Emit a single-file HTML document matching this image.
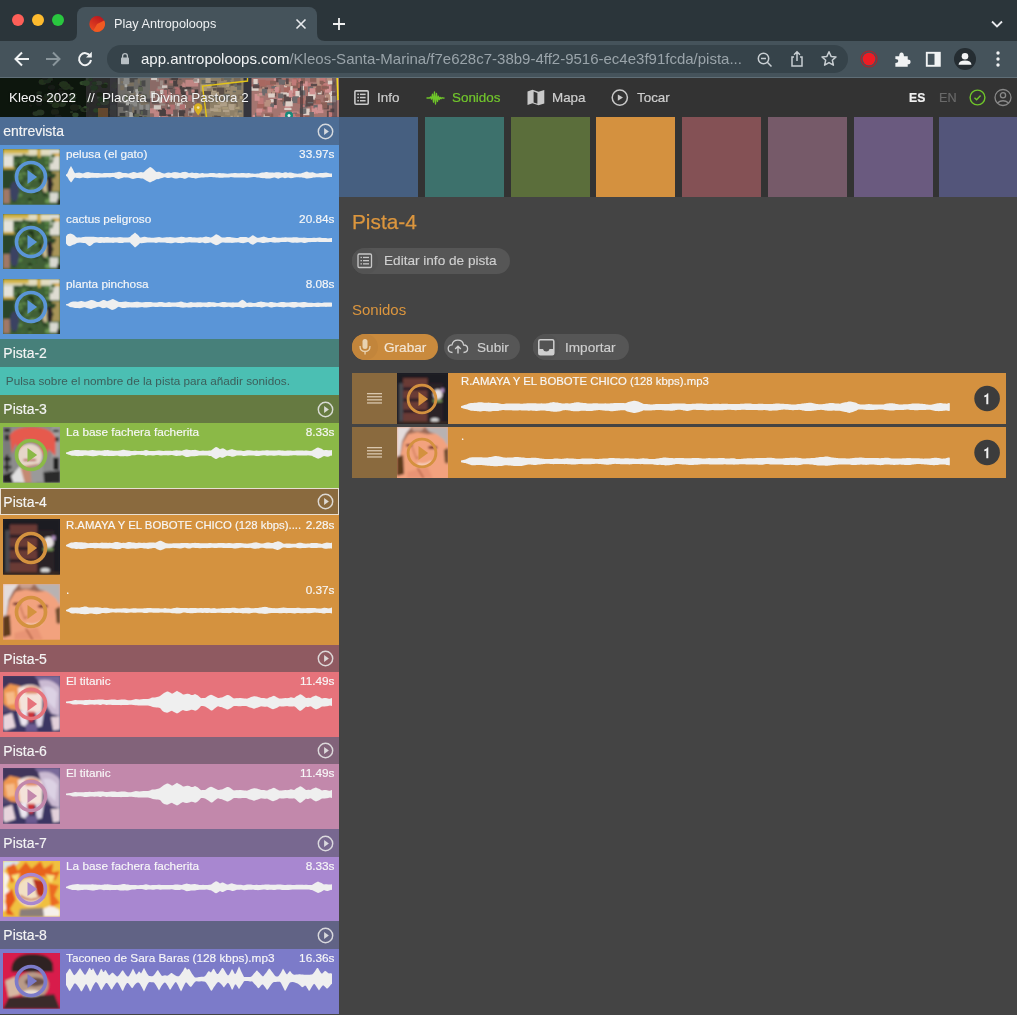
<!DOCTYPE html>
<html><head><meta charset="utf-8"><style>*{margin:0;padding:0;box-sizing:border-box}
html,body{width:1017px;height:1015px;overflow:hidden;background:#444;font-family:"Liberation Sans",sans-serif}
.ab{position:absolute}
.hdr{left:0;width:339px;color:#f4f4f4;font-size:14px;line-height:16px;-webkit-text-stroke:0.15px #f4f4f4}
.msg{left:0;width:339px;color:#3c5f5b;font-size:11.75px;line-height:13px}
.it{font-size:11.8px;line-height:14px;color:#f7f7f7;white-space:nowrap;-webkit-text-stroke:0.15px #f7f7f7}
.it2{font-size:11.35px;line-height:14px;color:#f7f7f7;white-space:nowrap;-webkit-text-stroke:0.15px #f7f7f7}
.nav{font-size:13.4px;line-height:16px;-webkit-text-stroke:0.2px currentColor}
.pill{border-radius:13px}
.btxt{font-size:13.6px;line-height:16px;color:#cfcfcf;-webkit-text-stroke:0.15px currentColor}
.badge{width:25.6px;height:25.6px;border-radius:50%;background:#3c3c3c;color:#f0f0f0;font-size:14.5px;font-weight:bold;line-height:25.6px;text-align:center}
.th{position:absolute;overflow:hidden}
.th-garden{background:linear-gradient(180deg,#c9a94a 0%,#8c8a5a 12%,#4f6e3e 30%,#3e5e34 60%,#5a7a44 85%,#6a8050 100%)}
.th-karma{background:radial-gradient(ellipse at 50% 18%,#e0453a 0%,#d2382e 30%,transparent 45%),radial-gradient(ellipse at 50% 70%,#e8c0b0 0%,#c09080 35%,transparent 60%),linear-gradient(90deg,#6a6a6a,#9a9a9a 50%,#707070)}
.th-dark{background:radial-gradient(ellipse at 40% 55%,#6a2a22 0%,#4a2520 35%,transparent 60%),linear-gradient(90deg,#1a1a1e,#2a1e20 60%,#1c1c20)}
.th-ban{background:radial-gradient(ellipse at 40% 60%,#f0a080 0%,#e09070 40%,#b0603a 75%),linear-gradient(#ddd,#c88)}
.th-witch{background:radial-gradient(ellipse at 35% 45%,#f0a060 0%,#d08060 25%,transparent 45%),radial-gradient(ellipse at 75% 40%,#c0b0d0 0%,transparent 40%),linear-gradient(135deg,#3a3050,#5a4a70 50%,#2a2040)}
.th-flame{background:radial-gradient(ellipse at 50% 55%,#f0e0c0 0%,#e8b060 30%,#f07020 55%,#f8e060 80%,#fff 100%)}
.th-red{background:radial-gradient(ellipse at 50% 55%,#c0a090 0%,#6a4040 30%,#3a2a30 55%,transparent 65%),linear-gradient(#d81848,#e02050)}
div.ab{will-change:transform}
</style></head>
<body>
<svg width="0" height="0" style="position:absolute"><defs><filter id="bl" x="0" y="0" width="100%" height="100%"><feGaussianBlur stdDeviation="1.6"/></filter><symbol id="t-garden" viewBox="0 0 100 100" preserveAspectRatio="none"><rect width="100" height="100" fill="#3f5f36"/><g filter="url(#bl)"><rect width="100" height="100" fill="#3f5f36"/>
<rect x="0" y="0" width="100" height="12" fill="#e2dcc0"/>
<rect x="0" y="0" width="45" height="8" fill="#d2b448"/>
<rect x="60" y="0" width="6" height="16" fill="#c8a840"/>
<rect x="0" y="12" width="18" height="22" fill="#e4e2d8"/>
<rect x="0" y="32" width="20" height="5" fill="#c9a845"/>
<rect x="0" y="37" width="20" height="34" fill="#2a442c"/>
<rect x="82" y="0" width="18" height="38" fill="#dedcd2"/>
<rect x="86" y="8" width="14" height="5" fill="#d8a840"/>
<rect x="86" y="40" width="14" height="36" fill="#a89458"/>
<ellipse cx="40.7" cy="23.3" rx="4.6" ry="1.7" fill="#24381f"/><ellipse cx="24.6" cy="61.3" rx="5.6" ry="2.1" fill="#2c4628"/><ellipse cx="48.4" cy="16.1" rx="2.4" ry="2.8" fill="#24381f"/><ellipse cx="26.7" cy="29.6" rx="4.5" ry="4.3" fill="#24381f"/><ellipse cx="59.0" cy="14.4" rx="2.9" ry="3.2" fill="#3e6234"/><ellipse cx="38.3" cy="22.7" rx="2.5" ry="2.4" fill="#4a7038"/><ellipse cx="30.7" cy="61.2" rx="4.6" ry="2.6" fill="#24381f"/><ellipse cx="67.8" cy="59.7" rx="4.5" ry="3.0" fill="#24381f"/><ellipse cx="47.9" cy="37.6" rx="4.3" ry="2.9" fill="#5a8646"/><ellipse cx="35.4" cy="25.8" rx="5.1" ry="1.7" fill="#5a8646"/><ellipse cx="54.8" cy="87.0" rx="4.9" ry="2.4" fill="#2c4628"/><ellipse cx="26.3" cy="46.8" rx="5.0" ry="2.0" fill="#6e9a54"/><ellipse cx="47.5" cy="94.7" rx="2.3" ry="3.2" fill="#5a8646"/><ellipse cx="41.8" cy="40.8" rx="4.0" ry="3.9" fill="#2c4628"/><ellipse cx="76.8" cy="93.1" rx="3.9" ry="3.5" fill="#2c4628"/><ellipse cx="69.2" cy="37.2" rx="4.3" ry="3.5" fill="#6e9a54"/><ellipse cx="37.9" cy="43.9" rx="4.7" ry="1.6" fill="#6e9a54"/><ellipse cx="42.9" cy="63.8" rx="4.0" ry="2.2" fill="#5a8646"/><ellipse cx="27.1" cy="31.8" rx="3.6" ry="4.1" fill="#2c4628"/><ellipse cx="29.6" cy="45.3" rx="3.1" ry="1.9" fill="#6e9a54"/><ellipse cx="78.5" cy="34.5" rx="3.7" ry="2.6" fill="#6e9a54"/><ellipse cx="85.0" cy="23.3" rx="2.7" ry="2.2" fill="#3e6234"/><ellipse cx="18.8" cy="83.1" rx="2.7" ry="2.3" fill="#3e6234"/><ellipse cx="47.3" cy="42.5" rx="4.3" ry="4.4" fill="#4a7038"/><ellipse cx="78.1" cy="93.6" rx="4.6" ry="3.7" fill="#6e9a54"/><ellipse cx="81.0" cy="78.6" rx="5.5" ry="3.9" fill="#6e9a54"/><ellipse cx="45.9" cy="44.7" rx="3.9" ry="2.7" fill="#3e6234"/><ellipse cx="22.7" cy="28.4" rx="2.6" ry="2.5" fill="#2c4628"/><ellipse cx="25.2" cy="59.9" rx="4.1" ry="4.3" fill="#24381f"/><ellipse cx="19.8" cy="86.9" rx="4.5" ry="1.9" fill="#5a8646"/><ellipse cx="84.9" cy="63.0" rx="3.9" ry="1.8" fill="#6e9a54"/><ellipse cx="87.5" cy="51.0" rx="3.9" ry="1.8" fill="#2c4628"/><ellipse cx="70.5" cy="75.2" rx="3.9" ry="3.6" fill="#24381f"/><ellipse cx="19.6" cy="93.7" rx="4.1" ry="1.9" fill="#24381f"/><ellipse cx="82.0" cy="76.7" rx="3.2" ry="3.4" fill="#2c4628"/><ellipse cx="66.7" cy="33.0" rx="3.5" ry="2.0" fill="#3e6234"/><ellipse cx="55.3" cy="78.6" rx="3.3" ry="2.2" fill="#3e6234"/><ellipse cx="74.4" cy="82.0" rx="5.0" ry="2.2" fill="#24381f"/><ellipse cx="52.5" cy="74.3" rx="6.0" ry="3.9" fill="#6e9a54"/><ellipse cx="36.1" cy="70.9" rx="5.8" ry="2.8" fill="#4a7038"/><ellipse cx="87.2" cy="94.0" rx="3.5" ry="2.2" fill="#3e6234"/><ellipse cx="50.9" cy="39.7" rx="3.9" ry="4.5" fill="#24381f"/><ellipse cx="76.8" cy="52.2" rx="4.6" ry="3.9" fill="#2c4628"/><ellipse cx="76.4" cy="20.6" rx="3.6" ry="3.6" fill="#3e6234"/><ellipse cx="51.5" cy="25.7" rx="5.2" ry="2.5" fill="#4a7038"/><ellipse cx="45.7" cy="45.3" rx="5.8" ry="3.7" fill="#3e6234"/><ellipse cx="87.5" cy="12.4" rx="4.4" ry="2.9" fill="#4a7038"/><ellipse cx="28.2" cy="82.7" rx="5.9" ry="3.5" fill="#5a8646"/><ellipse cx="28.9" cy="58.2" rx="2.1" ry="3.9" fill="#4a7038"/><ellipse cx="63.5" cy="56.3" rx="5.7" ry="2.8" fill="#3e6234"/><ellipse cx="75.8" cy="28.6" rx="3.0" ry="2.4" fill="#3e6234"/><ellipse cx="71.5" cy="38.7" rx="4.2" ry="4.0" fill="#2c4628"/><ellipse cx="81.7" cy="41.1" rx="3.8" ry="3.3" fill="#24381f"/><ellipse cx="47.4" cy="90.8" rx="4.0" ry="3.1" fill="#24381f"/><ellipse cx="53.7" cy="86.8" rx="5.1" ry="3.3" fill="#3e6234"/><ellipse cx="30.1" cy="51.7" rx="4.9" ry="3.2" fill="#5a8646"/><ellipse cx="65.8" cy="56.7" rx="3.9" ry="3.8" fill="#24381f"/><ellipse cx="22.0" cy="26.8" rx="2.2" ry="1.8" fill="#6e9a54"/><ellipse cx="57.3" cy="76.9" rx="5.6" ry="2.8" fill="#24381f"/><ellipse cx="86.1" cy="63.3" rx="2.8" ry="2.3" fill="#24381f"/><ellipse cx="55.3" cy="52.1" rx="5.8" ry="3.6" fill="#5a8646"/><ellipse cx="82.6" cy="88.6" rx="2.8" ry="2.8" fill="#6e9a54"/><ellipse cx="26.5" cy="48.9" rx="2.3" ry="2.2" fill="#2c4628"/><ellipse cx="32.9" cy="36.6" rx="2.5" ry="3.8" fill="#4a7038"/><ellipse cx="63.0" cy="42.2" rx="3.0" ry="1.9" fill="#6e9a54"/><ellipse cx="33.4" cy="93.8" rx="3.6" ry="3.0" fill="#4a7038"/><ellipse cx="76.3" cy="24.2" rx="3.7" ry="3.0" fill="#5a8646"/><ellipse cx="47.5" cy="41.4" rx="2.4" ry="2.6" fill="#5a8646"/><ellipse cx="56.8" cy="48.8" rx="2.1" ry="2.5" fill="#24381f"/><ellipse cx="38.7" cy="94.5" rx="2.5" ry="4.3" fill="#3e6234"/><ellipse cx="86.0" cy="19.2" rx="3.1" ry="1.6" fill="#3e6234"/><ellipse cx="36.9" cy="21.4" rx="3.7" ry="4.2" fill="#5a8646"/><ellipse cx="46.4" cy="57.2" rx="4.1" ry="3.0" fill="#5a8646"/><ellipse cx="24.3" cy="15.1" rx="4.8" ry="2.8" fill="#2c4628"/><ellipse cx="36.8" cy="11.5" rx="2.4" ry="2.3" fill="#24381f"/><ellipse cx="77.9" cy="15.9" rx="5.5" ry="2.9" fill="#5a8646"/><ellipse cx="87.6" cy="46.8" rx="5.7" ry="3.4" fill="#2c4628"/><ellipse cx="54.9" cy="31.0" rx="2.4" ry="2.0" fill="#2c4628"/><ellipse cx="30.7" cy="92.0" rx="4.5" ry="3.1" fill="#3e6234"/><ellipse cx="38.3" cy="54.0" rx="2.7" ry="2.5" fill="#2c4628"/><ellipse cx="87.6" cy="13.3" rx="2.1" ry="3.0" fill="#3e6234"/><ellipse cx="54.0" cy="31.6" rx="3.8" ry="3.5" fill="#4a7038"/><ellipse cx="48.3" cy="53.6" rx="5.3" ry="2.7" fill="#24381f"/><ellipse cx="39.5" cy="28.9" rx="2.9" ry="2.1" fill="#4a7038"/><ellipse cx="69.0" cy="22.3" rx="6.0" ry="4.4" fill="#3e6234"/><ellipse cx="19.0" cy="65.0" rx="5.5" ry="2.8" fill="#2c4628"/><ellipse cx="23.9" cy="84.0" rx="5.5" ry="3.5" fill="#5a8646"/><ellipse cx="59.9" cy="71.0" rx="2.2" ry="2.1" fill="#5a8646"/><ellipse cx="49.2" cy="33.2" rx="5.8" ry="4.4" fill="#24381f"/><ellipse cx="40.6" cy="13.0" rx="5.5" ry="2.2" fill="#3e6234"/>
<rect x="0" y="72" width="12" height="26" fill="#a07868"/>
<ellipse cx="20" cy="76" rx="8" ry="18" fill="#3b4262"/>
<ellipse cx="74" cy="66" rx="5" ry="12" fill="#c8b890"/>
<ellipse cx="82" cy="64" rx="5" ry="16" fill="#2a2428"/>
<rect x="82" y="78" width="15" height="18" fill="#d8d8d0"/>
<rect x="95" y="90" width="5" height="10" fill="#181818"/></g></symbol><symbol id="t-karma" viewBox="0 0 100 100" preserveAspectRatio="none"><rect width="100" height="100" fill="#8c8c8c"/><g filter="url(#bl)"><rect width="100" height="100" fill="#8c8c8c"/>
<rect x="0" y="0" width="14" height="100" fill="#7a7a7a"/>
<rect x="2" y="3" width="10" height="6" fill="#222"/><rect x="3" y="14" width="8" height="10" fill="#333"/>
<rect x="2" y="55" width="12" height="5" fill="#1a1a1a"/><rect x="5" y="50" width="4" height="30" fill="#1a1a1a"/><rect x="1" y="70" width="14" height="4" fill="#222"/>
<rect x="86" y="0" width="14" height="100" fill="#a0a0a0"/>
<rect x="88" y="5" width="10" height="4" fill="#222"/><rect x="90" y="18" width="8" height="8" fill="#333"/>
<rect x="88" y="55" width="10" height="22" fill="#222"/><rect x="84" y="88" width="12" height="6" fill="#333"/>
<path d="M12 15 Q20 0 50 0 Q85 0 92 20 L92 52 L80 40 L74 55 L62 30 L38 22 L30 45 L22 30 L16 48Z" fill="#e65a4e"/>
<ellipse cx="47" cy="52" rx="22" ry="22" fill="#e6d6c8"/>
<path d="M30 72 L62 66 L65 100 L30 100Z" fill="#c48a72"/>
<path d="M0 86 L20 80 L30 100 L0 100Z" fill="#222"/>
<path d="M14 88 L30 70 L38 100 L18 100Z" fill="#e0e0e0"/>
<path d="M60 82 L100 78 L100 100 L58 100Z" fill="#2a2a2a"/>
<path d="M48 72 L70 68 L72 100 L50 100Z" fill="#9a9a9a"/>
<rect x="36" y="58" width="22" height="3" fill="#a82a2a"/></g></symbol><symbol id="t-dark" viewBox="0 0 100 100" preserveAspectRatio="none"><rect width="100" height="100" fill="#1b1b23"/><g filter="url(#bl)"><rect width="100" height="100" fill="#1b1b23"/>
<rect x="4" y="20" width="8" height="75" fill="#4a4a50"/>
<rect x="12" y="10" width="48" height="86" fill="#6a3a34"/>
<rect x="12" y="28" width="48" height="6" fill="#2a1e26"/>
<rect x="12" y="50" width="48" height="6" fill="#2a1e26"/>
<rect x="12" y="72" width="48" height="6" fill="#2a1e26"/>
<rect x="60" y="20" width="30" height="80" fill="#2c2028"/>
<ellipse cx="80" cy="42" rx="9" ry="10" fill="#e6dfe0"/>
<rect x="70" y="52" width="18" height="5" fill="#7a9a5a"/>
<rect x="86" y="30" width="6" height="8" fill="#b090c0"/>
<ellipse cx="74" cy="92" rx="8" ry="4" fill="#ddd"/>
<rect x="0" y="95" width="100" height="5" fill="#3a2a20"/></g></symbol><symbol id="t-ban" viewBox="0 0 100 100" preserveAspectRatio="none"><rect width="100" height="100" fill="#f2a27e"/><g filter="url(#bl)"><rect width="100" height="100" fill="#f2a27e"/>
<path d="M0 0 L100 0 L100 22 L80 12 L60 14 L40 10 L22 14 L12 30 L6 60 L0 62Z" fill="#9a6a58"/>
<path d="M0 0 L28 0 L18 12 L10 28 L6 55 L0 58Z" fill="#e4dcdc"/>
<path d="M55 0 L100 0 L100 38 L92 25 L78 14 L64 10Z" fill="#b8b2b2"/>
<path d="M28 0 L55 0 L48 8 L32 8Z" fill="#c8a090"/>
<path d="M0 60 L12 55 L14 92 L0 96Z" fill="#5e3a1e"/>
<path d="M92 45 L100 40 L100 72 L94 70Z" fill="#6a4a2c"/>
<ellipse cx="70" cy="40" rx="9" ry="3.2" fill="#6e2624"/>
<ellipse cx="24" cy="36" rx="7" ry="2.6" fill="#6e2a24"/>
<ellipse cx="85" cy="50" rx="6" ry="10" fill="#f0a080"/>
<path d="M40 72 Q55 78 68 68" stroke="#f6d8c8" stroke-width="4" fill="none"/>
<path d="M30 40 L38 62 L44 58" stroke="#c06a50" stroke-width="2" fill="none"/>
<path d="M20 88 L60 78 L70 100 L20 100Z" fill="#e89474"/>
<path d="M40 80 L52 100" stroke="#9a4a30" stroke-width="2"/></g></symbol><symbol id="t-witch" viewBox="0 0 100 100" preserveAspectRatio="none"><rect width="100" height="100" fill="#54486e"/><g filter="url(#bl)"><rect width="100" height="100" fill="#54486e"/>
<path d="M0 0 L100 0 L100 15 L60 22 L0 20Z" fill="#40345a"/>
<path d="M55 0 L100 0 L100 25 L70 18Z" fill="#7a6a9a"/>
<path d="M0 25 L12 14 L30 18 L38 40 L32 62 L14 60 L0 50Z" fill="#ee9650"/>
<path d="M4 30 L20 28 L22 50 L8 52Z" fill="#f6bc88"/>
<path d="M26 22 Q50 8 70 25 L68 64 Q50 72 30 64Z" fill="#f4e2da"/>
<path d="M38 22 Q52 14 64 24 L60 32 L40 32Z" fill="#e08a66"/>
<path d="M62 8 Q88 2 100 22 L100 80 L88 72 L74 50 L68 28Z" fill="#cabad2"/>
<path d="M70 20 Q85 15 95 30 L92 60 L80 48Z" fill="#dcd2e4"/>
<path d="M0 64 L30 62 L50 68 L70 64 L100 72 L100 100 L0 100Z" fill="#3a3462"/>
<path d="M42 64 L56 64 L52 82 L46 82Z" fill="#cc3038"/>
<path d="M26 64 L42 62 L44 92 L32 88Z" fill="#ece6f0"/>
<path d="M58 66 L72 64 L68 90 L58 92Z" fill="#e0d8e8"/>
<path d="M0 72 L16 66 L22 92 L4 98 L0 94Z" fill="#e6d4dc"/>
<path d="M84 74 L100 72 L100 96 L88 98Z" fill="#e2d0da"/>
<rect x="40" y="86" width="20" height="14" fill="#6a5a90"/></g></symbol><symbol id="t-flame" viewBox="0 0 100 100" preserveAspectRatio="none"><rect width="100" height="100" fill="#f0c040"/><g filter="url(#bl)"><rect width="100" height="100" fill="#f0c040"/>
<path d="M0 0 L30 0 L20 10 L8 8 L0 20Z" fill="#d6e6f2"/>
<path d="M0 18 L12 28 L6 45 L14 58 L2 72 L8 86 L0 90Z" fill="#f8f4ee"/>
<path d="M70 86 L84 80 L100 88 L100 100 L66 100Z" fill="#f6f0ea"/>
<path d="M6 12 L20 4 L26 18 L40 2 L50 14 L66 0 L72 14 L88 4 L86 20 L100 18 L92 34 L70 28 L30 30 L14 40Z" fill="#e8621e"/>
<path d="M4 60 L16 50 L22 70 L12 86 L20 98 L6 96Z" fill="#e6561c"/>
<path d="M80 40 L98 44 L90 62 L100 76 L84 82Z" fill="#ec6a22"/>
<path d="M14 26 L30 22 L24 40Z M74 24 L92 26 L84 40Z" fill="#fae27a"/>
<ellipse cx="48" cy="56" rx="24" ry="26" fill="#f2e0c4"/>
<path d="M52 32 L74 36 L72 66 L60 62 L56 46Z" fill="#b8321c"/>
<path d="M30 62 Q48 76 66 64" stroke="#c26040" stroke-width="3" fill="none"/>
<path d="M30 86 L70 84 L72 100 L28 100Z" fill="#8a7e7a"/></g></symbol><symbol id="t-red" viewBox="0 0 100 100" preserveAspectRatio="none"><rect width="100" height="100" fill="#d81a4c"/><g filter="url(#bl)"><rect width="100" height="100" fill="#d81a4c"/>
<path d="M15 25 Q20 0 55 2 Q90 4 88 28 L88 34 L15 34Z" fill="#2e2224"/>
<ellipse cx="52" cy="58" rx="28" ry="24" fill="#b89a88"/>
<ellipse cx="56" cy="52" rx="18" ry="8" fill="#6a5048"/>
<path d="M4 50 L22 42 L30 75 L10 80Z" fill="#d6b8a2"/>
<path d="M10 80 L90 74 L100 100 L0 100Z" fill="#3a2a2c"/>
<ellipse cx="50" cy="72" rx="16" ry="6" fill="#e8dcd0"/></g></symbol></defs></svg>
<div class="ab" style="left:0;top:0;width:1017px;height:41px;background:#2b353a"></div>
<div class="ab" style="left:0;top:41px;width:1017px;height:36px;background:#45535b"></div>
<div class="ab" style="left:0;top:77px;width:1017px;height:1px;background:#5f6e77"></div>
<div class="ab" style="left:12px;top:14px;width:12px;height:12px;border-radius:50%;background:#fe5f58"></div>
<div class="ab" style="left:32px;top:14px;width:12px;height:12px;border-radius:50%;background:#febb2e"></div>
<div class="ab" style="left:52px;top:14px;width:12px;height:12px;border-radius:50%;background:#29c73f"></div>
<div class="ab" style="left:77px;top:7px;width:240px;height:34px;background:#45535b;border-radius:8px 8px 0 0"></div>
<svg class="ab" style="left:69px;top:33px" width="8" height="8"><path d="M0 8 Q8 8 8 0 L8 8Z" fill="#45535b"/></svg>
<svg class="ab" style="left:317px;top:33px" width="8" height="8"><path d="M8 8 Q0 8 0 0 L0 8Z" fill="#45535b"/></svg>
<svg class="ab" style="left:89px;top:16px" width="16" height="16" viewBox="0 0 16 16"><defs><linearGradient id="fg" x1="0.8" y1="0" x2="0.2" y2="1"><stop offset="0" stop-color="#b8141e"/><stop offset="1" stop-color="#ea4a20"/></linearGradient></defs><circle cx="8.1" cy="7.9" r="7.8" fill="url(#fg)"/><path d="M8.1 7.9 L15.2 4.6 A7.8 7.8 0 0 1 4.2 14.65Z" fill="#f05a22"/></svg>
<div class="ab" style="left:113.5px;top:16.8px;font-size:12.7px;color:#eef0f2;white-space:nowrap">Play Antropoloops</div>
<svg class="ab" style="left:295px;top:18px" width="12" height="12" viewBox="0 0 12 12"><path d="M1.5 1.5 L10.5 10.5 M10.5 1.5 L1.5 10.5" stroke="#e8eaed" stroke-width="1.6"/></svg>
<svg class="ab" style="left:332px;top:17px" width="14" height="14" viewBox="0 0 14 14"><path d="M7 1 L7 13 M1 7 L13 7" stroke="#f0f0f0" stroke-width="1.8"/></svg>
<svg class="ab" style="left:990px;top:19px" width="14" height="10" viewBox="0 0 14 10"><path d="M2 2.5 L7 7.5 L12 2.5" fill="none" stroke="#e8eaed" stroke-width="1.8"/></svg>
<svg class="ab" style="left:12px;top:49px" width="20" height="20" viewBox="0 0 20 20"><path d="M17 10 L3.5 10 M10 3.5 L3.5 10 L10 16.5" fill="none" stroke="#f1f3f4" stroke-width="2"/></svg>
<svg class="ab" style="left:43px;top:49px" width="20" height="20" viewBox="0 0 20 20"><path d="M3 10 L16.5 10 M10 3.5 L16.5 10 L10 16.5" fill="none" stroke="#8a969c" stroke-width="2"/></svg>
<svg class="ab" style="left:75px;top:49px" width="20" height="20" viewBox="0 0 20 20"><path d="M15.2 7 A6 6 0 1 0 16 11" fill="none" stroke="#f1f3f4" stroke-width="2"/><path d="M16.8 2.8 L16.8 8.6 L11 8.6Z" fill="#f1f3f4"/></svg>
<div class="ab" style="left:107px;top:45px;width:741px;height:27.5px;border-radius:14px;background:#36434a"></div>
<svg class="ab" style="left:120px;top:52px" width="10" height="13" viewBox="0 0 10 13"><path d="M2.6 6 L2.6 4 A2.4 2.4 0 0 1 7.4 4 L7.4 6" fill="none" stroke="#b8bfc4" stroke-width="1.3"/><rect x="1" y="5.6" width="8" height="6.6" rx="0.8" fill="#b8bfc4"/></svg>
<div class="ab" style="left:141px;top:50px;font-size:15px;white-space:nowrap;color:#9aa4aa"><span style="color:#f1f3f4">app.antropoloops.com</span>/Kleos-Santa-Marina/f7e628c7-38b9-4ff2-9516-ec4e3f91fcda/pista...</div>
<svg class="ab" style="left:756px;top:50.5px" width="18" height="18" viewBox="0 0 18 18"><circle cx="7.5" cy="7.5" r="5.2" fill="none" stroke="#c8ced2" stroke-width="1.5"/><path d="M11.3 11.3 L15.5 15.5 M5 7.5 L10 7.5" stroke="#c8ced2" stroke-width="1.5"/></svg>
<svg class="ab" style="left:789px;top:50px" width="16" height="18" viewBox="0 0 16 18"><path d="M5 7 L3 7 L3 16 L13 16 L13 7 L11 7 M8 11 L8 2 M5 4.8 L8 1.8 L11 4.8" fill="none" stroke="#c8ced2" stroke-width="1.5"/></svg>
<svg class="ab" style="left:820px;top:50px" width="18" height="18" viewBox="0 0 18 18"><path d="M9 1.8 L11.1 6.4 L16 6.9 L12.3 10.2 L13.4 15.2 L9 12.6 L4.6 15.2 L5.7 10.2 L2 6.9 L6.9 6.4Z" fill="none" stroke="#c8ced2" stroke-width="1.5" stroke-linejoin="round"/></svg>
<svg class="ab" style="left:859px;top:49px" width="20" height="20" viewBox="0 0 20 20"><circle cx="10" cy="10" r="8" fill="none" stroke="#b02028" stroke-width="1.2"/><circle cx="10" cy="10" r="6.3" fill="#ee1c24"/></svg>
<svg class="ab" style="left:892.5px;top:50.5px" width="18" height="18" viewBox="0 0 18 18"><path d="M2 6 L6 6 Q6 2 8.5 2 Q11 2 11 6 L15 6 L15 9.5 Q18 9.5 18 12 Q18 14.5 15 14.5 L15 17 L2 17 L2 13 Q5 13 5 11 Q5 9 2 9Z" fill="#f1f3f4" transform="scale(0.95) translate(0.5,-0.5)"/></svg>
<svg class="ab" style="left:925px;top:51px" width="17" height="17" viewBox="0 0 17 17"><rect x="1.8" y="1.8" width="13" height="13" fill="none" stroke="#f1f3f4" stroke-width="1.9"/><rect x="9.5" y="1.5" width="5.5" height="13.5" fill="#f1f3f4"/></svg>
<div class="ab" style="left:954px;top:48px;width:22px;height:22px;border-radius:50%;background:#252d32"></div>
<svg class="ab" style="left:955px;top:49px" width="20" height="20" viewBox="0 0 20 20"><circle cx="10" cy="7.3" r="3.3" fill="#f1f3f4"/><path d="M3.5 15.8 Q4 11.6 10 11.6 Q16 11.6 16.5 15.8Z" fill="#f1f3f4"/></svg>
<svg class="ab" style="left:992.5px;top:50px" width="10" height="18" viewBox="0 0 10 18"><circle cx="5" cy="3" r="1.7" fill="#f1f3f4"/><circle cx="5" cy="9" r="1.7" fill="#f1f3f4"/><circle cx="5" cy="15" r="1.7" fill="#f1f3f4"/></svg>

<div class="ab mapbar" style="left:0;top:78px;width:339px;height:39px"><svg class="ab" style="left:0;top:0" width="339" height="39" viewBox="0 0 339 39"><defs><filter id="mb" x="0" y="0" width="100%" height="100%"><feGaussianBlur stdDeviation="0.6"/></filter></defs><g filter="url(#mb)"><rect width="339" height="39" fill="#0f120f"/><ellipse cx="87.5" cy="1.0" rx="2.5" ry="1.7" fill="#1a2418"/><ellipse cx="42.6" cy="4.0" rx="4.1" ry="2.9" fill="#22301f"/><ellipse cx="37.8" cy="16.5" rx="1.6" ry="1.1" fill="#1a2418"/><ellipse cx="50.9" cy="23.5" rx="3.5" ry="2.4" fill="#263624"/><ellipse cx="88.5" cy="21.3" rx="2.3" ry="1.6" fill="#22301f"/><ellipse cx="55.0" cy="33.9" rx="4.2" ry="2.9" fill="#1a2418"/><ellipse cx="92.8" cy="13.3" rx="2.0" ry="1.4" fill="#1e2a1c"/><ellipse cx="39.2" cy="14.8" rx="2.8" ry="1.9" fill="#1e2a1c"/><ellipse cx="84.3" cy="31.5" rx="4.1" ry="2.8" fill="#22301f"/><ellipse cx="41.2" cy="36.0" rx="1.8" ry="1.2" fill="#1e2a1c"/><ellipse cx="104.6" cy="24.1" rx="4.5" ry="3.2" fill="#22301f"/><ellipse cx="47.3" cy="2.7" rx="3.8" ry="2.7" fill="#1e2a1c"/><ellipse cx="118.7" cy="33.4" rx="4.5" ry="3.2" fill="#141a13"/><ellipse cx="55.0" cy="24.8" rx="2.8" ry="1.9" fill="#1e2a1c"/><ellipse cx="62.0" cy="26.1" rx="4.0" ry="2.8" fill="#263624"/><ellipse cx="88.3" cy="23.8" rx="2.1" ry="1.5" fill="#263624"/><ellipse cx="52.0" cy="18.0" rx="2.4" ry="1.7" fill="#263624"/><ellipse cx="91.9" cy="8.6" rx="2.6" ry="1.8" fill="#161c15"/><ellipse cx="50.6" cy="1.3" rx="2.6" ry="1.8" fill="#1e2a1c"/><ellipse cx="36.0" cy="35.6" rx="3.5" ry="2.4" fill="#263624"/><ellipse cx="58.3" cy="25.6" rx="2.9" ry="2.0" fill="#263624"/><ellipse cx="71.3" cy="10.3" rx="2.4" ry="1.7" fill="#22301f"/><ellipse cx="78.5" cy="29.1" rx="3.0" ry="2.1" fill="#22301f"/><ellipse cx="65.9" cy="8.6" rx="5.0" ry="3.5" fill="#22301f"/><ellipse cx="74.4" cy="29.5" rx="4.5" ry="3.2" fill="#1a2418"/><ellipse cx="86.5" cy="30.9" rx="3.0" ry="2.1" fill="#161c15"/><ellipse cx="64.6" cy="23.2" rx="3.1" ry="2.2" fill="#1e2a1c"/><ellipse cx="117.4" cy="33.6" rx="1.5" ry="1.1" fill="#263624"/><ellipse cx="40.3" cy="34.5" rx="4.1" ry="2.9" fill="#263624"/><ellipse cx="60.6" cy="11.4" rx="2.1" ry="1.4" fill="#161c15"/><ellipse cx="115.8" cy="34.2" rx="2.4" ry="1.7" fill="#22301f"/><ellipse cx="98.6" cy="19.8" rx="1.9" ry="1.3" fill="#263624"/><ellipse cx="56.9" cy="24.9" rx="3.6" ry="2.5" fill="#1a2418"/><ellipse cx="63.7" cy="6.3" rx="4.8" ry="3.4" fill="#22301f"/><ellipse cx="112.7" cy="23.4" rx="3.2" ry="2.2" fill="#161c15"/><ellipse cx="113.6" cy="34.3" rx="4.4" ry="3.1" fill="#1e2a1c"/><ellipse cx="51.6" cy="9.4" rx="3.5" ry="2.4" fill="#161c15"/><ellipse cx="37.7" cy="19.0" rx="1.7" ry="1.2" fill="#22301f"/><ellipse cx="98.9" cy="5.0" rx="3.2" ry="2.2" fill="#22301f"/><ellipse cx="44.9" cy="20.6" rx="3.6" ry="2.5" fill="#1a2418"/><ellipse cx="113.6" cy="29.5" rx="3.9" ry="2.7" fill="#263624"/><ellipse cx="58.1" cy="38.8" rx="3.8" ry="2.6" fill="#141a13"/><ellipse cx="111.0" cy="17.6" rx="2.4" ry="1.7" fill="#161c15"/><ellipse cx="60.4" cy="22.9" rx="2.3" ry="1.6" fill="#1a2418"/><ellipse cx="30.6" cy="27.6" rx="1.7" ry="1.2" fill="#161c15"/><ellipse cx="111.5" cy="33.5" rx="1.7" ry="1.2" fill="#1a2418"/><ellipse cx="55.1" cy="18.9" rx="3.4" ry="2.4" fill="#263624"/><ellipse cx="114.2" cy="22.3" rx="3.2" ry="2.2" fill="#141a13"/><ellipse cx="102.7" cy="7.4" rx="1.8" ry="1.3" fill="#141a13"/><ellipse cx="61.9" cy="16.0" rx="4.5" ry="3.2" fill="#161c15"/><ellipse cx="90.6" cy="38.4" rx="1.8" ry="1.3" fill="#141a13"/><ellipse cx="95.5" cy="31.2" rx="1.9" ry="1.3" fill="#1a2418"/><ellipse cx="47.1" cy="17.5" rx="3.0" ry="2.1" fill="#1e2a1c"/><ellipse cx="71.6" cy="34.1" rx="1.8" ry="1.2" fill="#22301f"/><ellipse cx="38.8" cy="25.4" rx="3.4" ry="2.4" fill="#161c15"/><ellipse cx="117.2" cy="36.1" rx="4.5" ry="3.1" fill="#1a2418"/><ellipse cx="66.6" cy="18.8" rx="4.5" ry="3.2" fill="#161c15"/><ellipse cx="44.8" cy="0.1" rx="2.9" ry="2.0" fill="#141a13"/><ellipse cx="55.7" cy="27.2" rx="4.1" ry="2.8" fill="#22301f"/><ellipse cx="89.6" cy="19.0" rx="2.2" ry="1.5" fill="#1a2418"/><rect x="86" y="0" width="30" height="39" fill="#4a4a4a" opacity="0.45"/><ellipse cx="116.5" cy="22.6" rx="2.9" ry="2.0" fill="#1a2618"/><ellipse cx="72.7" cy="22.8" rx="2.8" ry="1.9" fill="#2a4026"/><ellipse cx="72.7" cy="19.8" rx="3.6" ry="2.5" fill="#223420"/><ellipse cx="98.6" cy="26.3" rx="2.1" ry="1.5" fill="#223420"/><ellipse cx="115.2" cy="22.2" rx="2.9" ry="2.1" fill="#223420"/><ellipse cx="99.7" cy="16.3" rx="3.0" ry="2.1" fill="#1a2618"/><ellipse cx="114.9" cy="8.0" rx="3.3" ry="2.3" fill="#2a4026"/><ellipse cx="82.7" cy="5.1" rx="3.1" ry="2.2" fill="#304a2c"/><ellipse cx="85.2" cy="29.3" rx="1.7" ry="1.2" fill="#304a2c"/><ellipse cx="99.8" cy="22.0" rx="1.7" ry="1.2" fill="#2a4026"/><ellipse cx="94.3" cy="5.2" rx="2.4" ry="1.7" fill="#223420"/><ellipse cx="112.2" cy="14.4" rx="1.9" ry="1.3" fill="#1a2618"/><ellipse cx="99.4" cy="38.5" rx="3.1" ry="2.2" fill="#223420"/><ellipse cx="102.1" cy="21.6" rx="3.8" ry="2.7" fill="#223420"/><ellipse cx="115.1" cy="5.2" rx="1.8" ry="1.3" fill="#223420"/><ellipse cx="105.6" cy="6.1" rx="2.2" ry="1.5" fill="#2a4026"/><ellipse cx="104.4" cy="7.9" rx="3.1" ry="2.2" fill="#1a2618"/><ellipse cx="94.3" cy="9.8" rx="3.8" ry="2.6" fill="#223420"/><ellipse cx="74.4" cy="16.5" rx="2.2" ry="1.5" fill="#223420"/><ellipse cx="86.0" cy="5.1" rx="3.9" ry="2.8" fill="#2a4026"/><ellipse cx="105.6" cy="21.5" rx="2.6" ry="1.8" fill="#223420"/><ellipse cx="75.4" cy="36.9" rx="3.2" ry="2.3" fill="#2a4026"/><ellipse cx="96.2" cy="32.5" rx="3.0" ry="2.1" fill="#2a4026"/><ellipse cx="90.6" cy="1.6" rx="2.4" ry="1.7" fill="#223420"/><ellipse cx="113.1" cy="8.2" rx="2.1" ry="1.5" fill="#223420"/><rect x="98" y="30" width="10" height="9" fill="#8a5a30" opacity="0.6"/><rect x="117" y="0" width="33" height="39" fill="#6e6c68"/><rect x="143.0" y="37.9" width="4.1" height="4.8" fill="#7a7060"/><rect x="143.7" y="38.0" width="2.9" height="6.6" fill="#5a6050"/><rect x="121.7" y="35.9" width="3.1" height="4.1" fill="#5a6050"/><rect x="139.7" y="31.2" width="7.6" height="6.0" fill="#4a4a4a"/><rect x="128.3" y="-0.4" width="3.0" height="5.5" fill="#a8a8a4"/><rect x="130.6" y="10.5" width="3.3" height="6.1" fill="#5a6050"/><rect x="134.3" y="14.3" width="7.2" height="3.1" fill="#4a4a4a"/><rect x="123.8" y="24.3" width="7.2" height="6.8" fill="#a8a8a4"/><rect x="125.6" y="-0.9" width="6.1" height="6.2" fill="#4a4a4a"/><rect x="124.5" y="2.4" width="3.1" height="6.8" fill="#a8a8a4"/><rect x="129.5" y="38.4" width="4.1" height="5.9" fill="#6a6a68"/><rect x="123.8" y="27.1" width="4.3" height="4.9" fill="#6a6a68"/><rect x="136.5" y="36.6" width="5.1" height="6.0" fill="#7a7060"/><rect x="118.0" y="25.2" width="6.0" height="3.8" fill="#4a4a4a"/><rect x="119.6" y="34.9" width="5.7" height="5.3" fill="#3a3a3a"/><rect x="128.5" y="10.1" width="3.9" height="4.0" fill="#8a8a88"/><rect x="128.1" y="28.7" width="3.2" height="5.3" fill="#8a8a88"/><rect x="132.1" y="-2.0" width="5.7" height="3.5" fill="#4a4a4a"/><rect x="135.3" y="11.2" width="3.3" height="5.9" fill="#a8a8a4"/><rect x="130.4" y="34.9" width="4.7" height="3.1" fill="#5a6050"/><rect x="124.1" y="25.2" width="6.4" height="5.3" fill="#3a3a3a"/><rect x="139.3" y="25.6" width="4.0" height="6.1" fill="#8a8a88"/><rect x="117.3" y="38.3" width="6.8" height="2.7" fill="#3a3a3a"/><rect x="127.6" y="23.8" width="7.1" height="2.4" fill="#8a8a88"/><rect x="127.5" y="4.1" width="6.3" height="3.9" fill="#7a7060"/><rect x="141.4" y="2.4" width="2.0" height="5.8" fill="#a8a8a4"/><rect x="138.1" y="17.0" width="3.3" height="6.0" fill="#3a3a3a"/><rect x="130.4" y="30.9" width="3.5" height="6.2" fill="#7a7060"/><rect x="125.5" y="29.0" width="5.2" height="4.8" fill="#a8a8a4"/><rect x="130.8" y="32.1" width="5.7" height="5.6" fill="#3a3a3a"/><rect x="142.1" y="16.5" width="4.7" height="2.8" fill="#5a6050"/><rect x="140.1" y="19.4" width="3.5" height="5.2" fill="#7a7060"/><rect x="138.5" y="7.6" width="3.4" height="4.2" fill="#4a4a4a"/><rect x="120.3" y="7.5" width="3.9" height="4.7" fill="#7a7060"/><rect x="129.3" y="11.6" width="2.9" height="3.1" fill="#a8a8a4"/><rect x="128.8" y="35.1" width="4.5" height="3.0" fill="#3a3a3a"/><rect x="140.1" y="21.6" width="7.7" height="2.1" fill="#a8a8a4"/><rect x="140.8" y="33.0" width="2.0" height="3.8" fill="#5a6050"/><rect x="132.6" y="22.7" width="4.5" height="5.7" fill="#8a8a88"/><rect x="130.6" y="13.9" width="4.9" height="3.4" fill="#7a7060"/><rect x="120.8" y="17.2" width="6.1" height="4.0" fill="#8a8a88"/><rect x="140.6" y="22.3" width="7.9" height="4.7" fill="#7a7060"/><rect x="120.5" y="16.9" width="2.2" height="5.2" fill="#6a6a68"/><rect x="130.3" y="11.8" width="3.6" height="3.6" fill="#a8a8a4"/><rect x="129.2" y="32.2" width="3.7" height="6.8" fill="#a8a8a4"/><rect x="148.9" y="12.3" width="2.1" height="4.7" fill="#7a7060"/><rect x="117.3" y="-0.7" width="2.4" height="6.8" fill="#8a8a88"/><rect x="120.8" y="3.2" width="3.2" height="2.1" fill="#7a7060"/><rect x="131.0" y="8.5" width="2.7" height="6.7" fill="#4a4a4a"/><rect x="139.9" y="2.7" width="3.0" height="5.0" fill="#5a6050"/><rect x="134.5" y="36.1" width="3.0" height="3.6" fill="#3a3a3a"/><rect x="127.5" y="27.3" width="6.1" height="6.8" fill="#6a6a68"/><rect x="123.2" y="26.6" width="5.6" height="6.2" fill="#4a4a4a"/><rect x="119.4" y="38.3" width="7.1" height="5.0" fill="#5a6050"/><rect x="137.7" y="0.8" width="2.2" height="4.7" fill="#7a7060"/><rect x="141.5" y="2.3" width="4.0" height="6.2" fill="#4a4a4a"/><rect x="136.6" y="15.9" width="5.8" height="6.1" fill="#7a7060"/><rect x="134.4" y="35.7" width="5.1" height="5.3" fill="#5a6050"/><rect x="138.0" y="9.0" width="4.9" height="4.2" fill="#5a6050"/><rect x="124.8" y="16.5" width="3.5" height="6.7" fill="#5a6050"/><rect x="127.4" y="-0.8" width="4.8" height="5.1" fill="#5a6050"/><rect x="127.0" y="8.6" width="4.0" height="4.4" fill="#4a4a4a"/><rect x="123.7" y="-1.6" width="7.3" height="5.5" fill="#8a8a88"/><rect x="131.9" y="29.1" width="2.5" height="5.6" fill="#7a7060"/><rect x="129.5" y="-1.3" width="4.9" height="5.6" fill="#4a4a4a"/><rect x="125.7" y="21.8" width="3.3" height="5.5" fill="#a8a8a4"/><rect x="145.6" y="20.6" width="5.3" height="3.7" fill="#4a4a4a"/><rect x="123.2" y="2.9" width="6.2" height="3.4" fill="#8a8a88"/><rect x="145.6" y="26.3" width="3.9" height="5.7" fill="#8a8a88"/><rect x="139.0" y="38.0" width="3.3" height="4.4" fill="#3a3a3a"/><rect x="150" y="0" width="50" height="39" fill="#8a6a66"/><rect x="187.6" y="10.1" width="5.6" height="6.9" fill="#6a5a58"/><rect x="175.1" y="9.2" width="3.1" height="2.1" fill="#b07070"/><rect x="154.9" y="33.6" width="5.3" height="5.5" fill="#cfc6c0"/><rect x="163.0" y="17.6" width="2.6" height="2.1" fill="#6a5a58"/><rect x="195.0" y="17.6" width="3.1" height="2.3" fill="#9a8a84"/><rect x="177.6" y="26.1" width="2.4" height="4.5" fill="#c08684"/><rect x="163.9" y="38.8" width="2.9" height="4.8" fill="#b07070"/><rect x="176.8" y="23.4" width="5.3" height="4.1" fill="#9a8a84"/><rect x="169.7" y="33.3" width="5.1" height="4.3" fill="#cfc6c0"/><rect x="178.4" y="28.3" width="3.8" height="5.1" fill="#9a8a84"/><rect x="181.2" y="4.4" width="3.2" height="3.1" fill="#c08684"/><rect x="168.1" y="26.3" width="5.3" height="2.8" fill="#cfc6c0"/><rect x="183.1" y="26.8" width="3.7" height="3.2" fill="#cfc6c0"/><rect x="162.1" y="30.4" width="2.4" height="3.2" fill="#4a4040"/><rect x="168.6" y="20.3" width="6.0" height="6.7" fill="#8a6a60"/><rect x="156.0" y="0.4" width="2.9" height="3.3" fill="#9a8a84"/><rect x="176.4" y="9.8" width="3.8" height="5.7" fill="#b07070"/><rect x="168.0" y="9.2" width="4.8" height="3.5" fill="#4a4040"/><rect x="150.9" y="15.7" width="5.0" height="2.4" fill="#6a5a58"/><rect x="159.6" y="25.6" width="5.6" height="2.1" fill="#9a8a84"/><rect x="195.5" y="25.6" width="5.5" height="6.8" fill="#6a5a58"/><rect x="157.2" y="19.3" width="5.5" height="5.8" fill="#cfc6c0"/><rect x="175.0" y="24.0" width="7.5" height="2.9" fill="#cfc6c0"/><rect x="167.0" y="11.2" width="7.8" height="4.4" fill="#b07070"/><rect x="180.1" y="9.8" width="7.1" height="3.6" fill="#cfc6c0"/><rect x="169.5" y="10.9" width="6.9" height="4.8" fill="#6a5a58"/><rect x="191.6" y="31.8" width="2.7" height="5.9" fill="#b07070"/><rect x="168.0" y="5.7" width="5.9" height="4.7" fill="#6a5a58"/><rect x="169.5" y="0.1" width="5.7" height="4.5" fill="#6a5a58"/><rect x="169.5" y="26.6" width="5.3" height="6.6" fill="#b07070"/><rect x="188.8" y="27.1" width="2.2" height="5.2" fill="#6a5a58"/><rect x="153.4" y="38.7" width="5.3" height="4.8" fill="#b07070"/><rect x="188.3" y="18.4" width="4.8" height="2.6" fill="#8a6a60"/><rect x="169.0" y="17.8" width="3.8" height="5.5" fill="#cfc6c0"/><rect x="167.6" y="35.8" width="3.5" height="4.8" fill="#4a4040"/><rect x="152.2" y="29.7" width="6.5" height="2.7" fill="#9a8a84"/><rect x="173.1" y="31.6" width="4.5" height="6.7" fill="#6a5a58"/><rect x="175.5" y="25.1" width="6.4" height="6.2" fill="#9a8a84"/><rect x="165.9" y="20.6" width="2.9" height="4.7" fill="#4a4040"/><rect x="190.5" y="38.2" width="4.3" height="6.7" fill="#c08684"/><rect x="185.1" y="-0.2" width="5.4" height="3.2" fill="#8a6a60"/><rect x="167.0" y="38.5" width="4.8" height="6.6" fill="#9a8a84"/><rect x="171.3" y="-0.5" width="6.9" height="6.9" fill="#4a4040"/><rect x="153.4" y="32.6" width="7.8" height="3.7" fill="#b07070"/><rect x="182.8" y="14.8" width="5.2" height="4.3" fill="#8a6a60"/><rect x="183.5" y="8.9" width="7.8" height="2.4" fill="#4a4040"/><rect x="188.0" y="32.9" width="6.2" height="5.2" fill="#9a8a84"/><rect x="178.3" y="34.4" width="5.2" height="6.8" fill="#cfc6c0"/><rect x="152.1" y="23.9" width="7.2" height="2.2" fill="#6a5a58"/><rect x="168.1" y="2.0" width="8.0" height="5.7" fill="#8a6a60"/><rect x="156.6" y="10.3" width="6.2" height="2.5" fill="#b07070"/><rect x="163.6" y="13.4" width="2.3" height="6.0" fill="#c08684"/><rect x="182.1" y="5.4" width="3.5" height="4.1" fill="#c08684"/><rect x="179.7" y="7.9" width="2.5" height="6.4" fill="#4a4040"/><rect x="161.5" y="8.5" width="2.9" height="4.3" fill="#b07070"/><rect x="161.8" y="20.4" width="7.4" height="4.3" fill="#b07070"/><rect x="176.8" y="24.2" width="4.7" height="3.7" fill="#cfc6c0"/><rect x="162.9" y="39.0" width="6.1" height="4.3" fill="#9a8a84"/><rect x="175.9" y="21.6" width="4.9" height="3.2" fill="#8a6a60"/><rect x="180.7" y="9.3" width="3.8" height="6.9" fill="#4a4040"/><rect x="192.6" y="35.3" width="7.2" height="5.9" fill="#8a6a60"/><rect x="162.5" y="30.8" width="5.0" height="6.5" fill="#4a4040"/><rect x="157.6" y="8.3" width="6.8" height="3.1" fill="#9a8a84"/><rect x="187.3" y="23.8" width="6.3" height="5.3" fill="#8a6a60"/><rect x="169.3" y="21.8" width="5.9" height="3.5" fill="#8a6a60"/><rect x="165.1" y="15.0" width="2.8" height="6.5" fill="#c08684"/><rect x="196.8" y="19.8" width="2.8" height="4.7" fill="#6a5a58"/><rect x="186.1" y="17.8" width="7.0" height="3.3" fill="#9a8a84"/><rect x="187.8" y="17.2" width="3.8" height="6.4" fill="#b07070"/><rect x="191.3" y="27.7" width="2.8" height="6.8" fill="#cfc6c0"/><rect x="165.2" y="30.4" width="7.8" height="6.0" fill="#b07070"/><rect x="166.8" y="28.7" width="3.6" height="2.6" fill="#6a5a58"/><rect x="192.7" y="2.4" width="5.5" height="6.1" fill="#c08684"/><rect x="193.5" y="11.4" width="4.8" height="5.1" fill="#4a4040"/><rect x="189.1" y="35.3" width="3.3" height="2.3" fill="#6a5a58"/><rect x="151.1" y="-0.5" width="5.9" height="2.6" fill="#cfc6c0"/><rect x="175.5" y="13.9" width="2.7" height="3.2" fill="#6a5a58"/><rect x="192.5" y="15.2" width="6.0" height="5.7" fill="#8a6a60"/><rect x="178.9" y="32.2" width="6.4" height="6.4" fill="#4a4040"/><rect x="150.6" y="13.2" width="4.4" height="6.8" fill="#cfc6c0"/><rect x="166.2" y="38.2" width="4.7" height="3.2" fill="#6a5a58"/><rect x="165.8" y="14.3" width="5.3" height="6.9" fill="#c08684"/><rect x="185.4" y="1.8" width="7.8" height="6.7" fill="#c08684"/><rect x="150.0" y="30.3" width="5.9" height="5.0" fill="#c08684"/><rect x="158.0" y="32.0" width="7.9" height="5.9" fill="#4a4040"/><rect x="191.4" y="11.5" width="3.2" height="3.1" fill="#c08684"/><rect x="161.6" y="38.3" width="6.7" height="5.0" fill="#c08684"/><rect x="154.1" y="33.5" width="5.2" height="6.0" fill="#c08684"/><rect x="160.9" y="11.3" width="2.1" height="5.9" fill="#c08684"/><rect x="169.4" y="2.7" width="3.6" height="2.6" fill="#b07070"/><rect x="173.2" y="2.5" width="4.9" height="5.9" fill="#4a4040"/><rect x="184.4" y="35.3" width="3.3" height="5.1" fill="#8a6a60"/><rect x="194.2" y="0.5" width="5.1" height="4.3" fill="#cfc6c0"/><rect x="153.8" y="27.2" width="7.1" height="4.1" fill="#cfc6c0"/><rect x="179.1" y="0.7" width="2.4" height="2.4" fill="#6a5a58"/><rect x="181.9" y="13.6" width="5.7" height="4.9" fill="#4a4040"/><rect x="177.3" y="2.1" width="5.2" height="4.3" fill="#8a6a60"/><rect x="192.3" y="20.6" width="2.7" height="5.3" fill="#9a8a84"/><rect x="160.1" y="11.9" width="3.3" height="4.3" fill="#cfc6c0"/><rect x="163.9" y="10.8" width="4.4" height="5.6" fill="#6a5a58"/><rect x="193.1" y="0.8" width="4.2" height="2.8" fill="#9a8a84"/><rect x="185.8" y="13.3" width="2.5" height="4.2" fill="#c08684"/><rect x="175.2" y="11.5" width="5.3" height="4.9" fill="#b07070"/><rect x="193.7" y="15.3" width="4.5" height="6.4" fill="#8a6a60"/><rect x="164.5" y="2.2" width="2.3" height="3.4" fill="#4a4040"/><rect x="159.9" y="2.4" width="3.3" height="5.3" fill="#9a8a84"/><rect x="162.0" y="7.3" width="5.3" height="2.6" fill="#cfc6c0"/><rect x="185.8" y="23.2" width="7.1" height="6.9" fill="#8a6a60"/><rect x="179.7" y="26.4" width="5.3" height="5.0" fill="#b07070"/><rect x="164.1" y="11.9" width="3.1" height="5.5" fill="#b07070"/><rect x="200" y="0" width="44" height="39" fill="#8e8068"/><rect x="227.2" y="0.9" width="3.1" height="2.7" fill="#6a6a62"/><rect x="229.0" y="6.8" width="5.8" height="2.2" fill="#5a5048"/><rect x="211.9" y="11.3" width="4.7" height="2.8" fill="#b0a088"/><rect x="205.3" y="28.9" width="5.6" height="6.4" fill="#9a8a70"/><rect x="225.4" y="17.9" width="6.0" height="3.4" fill="#5a5048"/><rect x="220.3" y="12.2" width="4.5" height="3.1" fill="#9a8a70"/><rect x="219.6" y="25.4" width="3.7" height="5.4" fill="#9a8a70"/><rect x="201.3" y="6.4" width="3.3" height="6.9" fill="#a89878"/><rect x="210.4" y="2.9" width="6.6" height="5.8" fill="#5a5048"/><rect x="214.0" y="26.9" width="6.5" height="2.9" fill="#b0a088"/><rect x="213.4" y="14.3" width="5.4" height="5.3" fill="#6a6a62"/><rect x="239.3" y="33.3" width="2.3" height="2.1" fill="#b0a088"/><rect x="225.5" y="9.9" width="4.6" height="4.0" fill="#5a5048"/><rect x="234.2" y="23.3" width="2.1" height="3.6" fill="#6a6a62"/><rect x="231.5" y="8.0" width="7.5" height="2.4" fill="#b0a088"/><rect x="235.2" y="28.6" width="4.4" height="2.4" fill="#a89878"/><rect x="220.4" y="2.7" width="4.0" height="2.8" fill="#b0a088"/><rect x="214.0" y="37.3" width="3.2" height="5.9" fill="#6a6a62"/><rect x="204.7" y="6.1" width="6.9" height="3.2" fill="#b0a088"/><rect x="202.2" y="37.0" width="2.9" height="5.8" fill="#6a6a62"/><rect x="230.2" y="16.4" width="5.0" height="5.8" fill="#b0a088"/><rect x="212.0" y="37.8" width="5.9" height="6.9" fill="#7a6a58"/><rect x="218.1" y="10.4" width="2.9" height="2.3" fill="#7a6a58"/><rect x="202.0" y="16.9" width="5.5" height="3.8" fill="#9a8a70"/><rect x="202.3" y="33.4" width="2.3" height="6.2" fill="#9a8a70"/><rect x="217.7" y="20.7" width="5.7" height="4.5" fill="#6a6a62"/><rect x="230.3" y="24.7" width="7.4" height="4.2" fill="#7a6a58"/><rect x="237.7" y="16.5" width="5.6" height="4.5" fill="#7a6a58"/><rect x="223.6" y="-0.4" width="7.9" height="2.4" fill="#6a6a62"/><rect x="220.6" y="4.5" width="4.6" height="4.2" fill="#7a6a58"/><rect x="228.8" y="25.8" width="7.5" height="3.9" fill="#9a8a70"/><rect x="201.6" y="1.9" width="6.7" height="5.2" fill="#6a6a62"/><rect x="234.5" y="37.5" width="4.3" height="3.3" fill="#b0a088"/><rect x="221.6" y="3.8" width="7.2" height="3.7" fill="#7a6a58"/><rect x="226.9" y="3.3" width="3.9" height="5.3" fill="#6a6a62"/><rect x="213.5" y="30.5" width="7.6" height="3.5" fill="#a89878"/><rect x="228.5" y="26.1" width="6.0" height="6.1" fill="#b0a088"/><rect x="221.1" y="-1.3" width="2.6" height="5.4" fill="#7a6a58"/><rect x="239.7" y="17.9" width="3.1" height="3.1" fill="#a89878"/><rect x="210.2" y="30.3" width="8.0" height="2.8" fill="#b0a088"/><rect x="233.8" y="-0.5" width="6.6" height="6.2" fill="#7a6a58"/><rect x="222.1" y="4.3" width="7.3" height="5.1" fill="#a89878"/><rect x="230.6" y="4.8" width="7.0" height="5.9" fill="#5a5048"/><rect x="230.5" y="37.8" width="2.3" height="3.8" fill="#b0a088"/><rect x="218.0" y="19.9" width="3.7" height="5.7" fill="#7a6a58"/><rect x="233.5" y="6.0" width="7.8" height="5.9" fill="#6a6a62"/><rect x="216.7" y="9.6" width="7.7" height="6.9" fill="#5a5048"/><rect x="205.6" y="6.2" width="5.0" height="4.1" fill="#b0a088"/><rect x="226.7" y="33.8" width="2.8" height="3.3" fill="#b0a088"/><rect x="218.8" y="3.1" width="7.6" height="5.6" fill="#9a8a70"/><rect x="234.7" y="4.0" width="6.6" height="3.4" fill="#5a5048"/><rect x="234.5" y="34.3" width="2.6" height="6.6" fill="#9a8a70"/><rect x="214.5" y="13.8" width="4.5" height="4.0" fill="#9a8a70"/><rect x="237.9" y="32.4" width="4.2" height="2.1" fill="#6a6a62"/><rect x="200.6" y="35.6" width="4.0" height="2.7" fill="#5a5048"/><rect x="227.1" y="16.4" width="6.2" height="2.7" fill="#9a8a70"/><rect x="207.3" y="4.1" width="7.4" height="2.1" fill="#6a6a62"/><rect x="230.3" y="7.7" width="5.7" height="4.1" fill="#9a8a70"/><rect x="233.7" y="16.7" width="2.3" height="4.1" fill="#9a8a70"/><rect x="219.9" y="23.9" width="7.0" height="4.5" fill="#b0a088"/><rect x="217.3" y="23.2" width="3.5" height="2.7" fill="#a89878"/><rect x="226.1" y="19.5" width="5.4" height="2.9" fill="#7a6a58"/><rect x="221.1" y="38.5" width="2.4" height="4.6" fill="#b0a088"/><rect x="200.9" y="13.9" width="2.1" height="6.4" fill="#7a6a58"/><rect x="232.5" y="12.1" width="3.5" height="2.1" fill="#6a6a62"/><rect x="222.3" y="29.0" width="5.9" height="2.5" fill="#a89878"/><rect x="234.6" y="5.2" width="2.3" height="4.7" fill="#6a6a62"/><rect x="225.0" y="31.3" width="4.8" height="5.5" fill="#9a8a70"/><rect x="200.5" y="6.3" width="6.3" height="6.7" fill="#a89878"/><rect x="211.0" y="14.3" width="7.3" height="3.6" fill="#b0a088"/><rect x="225.6" y="9.7" width="4.8" height="2.2" fill="#9a8a70"/><rect x="203.8" y="13.1" width="7.2" height="3.7" fill="#5a5048"/><rect x="214.3" y="37.9" width="6.5" height="6.5" fill="#5a5048"/><rect x="230.8" y="8.9" width="6.2" height="3.8" fill="#9a8a70"/><rect x="222.9" y="31.7" width="6.4" height="2.4" fill="#b0a088"/><rect x="212.9" y="10.1" width="3.8" height="2.5" fill="#5a5048"/><rect x="226.9" y="12.4" width="5.6" height="4.1" fill="#9a8a70"/><rect x="223.4" y="15.8" width="6.4" height="6.6" fill="#6a6a62"/><rect x="201.9" y="24.1" width="7.9" height="6.7" fill="#7a6a58"/><rect x="205.5" y="-0.7" width="5.1" height="5.7" fill="#b0a088"/><rect x="251" y="0" width="88" height="39" fill="#a47470"/><rect x="260.6" y="7.7" width="6.1" height="4.2" fill="#8a6058"/><rect x="252.8" y="4.3" width="4.2" height="6.7" fill="#6e6a6c"/><rect x="312.8" y="21.5" width="7.7" height="3.9" fill="#8a6058"/><rect x="271.4" y="2.7" width="4.4" height="5.2" fill="#a86860"/><rect x="297.7" y="8.7" width="5.0" height="3.9" fill="#5a4848"/><rect x="301.3" y="26.5" width="6.2" height="3.1" fill="#6e6a6c"/><rect x="256.4" y="5.1" width="3.2" height="2.7" fill="#6e6a6c"/><rect x="329.4" y="38.4" width="8.0" height="6.1" fill="#8a6058"/><rect x="274.3" y="10.3" width="6.3" height="4.7" fill="#a86860"/><rect x="303.4" y="30.5" width="6.3" height="6.6" fill="#ddd0c8"/><rect x="262.1" y="30.4" width="2.7" height="3.0" fill="#c07a78"/><rect x="290.1" y="38.3" width="4.2" height="4.9" fill="#a86860"/><rect x="276.1" y="39.0" width="5.7" height="2.4" fill="#6e6a6c"/><rect x="319.9" y="1.0" width="5.2" height="5.8" fill="#8a6058"/><rect x="307.2" y="12.1" width="5.9" height="4.2" fill="#a86860"/><rect x="291.9" y="33.6" width="6.6" height="2.6" fill="#d09090"/><rect x="263.7" y="36.3" width="5.1" height="3.5" fill="#ddd0c8"/><rect x="326.9" y="32.7" width="4.1" height="6.7" fill="#5a4848"/><rect x="273.8" y="23.6" width="3.2" height="6.8" fill="#d09090"/><rect x="330.0" y="4.3" width="5.0" height="2.8" fill="#8a6058"/><rect x="318.4" y="-0.8" width="7.1" height="4.8" fill="#c07a78"/><rect x="271.8" y="6.6" width="7.7" height="5.9" fill="#b89080"/><rect x="324.9" y="20.4" width="5.7" height="2.2" fill="#5a4848"/><rect x="308.3" y="10.2" width="4.9" height="6.0" fill="#d09090"/><rect x="284.9" y="17.0" width="6.1" height="2.8" fill="#8a6058"/><rect x="310.6" y="28.1" width="5.6" height="3.6" fill="#8a6058"/><rect x="280.4" y="21.0" width="7.9" height="2.7" fill="#8a6058"/><rect x="288.9" y="3.8" width="3.5" height="2.6" fill="#c07a78"/><rect x="303.1" y="8.2" width="3.7" height="3.9" fill="#a86860"/><rect x="309.9" y="5.8" width="6.9" height="6.7" fill="#a86860"/><rect x="292.4" y="10.7" width="5.0" height="4.6" fill="#c07a78"/><rect x="290.0" y="7.9" width="2.5" height="4.0" fill="#8a6058"/><rect x="302.4" y="32.6" width="2.3" height="3.4" fill="#6e6a6c"/><rect x="259.3" y="3.5" width="3.7" height="2.0" fill="#5a4848"/><rect x="280.6" y="14.4" width="6.4" height="5.8" fill="#ddd0c8"/><rect x="283.2" y="16.5" width="4.2" height="3.4" fill="#5a4848"/><rect x="300.7" y="3.3" width="7.0" height="5.1" fill="#d09090"/><rect x="279.0" y="36.5" width="4.4" height="6.0" fill="#a86860"/><rect x="293.4" y="-0.1" width="3.2" height="4.5" fill="#a86860"/><rect x="293.5" y="4.1" width="6.3" height="6.0" fill="#a86860"/><rect x="264.0" y="38.6" width="4.0" height="5.1" fill="#5a4848"/><rect x="293.0" y="18.1" width="5.6" height="4.5" fill="#5a4848"/><rect x="278.2" y="2.5" width="4.8" height="2.1" fill="#b89080"/><rect x="311.3" y="26.2" width="5.5" height="6.0" fill="#c07a78"/><rect x="305.3" y="37.9" width="5.6" height="3.3" fill="#ddd0c8"/><rect x="264.3" y="23.8" width="6.3" height="4.9" fill="#b89080"/><rect x="252.8" y="36.9" width="2.9" height="5.4" fill="#d09090"/><rect x="286.4" y="14.9" width="3.1" height="4.2" fill="#ddd0c8"/><rect x="328.7" y="33.8" width="4.5" height="5.9" fill="#c07a78"/><rect x="297.0" y="38.9" width="6.2" height="4.6" fill="#6e6a6c"/><rect x="264.7" y="35.4" width="5.2" height="3.6" fill="#8a6058"/><rect x="323.5" y="25.9" width="5.3" height="5.4" fill="#5a4848"/><rect x="270.8" y="20.9" width="5.7" height="3.0" fill="#ddd0c8"/><rect x="313.5" y="26.9" width="7.6" height="6.9" fill="#6e6a6c"/><rect x="330.4" y="30.6" width="3.9" height="3.7" fill="#5a4848"/><rect x="296.9" y="34.7" width="3.7" height="4.9" fill="#b89080"/><rect x="316.9" y="9.9" width="6.9" height="6.8" fill="#5a4848"/><rect x="326.0" y="24.9" width="7.7" height="2.4" fill="#6e6a6c"/><rect x="273.5" y="21.0" width="3.3" height="6.1" fill="#5a4848"/><rect x="301.2" y="7.9" width="2.8" height="5.1" fill="#ddd0c8"/><rect x="284.8" y="27.4" width="5.8" height="2.3" fill="#d09090"/><rect x="330.9" y="38.1" width="6.1" height="2.7" fill="#a86860"/><rect x="325.2" y="17.6" width="4.4" height="6.7" fill="#ddd0c8"/><rect x="273.8" y="0.4" width="6.5" height="3.4" fill="#d09090"/><rect x="312.1" y="32.9" width="5.9" height="3.2" fill="#c07a78"/><rect x="322.8" y="5.2" width="7.5" height="2.9" fill="#c07a78"/><rect x="290.6" y="36.4" width="8.0" height="4.0" fill="#5a4848"/><rect x="297.0" y="2.4" width="7.3" height="2.0" fill="#8a6058"/><rect x="296.9" y="18.3" width="3.7" height="6.9" fill="#a86860"/><rect x="266.0" y="2.6" width="7.1" height="4.3" fill="#a86860"/><rect x="310.1" y="-1.4" width="6.4" height="5.2" fill="#8a6058"/><rect x="313.0" y="5.2" width="6.7" height="4.8" fill="#b89080"/><rect x="257.2" y="25.4" width="7.0" height="4.6" fill="#a86860"/><rect x="326.8" y="-1.7" width="7.9" height="4.4" fill="#b89080"/><rect x="332.6" y="10.4" width="3.4" height="5.8" fill="#c07a78"/><rect x="270.4" y="25.4" width="3.6" height="3.8" fill="#6e6a6c"/><rect x="293.3" y="34.7" width="3.8" height="4.0" fill="#5a4848"/><rect x="328.9" y="13.1" width="6.1" height="5.2" fill="#ddd0c8"/><rect x="263.3" y="28.7" width="3.3" height="2.7" fill="#8a6058"/><rect x="290.3" y="20.0" width="4.5" height="4.7" fill="#ddd0c8"/><rect x="299.7" y="30.3" width="6.6" height="5.4" fill="#6e6a6c"/><rect x="327.8" y="2.6" width="5.2" height="3.8" fill="#ddd0c8"/><rect x="277.7" y="19.3" width="5.4" height="2.7" fill="#d09090"/><rect x="291.0" y="34.9" width="6.1" height="5.6" fill="#6e6a6c"/><rect x="292.7" y="16.7" width="6.9" height="4.3" fill="#c07a78"/><rect x="276.1" y="-1.1" width="5.4" height="5.4" fill="#5a4848"/><rect x="298.1" y="-0.1" width="6.9" height="5.7" fill="#8a6058"/><rect x="255.0" y="34.7" width="6.2" height="4.7" fill="#6e6a6c"/><rect x="317.5" y="29.4" width="2.2" height="4.0" fill="#b89080"/><rect x="288.5" y="35.6" width="4.2" height="6.5" fill="#b89080"/><rect x="306.7" y="20.1" width="4.3" height="5.4" fill="#8a6058"/><rect x="284.3" y="3.2" width="2.7" height="7.0" fill="#ddd0c8"/><rect x="331.2" y="17.0" width="7.0" height="5.8" fill="#b89080"/><rect x="271.0" y="12.2" width="5.2" height="6.1" fill="#5a4848"/><rect x="316.5" y="-0.7" width="3.1" height="6.4" fill="#b89080"/><rect x="325.0" y="7.9" width="5.7" height="6.7" fill="#d09090"/><rect x="302.2" y="26.8" width="2.6" height="2.2" fill="#c07a78"/><rect x="288.0" y="20.1" width="3.5" height="2.2" fill="#c07a78"/><rect x="270.4" y="35.6" width="2.8" height="7.0" fill="#8a6058"/><rect x="319.2" y="7.7" width="5.5" height="5.9" fill="#a86860"/><rect x="283.9" y="9.3" width="7.9" height="4.6" fill="#a86860"/><rect x="291.8" y="37.9" width="5.8" height="4.1" fill="#b89080"/><rect x="284.7" y="4.1" width="6.7" height="3.6" fill="#b89080"/><rect x="270.9" y="7.2" width="3.1" height="4.7" fill="#a86860"/><rect x="296.8" y="37.7" width="6.8" height="6.6" fill="#a86860"/><rect x="278.3" y="1.2" width="4.3" height="3.3" fill="#6e6a6c"/><rect x="310.1" y="5.8" width="7.1" height="2.5" fill="#5a4848"/><rect x="253.4" y="1.0" width="4.3" height="5.0" fill="#ddd0c8"/><rect x="278.3" y="37.2" width="4.9" height="6.3" fill="#c07a78"/><rect x="314.3" y="28.6" width="3.3" height="3.0" fill="#6e6a6c"/><rect x="308.1" y="14.3" width="7.5" height="5.5" fill="#ddd0c8"/><rect x="282.2" y="19.9" width="5.3" height="5.9" fill="#8a6058"/><rect x="326.1" y="17.1" width="3.9" height="3.8" fill="#6e6a6c"/><rect x="266.9" y="10.8" width="6.6" height="3.6" fill="#c07a78"/><rect x="262.3" y="8.7" width="5.4" height="3.1" fill="#b89080"/><rect x="269.8" y="21.4" width="3.8" height="3.0" fill="#ddd0c8"/><rect x="308.2" y="8.6" width="5.0" height="5.3" fill="#6e6a6c"/><rect x="290.3" y="4.9" width="7.8" height="5.2" fill="#8a6058"/><rect x="292.5" y="35.6" width="3.0" height="5.6" fill="#c07a78"/><rect x="256.3" y="31.5" width="5.1" height="6.2" fill="#c07a78"/><rect x="320.3" y="7.5" width="6.6" height="4.1" fill="#a86860"/><rect x="282.8" y="23.3" width="2.1" height="4.5" fill="#6e6a6c"/><rect x="294.7" y="14.9" width="6.0" height="2.1" fill="#c07a78"/><rect x="332.9" y="-1.3" width="5.2" height="3.4" fill="#b89080"/><rect x="258.9" y="1.9" width="6.8" height="6.5" fill="#a86860"/><rect x="271.8" y="12.5" width="3.4" height="5.1" fill="#b89080"/><rect x="290.2" y="8.0" width="2.5" height="6.8" fill="#ddd0c8"/><rect x="256.9" y="38.7" width="3.8" height="6.1" fill="#c07a78"/><rect x="298.3" y="0.3" width="2.6" height="3.9" fill="#c07a78"/><rect x="320.8" y="24.4" width="6.2" height="2.4" fill="#8a6058"/><rect x="258.1" y="19.7" width="5.4" height="6.3" fill="#c07a78"/><rect x="310.0" y="21.2" width="3.4" height="6.5" fill="#5a4848"/><rect x="331.2" y="34.9" width="2.3" height="2.4" fill="#c07a78"/><rect x="251.4" y="6.5" width="3.1" height="6.3" fill="#a86860"/><rect x="283.3" y="1.2" width="6.5" height="5.6" fill="#a86860"/><rect x="321.9" y="25.8" width="5.4" height="4.8" fill="#8a6058"/><rect x="317.7" y="26.3" width="4.3" height="5.7" fill="#d09090"/><rect x="254.6" y="15.9" width="5.0" height="6.9" fill="#d09090"/><rect x="332.1" y="14.3" width="4.0" height="5.8" fill="#8a6058"/><rect x="337.2" y="18.1" width="2.2" height="3.4" fill="#8a6058"/><rect x="265.7" y="22.0" width="5.3" height="3.9" fill="#b89080"/><rect x="319.8" y="27.2" width="2.5" height="5.1" fill="#d09090"/><rect x="317.7" y="4.3" width="3.6" height="3.9" fill="#b89080"/><rect x="250.4" y="10.6" width="3.9" height="2.5" fill="#8a6058"/><rect x="257.3" y="15.7" width="6.6" height="2.5" fill="#b89080"/><rect x="298.4" y="22.5" width="2.6" height="2.4" fill="#8a6058"/><rect x="284.3" y="29.9" width="7.2" height="2.1" fill="#ddd0c8"/><rect x="282.2" y="3.7" width="5.4" height="2.8" fill="#5a4848"/><rect x="264.4" y="9.3" width="3.6" height="2.7" fill="#5a4848"/><rect x="271.4" y="8.1" width="4.9" height="2.4" fill="#6e6a6c"/><rect x="259.0" y="10.5" width="5.6" height="3.0" fill="#b89080"/><rect x="319.2" y="11.5" width="4.0" height="5.1" fill="#8a6058"/><rect x="305.6" y="22.4" width="4.6" height="6.1" fill="#5a4848"/><rect x="267.3" y="10.9" width="3.9" height="6.7" fill="#b89080"/><rect x="307.1" y="18.1" width="7.8" height="3.5" fill="#ddd0c8"/><rect x="317.6" y="13.0" width="4.0" height="3.4" fill="#ddd0c8"/><rect x="307.6" y="20.6" width="5.6" height="4.7" fill="#6e6a6c"/><rect x="315.7" y="32.1" width="7.7" height="3.0" fill="#d09090"/><rect x="284.0" y="18.5" width="6.9" height="6.0" fill="#5a4848"/><rect x="311.9" y="30.4" width="3.5" height="5.3" fill="#d09090"/><rect x="299.7" y="19.9" width="4.7" height="5.0" fill="#b89080"/><rect x="280.5" y="34.7" width="5.3" height="6.0" fill="#d09090"/><rect x="308.1" y="4.8" width="2.7" height="3.2" fill="#c07a78"/><rect x="304.7" y="37.6" width="5.4" height="5.2" fill="#8a6058"/><rect x="250.9" y="8.6" width="7.8" height="4.2" fill="#ddd0c8"/><rect x="315.9" y="22.1" width="4.7" height="4.0" fill="#a86860"/><rect x="259.0" y="15.1" width="4.1" height="2.1" fill="#d09090"/><rect x="262.4" y="10.8" width="2.7" height="6.7" fill="#6e6a6c"/><rect x="279.0" y="2.0" width="6.7" height="4.6" fill="#6e6a6c"/><rect x="319.7" y="2.7" width="3.9" height="3.5" fill="#8a6058"/><rect x="263.8" y="38.3" width="5.9" height="5.4" fill="#ddd0c8"/><rect x="278.1" y="15.5" width="5.1" height="4.8" fill="#6e6a6c"/><rect x="266.0" y="24.3" width="3.4" height="4.0" fill="#b89080"/><rect x="325.6" y="16.4" width="4.4" height="5.7" fill="#b89080"/><rect x="267.6" y="28.8" width="4.3" height="5.5" fill="#d09090"/><rect x="295.4" y="13.0" width="5.5" height="6.0" fill="#ddd0c8"/><rect x="323.5" y="19.6" width="4.7" height="3.3" fill="#8a6058"/><rect x="299.6" y="12.3" width="5.6" height="5.1" fill="#6e6a6c"/><rect x="309.5" y="10.2" width="5.7" height="6.1" fill="#d09090"/><rect x="270.0" y="2.8" width="6.0" height="3.6" fill="#8a6058"/><rect x="285.1" y="3.7" width="6.2" height="4.6" fill="#b89080"/><rect x="295.9" y="35.7" width="4.5" height="4.4" fill="#a86860"/><rect x="261.9" y="10.9" width="5.3" height="4.4" fill="#6e6a6c"/><rect x="330.2" y="17.9" width="5.7" height="6.3" fill="#ddd0c8"/><rect x="292.0" y="18.3" width="6.9" height="6.8" fill="#6e6a6c"/><rect x="291.8" y="1.4" width="4.5" height="6.2" fill="#c07a78"/><rect x="252.7" y="7.2" width="6.8" height="3.1" fill="#5a4848"/><rect x="314.6" y="29.4" width="3.0" height="4.3" fill="#d09090"/><rect x="295.9" y="38.6" width="5.4" height="3.3" fill="#c07a78"/><rect x="268.2" y="15.4" width="6.6" height="4.2" fill="#ddd0c8"/><rect x="288.8" y="12.3" width="3.8" height="7.0" fill="#d09090"/><rect x="316.2" y="7.7" width="4.6" height="7.0" fill="#8a6058"/><rect x="285.5" y="23.3" width="7.2" height="5.1" fill="#ddd0c8"/><rect x="297.4" y="19.8" width="6.9" height="6.0" fill="#a86860"/><rect x="274.9" y="9.0" width="3.9" height="5.5" fill="#d09090"/><rect x="285.9" y="0.4" width="2.8" height="5.8" fill="#5a4848"/><rect x="321.7" y="8.2" width="7.2" height="2.6" fill="#8a6058"/><rect x="306.1" y="18.1" width="7.0" height="5.8" fill="#5a4848"/><rect x="256.4" y="30.6" width="5.8" height="3.9" fill="#d09090"/><rect x="309.5" y="34.0" width="4.4" height="5.7" fill="#6e6a6c"/><rect x="110" y="0" width="8" height="39" fill="#3a3a3e" opacity="0.8"/><rect x="243.5" y="0" width="8" height="39" fill="#34343c"/><rect x="300" y="3" width="3" height="36" fill="#3a3236" opacity="0.6"/><rect x="332" y="0" width="5" height="39" fill="#4a4048" opacity="0.6"/></g><path d="M206.5 39 L202.5 8 L247.5 3 L247.5 0" fill="none" stroke="#e2c418" stroke-width="1.4"/><path d="M337.2 0 L338 22" fill="none" stroke="#f2d820" stroke-width="1.6"/><path d="M198.2 37.5 Q194 32 194 29.5 A4.2 4.2 0 0 1 202.4 29.5 Q202.4 32 198.2 37.5Z" fill="#d8b020"/><circle cx="198.2" cy="29.6" r="1.4" fill="#f0e0a0"/><circle cx="289" cy="37.5" r="4" fill="#178a7a"/><circle cx="289" cy="37.5" r="1.5" fill="#e8f4f0"/></svg><div class="ab" style="left:9px;top:11.5px;font-size:13.4px;color:#f4f4f4;white-space:pre;text-shadow:0 0 2px rgba(0,0,0,0.5)">Kleos 2022   //  Placeta Divina Pastora 2</div></div>
<div class="ab hdr" style="top:117.00px;height:27.80px;background:#4d6d95;"><span style="position:absolute;left:3.3px;top:6.30px">entrevista</span></div><svg class="ab" style="left:315.9px;top:121.70px" width="19" height="19" viewBox="0 0 19 19"><circle cx="9.5" cy="9.5" r="7.2" fill="none" stroke="rgba(232,232,232,0.88)" stroke-width="1.45"/><path d="M8.1 6 L12.9 9.5 L8.1 13Z" fill="rgba(232,232,232,0.88)"/></svg><div class="ab" style="left:0;top:144.80px;width:339px;height:194.10px;background:#5a95d7"></div><svg class="ab" style="left:3px;top:149.1px" width="57" height="55.7"><use href="#t-garden" width="57" height="55.7"/></svg><svg class="ab" style="left:11.4px;top:157.2px" width="40" height="40" viewBox="0 0 40 40"><circle cx="20" cy="20" r="14.5" fill="none" stroke="#5a95d7" stroke-width="3.7"/><path d="M16.50 13.00 L26.10 20 L16.50 27.00Z" fill="#5a95d7"/></svg><div class="ab it" style="left:66px;top:147.4px">pelusa (el gato)</div><div class="ab it" style="left:280px;width:54.5px;text-align:right;top:147.4px">33.97s</div><svg class="ab" style="left:3px;top:213.8px" width="57" height="55.7"><use href="#t-garden" width="57" height="55.7"/></svg><svg class="ab" style="left:11.4px;top:221.8px" width="40" height="40" viewBox="0 0 40 40"><circle cx="20" cy="20" r="14.5" fill="none" stroke="#5a95d7" stroke-width="3.7"/><path d="M16.50 13.00 L26.10 20 L16.50 27.00Z" fill="#5a95d7"/></svg><div class="ab it" style="left:66px;top:212.1px">cactus peligroso</div><div class="ab it" style="left:280px;width:54.5px;text-align:right;top:212.1px">20.84s</div><svg class="ab" style="left:3px;top:278.5px" width="57" height="55.7"><use href="#t-garden" width="57" height="55.7"/></svg><svg class="ab" style="left:11.4px;top:286.6px" width="40" height="40" viewBox="0 0 40 40"><circle cx="20" cy="20" r="14.5" fill="none" stroke="#5a95d7" stroke-width="3.7"/><path d="M16.50 13.00 L26.10 20 L16.50 27.00Z" fill="#5a95d7"/></svg><div class="ab it" style="left:66px;top:276.8px">planta pinchosa</div><div class="ab it" style="left:280px;width:54.5px;text-align:right;top:276.8px">8.08s</div><div class="ab hdr" style="top:338.90px;height:27.90px;background:#47807a;"><span style="position:absolute;left:3.3px;top:6.35px">Pista-2</span></div><div class="ab msg" style="top:366.80px;height:28.25px;background:#4bbfb3"><span style="position:absolute;left:5.8px;top:7px">Pulsa sobre el nombre de la pista para añadir sonidos.</span></div><div class="ab hdr" style="top:395.05px;height:27.55px;background:#667a41;"><span style="position:absolute;left:3.3px;top:6.18px">Pista-3</span></div><svg class="ab" style="left:315.9px;top:399.63px" width="19" height="19" viewBox="0 0 19 19"><circle cx="9.5" cy="9.5" r="7.2" fill="none" stroke="rgba(232,232,232,0.88)" stroke-width="1.45"/><path d="M8.1 6 L12.9 9.5 L8.1 13Z" fill="rgba(232,232,232,0.88)"/></svg><div class="ab" style="left:0;top:422.60px;width:339px;height:65.50px;background:#8bb947"></div><svg class="ab" style="left:3px;top:426.9px" width="57" height="55.7"><use href="#t-karma" width="57" height="55.7"/></svg><svg class="ab" style="left:11.4px;top:435.0px" width="40" height="40" viewBox="0 0 40 40"><circle cx="20" cy="20" r="14.5" fill="none" stroke="#8bb947" stroke-width="3.7"/><path d="M16.50 13.00 L26.10 20 L16.50 27.00Z" fill="#8bb947"/></svg><div class="ab it" style="left:66px;top:425.2px">La base fachera facherita</div><div class="ab it" style="left:280px;width:54.5px;text-align:right;top:425.2px">8.33s</div><div class="ab hdr" style="top:488.10px;height:27.00px;background:#8a6a3e;box-shadow: inset 0 0 0 1px #e9dfd2;"><span style="position:absolute;left:3.3px;top:5.90px">Pista-4</span></div><svg class="ab" style="left:315.9px;top:492.40px" width="19" height="19" viewBox="0 0 19 19"><circle cx="9.5" cy="9.5" r="7.2" fill="none" stroke="rgba(232,232,232,0.88)" stroke-width="1.45"/><path d="M8.1 6 L12.9 9.5 L8.1 13Z" fill="rgba(232,232,232,0.88)"/></svg><div class="ab" style="left:0;top:515.10px;width:339px;height:129.90px;background:#d4923f"></div><svg class="ab" style="left:3px;top:519.4px" width="57" height="55.7"><use href="#t-dark" width="57" height="55.7"/></svg><svg class="ab" style="left:11.4px;top:527.5px" width="40" height="40" viewBox="0 0 40 40"><circle cx="20" cy="20" r="14.5" fill="none" stroke="#d4923f" stroke-width="3.7"/><path d="M16.50 13.00 L26.10 20 L16.50 27.00Z" fill="#d4923f"/></svg><div class="ab it" style="left:66px;top:517.7px"><span style="font-size:11.35px">R.AMAYA Y EL BOBOTE CHICO (128 kbps)....</span></div><div class="ab it" style="left:280px;width:54.5px;text-align:right;top:517.7px">2.28s</div><svg class="ab" style="left:3px;top:584.3px" width="57" height="55.7"><use href="#t-ban" width="57" height="55.7"/></svg><svg class="ab" style="left:11.4px;top:592.4px" width="40" height="40" viewBox="0 0 40 40"><circle cx="20" cy="20" r="14.5" fill="none" stroke="#d4923f" stroke-width="3.7"/><path d="M16.50 13.00 L26.10 20 L16.50 27.00Z" fill="#d4923f"/></svg><div class="ab it" style="left:66px;top:582.6px">.</div><div class="ab it" style="left:280px;width:54.5px;text-align:right;top:582.6px">0.37s</div><div class="ab hdr" style="top:645.00px;height:26.80px;background:#8f5a61;"><span style="position:absolute;left:3.3px;top:5.80px">Pista-5</span></div><svg class="ab" style="left:315.9px;top:649.20px" width="19" height="19" viewBox="0 0 19 19"><circle cx="9.5" cy="9.5" r="7.2" fill="none" stroke="rgba(232,232,232,0.88)" stroke-width="1.45"/><path d="M8.1 6 L12.9 9.5 L8.1 13Z" fill="rgba(232,232,232,0.88)"/></svg><div class="ab" style="left:0;top:671.80px;width:339px;height:65.30px;background:#e6737b"></div><svg class="ab" style="left:3px;top:676.1px" width="57" height="55.7"><use href="#t-witch" width="57" height="55.7"/></svg><svg class="ab" style="left:11.4px;top:684.1px" width="40" height="40" viewBox="0 0 40 40"><circle cx="20" cy="20" r="14.5" fill="none" stroke="#e6737b" stroke-width="3.7"/><path d="M16.50 13.00 L26.10 20 L16.50 27.00Z" fill="#e6737b"/></svg><div class="ab it" style="left:66px;top:674.4px">El titanic</div><div class="ab it" style="left:280px;width:54.5px;text-align:right;top:674.4px">11.49s</div><div class="ab hdr" style="top:737.10px;height:26.70px;background:#82637a;"><span style="position:absolute;left:3.3px;top:5.75px">Pista-6</span></div><svg class="ab" style="left:315.9px;top:741.25px" width="19" height="19" viewBox="0 0 19 19"><circle cx="9.5" cy="9.5" r="7.2" fill="none" stroke="rgba(232,232,232,0.88)" stroke-width="1.45"/><path d="M8.1 6 L12.9 9.5 L8.1 13Z" fill="rgba(232,232,232,0.88)"/></svg><div class="ab" style="left:0;top:763.80px;width:339px;height:65.30px;background:#c288ab"></div><svg class="ab" style="left:3px;top:768.1px" width="57" height="55.7"><use href="#t-witch" width="57" height="55.7"/></svg><svg class="ab" style="left:11.4px;top:776.1px" width="40" height="40" viewBox="0 0 40 40"><circle cx="20" cy="20" r="14.5" fill="none" stroke="#c288ab" stroke-width="3.7"/><path d="M16.50 13.00 L26.10 20 L16.50 27.00Z" fill="#c288ab"/></svg><div class="ab it" style="left:66px;top:766.4px">El titanic</div><div class="ab it" style="left:280px;width:54.5px;text-align:right;top:766.4px">11.49s</div><div class="ab hdr" style="top:829.10px;height:27.70px;background:#786890;"><span style="position:absolute;left:3.3px;top:6.25px">Pista-7</span></div><svg class="ab" style="left:315.9px;top:833.75px" width="19" height="19" viewBox="0 0 19 19"><circle cx="9.5" cy="9.5" r="7.2" fill="none" stroke="rgba(232,232,232,0.88)" stroke-width="1.45"/><path d="M8.1 6 L12.9 9.5 L8.1 13Z" fill="rgba(232,232,232,0.88)"/></svg><div class="ab" style="left:0;top:856.80px;width:339px;height:64.30px;background:#a887d0"></div><svg class="ab" style="left:3px;top:861.1px" width="57" height="55.7"><use href="#t-flame" width="57" height="55.7"/></svg><svg class="ab" style="left:11.4px;top:869.1px" width="40" height="40" viewBox="0 0 40 40"><circle cx="20" cy="20" r="14.5" fill="none" stroke="#a887d0" stroke-width="3.7"/><path d="M16.50 13.00 L26.10 20 L16.50 27.00Z" fill="#a887d0"/></svg><div class="ab it" style="left:66px;top:859.4px">La base fachera facherita</div><div class="ab it" style="left:280px;width:54.5px;text-align:right;top:859.4px">8.33s</div><div class="ab hdr" style="top:921.10px;height:27.70px;background:#616385;"><span style="position:absolute;left:3.3px;top:6.25px">Pista-8</span></div><svg class="ab" style="left:315.9px;top:925.75px" width="19" height="19" viewBox="0 0 19 19"><circle cx="9.5" cy="9.5" r="7.2" fill="none" stroke="rgba(232,232,232,0.88)" stroke-width="1.45"/><path d="M8.1 6 L12.9 9.5 L8.1 13Z" fill="rgba(232,232,232,0.88)"/></svg><div class="ab" style="left:0;top:948.80px;width:339px;height:65.20px;background:#7c7bc9"></div><svg class="ab" style="left:3px;top:953.1px" width="57" height="55.7"><use href="#t-red" width="57" height="55.7"/></svg><svg class="ab" style="left:11.4px;top:961.1px" width="40" height="40" viewBox="0 0 40 40"><circle cx="20" cy="20" r="14.5" fill="none" stroke="#7c7bc9" stroke-width="3.7"/><path d="M16.50 13.00 L26.10 20 L16.50 27.00Z" fill="#7c7bc9"/></svg><div class="ab it" style="left:66px;top:951.4px">Taconeo de Sara Baras (128 kbps).mp3</div><div class="ab it" style="left:280px;width:54.5px;text-align:right;top:951.4px">16.36s</div><svg class="ab" style="left:0;top:0" width="339" height="1015" viewBox="0 0 339 1015"><g fill="#efefef"><path d="M66.0 175.3L66.0 174.5L67.0 174.1L68.0 172.1L69.0 169.6L70.0 167.8L71.0 166.1L72.0 167.8L73.0 169.6L74.0 171.7L75.0 173.2L76.0 173.1L77.0 172.8L78.0 172.8L79.0 172.6L80.0 172.8L81.0 173.0L82.0 173.2L83.0 173.4L84.0 173.1L85.0 172.7L86.0 172.3L87.0 172.2L88.0 172.0L89.0 172.2L90.0 172.4L91.0 172.7L92.0 172.7L93.0 172.8L94.0 172.9L95.0 172.9L96.0 173.0L97.0 172.9L98.0 172.9L99.0 173.0L100.0 173.2L101.0 173.3L102.0 173.4L103.0 173.2L104.0 173.1L105.0 173.0L106.0 173.0L107.0 172.9L108.0 173.0L109.0 173.1L110.0 173.1L111.0 173.0L112.0 172.9L113.0 172.8L114.0 172.9L115.0 172.6L116.0 172.5L117.0 172.2L118.0 172.0L119.0 171.7L120.0 172.0L121.0 172.3L122.0 172.7L123.0 172.9L124.0 173.0L125.0 172.9L126.0 173.1L127.0 173.3L128.0 173.6L129.0 173.4L130.0 173.1L131.0 172.7L132.0 172.4L133.0 172.0L134.0 171.9L135.0 172.2L136.0 172.6L137.0 172.9L138.0 172.8L139.0 172.4L140.0 172.2L141.0 172.1L142.0 172.3L143.0 172.4L144.0 172.0L145.0 170.9L146.0 170.0L147.0 169.2L148.0 168.5L149.0 167.8L150.0 167.0L151.0 167.2L152.0 167.9L153.0 168.7L154.0 169.7L155.0 170.7L156.0 171.7L157.0 172.1L158.0 171.7L159.0 171.8L160.0 172.1L161.0 172.5L162.0 172.9L163.0 173.2L164.0 173.5L165.0 173.4L166.0 173.0L167.0 172.7L168.0 172.5L169.0 172.6L170.0 172.8L171.0 173.0L172.0 172.7L173.0 172.3L174.0 172.2L175.0 172.1L176.0 172.2L177.0 172.3L178.0 172.6L179.0 172.8L180.0 173.1L181.0 172.7L182.0 172.3L183.0 172.1L184.0 171.9L185.0 171.8L186.0 171.9L187.0 172.2L188.0 172.8L189.0 173.3L190.0 173.1L191.0 172.8L192.0 172.5L193.0 172.7L194.0 172.9L195.0 172.9L196.0 172.7L197.0 173.0L198.0 173.1L199.0 173.5L200.0 173.4L201.0 173.3L202.0 173.1L203.0 173.1L204.0 173.4L205.0 173.5L206.0 173.6L207.0 173.5L208.0 173.4L209.0 173.2L210.0 173.1L211.0 173.0L212.0 173.1L213.0 173.0L214.0 173.1L215.0 173.3L216.0 173.5L217.0 173.5L218.0 173.2L219.0 173.1L220.0 173.1L221.0 173.2L222.0 173.2L223.0 173.2L224.0 173.3L225.0 173.4L226.0 173.6L227.0 173.8L228.0 173.8L229.0 173.6L230.0 173.4L231.0 173.2L232.0 173.2L233.0 173.2L234.0 173.1L235.0 173.0L236.0 173.1L237.0 173.2L238.0 173.2L239.0 173.2L240.0 173.2L241.0 173.1L242.0 172.9L243.0 172.9L244.0 173.0L245.0 173.3L246.0 173.3L247.0 173.3L248.0 173.1L249.0 173.1L250.0 173.2L251.0 173.4L252.0 173.5L253.0 173.6L254.0 173.7L255.0 173.7L256.0 173.7L257.0 173.5L258.0 173.5L259.0 173.4L260.0 173.1L261.0 172.8L262.0 172.6L263.0 172.5L264.0 172.4L265.0 172.2L266.0 172.0L267.0 172.0L268.0 172.3L269.0 172.4L270.0 172.4L271.0 172.4L272.0 172.5L273.0 172.6L274.0 172.7L275.0 172.5L276.0 172.3L277.0 172.3L278.0 172.2L279.0 172.3L280.0 172.5L281.0 172.8L282.0 173.1L283.0 172.9L284.0 172.5L285.0 172.2L286.0 172.3L287.0 172.6L288.0 172.9L289.0 172.5L290.0 172.4L291.0 172.4L292.0 172.8L293.0 173.0L294.0 173.3L295.0 173.4L296.0 173.6L297.0 173.7L298.0 173.7L299.0 173.6L300.0 173.5L301.0 173.4L302.0 173.1L303.0 172.8L304.0 172.5L305.0 172.0L306.0 171.7L307.0 171.6L308.0 172.0L309.0 172.4L310.0 172.6L311.0 172.6L312.0 172.3L313.0 172.3L314.0 172.7L315.0 173.1L316.0 173.5L317.0 173.6L318.0 173.5L319.0 173.3L320.0 173.0L321.0 173.0L322.0 173.0L323.0 173.0L324.0 172.8L325.0 172.7L326.0 172.6L327.0 172.8L328.0 173.0L329.0 173.3L330.0 173.4L331.0 173.6L332.0 173.5L332.0 177.0L331.0 176.9L330.0 176.9L329.0 177.0L328.0 177.1L327.0 177.2L326.0 177.3L325.0 177.4L324.0 177.6L323.0 177.8L322.0 177.6L321.0 177.4L320.0 177.2L319.0 177.2L318.0 177.2L317.0 177.3L316.0 177.3L315.0 177.4L314.0 177.5L313.0 177.6L312.0 178.0L311.0 178.0L310.0 178.2L309.0 178.3L308.0 178.4L307.0 178.6L306.0 178.4L305.0 178.1L304.0 177.8L303.0 177.7L302.0 177.5L301.0 177.3L300.0 177.4L299.0 177.3L298.0 177.2L297.0 177.2L296.0 177.3L295.0 177.4L294.0 177.5L293.0 177.9L292.0 178.1L291.0 178.2L290.0 177.9L289.0 177.7L288.0 177.5L287.0 177.8L286.0 178.1L285.0 178.2L284.0 177.9L283.0 177.6L282.0 177.5L281.0 177.8L280.0 178.1L279.0 178.5L278.0 178.7L277.0 178.3L276.0 177.9L275.0 177.5L274.0 177.4L273.0 177.7L272.0 178.0L271.0 178.2L270.0 178.4L269.0 178.4L268.0 178.6L267.0 178.6L266.0 178.4L265.0 178.2L264.0 178.1L263.0 178.2L262.0 178.1L261.0 178.0L260.0 177.8L259.0 177.6L258.0 177.5L257.0 177.4L256.0 177.3L255.0 177.1L254.0 177.0L253.0 177.0L252.0 177.2L251.0 177.3L250.0 177.5L249.0 177.6L248.0 177.7L247.0 177.7L246.0 177.7L245.0 177.6L244.0 177.6L243.0 177.5L242.0 177.5L241.0 177.4L240.0 177.4L239.0 177.4L238.0 177.5L237.0 177.5L236.0 177.6L235.0 177.6L234.0 177.5L233.0 177.3L232.0 177.2L231.0 177.1L230.0 177.2L229.0 177.4L228.0 177.5L227.0 177.5L226.0 177.5L225.0 177.5L224.0 177.5L223.0 177.7L222.0 177.7L221.0 177.7L220.0 177.7L219.0 177.7L218.0 177.6L217.0 177.5L216.0 177.4L215.0 177.3L214.0 177.3L213.0 177.2L212.0 177.1L211.0 177.0L210.0 177.0L209.0 177.0L208.0 177.2L207.0 177.3L206.0 177.3L205.0 177.3L204.0 177.4L203.0 177.5L202.0 177.6L201.0 177.6L200.0 177.7L199.0 177.7L198.0 177.9L197.0 178.2L196.0 178.6L195.0 178.4L194.0 178.1L193.0 177.9L192.0 177.9L191.0 177.7L190.0 177.5L189.0 177.3L188.0 177.6L187.0 178.1L186.0 178.5L185.0 178.8L184.0 178.7L183.0 178.3L182.0 178.1L181.0 177.9L180.0 177.7L179.0 178.0L178.0 178.2L177.0 178.4L176.0 178.6L175.0 178.5L174.0 178.2L173.0 177.9L172.0 177.6L171.0 177.4L170.0 177.7L169.0 177.9L168.0 178.1L167.0 177.9L166.0 177.6L165.0 177.3L164.0 177.3L163.0 177.7L162.0 178.0L161.0 178.3L160.0 178.6L159.0 179.0L158.0 179.3L157.0 179.1L156.0 179.5L155.0 180.1L154.0 180.7L153.0 181.1L152.0 181.5L151.0 182.0L150.0 182.4L149.0 181.9L148.0 181.5L147.0 180.9L146.0 180.4L145.0 179.8L144.0 179.2L143.0 178.4L142.0 178.4L141.0 178.4L140.0 178.2L139.0 178.1L138.0 178.0L137.0 178.0L136.0 178.2L135.0 178.4L134.0 178.8L133.0 178.9L132.0 178.8L131.0 178.5L130.0 178.1L129.0 177.8L128.0 177.6L127.0 177.6L126.0 177.5L125.0 177.4L124.0 177.3L123.0 177.7L122.0 178.0L121.0 178.3L120.0 178.6L119.0 179.1L118.0 178.9L117.0 178.6L116.0 178.2L115.0 177.7L114.0 177.1L113.0 177.1L112.0 177.1L111.0 177.2L110.0 177.4L109.0 177.4L108.0 177.3L107.0 177.3L106.0 177.4L105.0 177.5L104.0 177.6L103.0 177.5L102.0 177.4L101.0 177.5L100.0 177.6L99.0 177.7L98.0 177.8L97.0 177.9L96.0 177.8L95.0 177.8L94.0 177.7L93.0 177.7L92.0 177.7L91.0 177.7L90.0 177.9L89.0 178.1L88.0 178.3L87.0 178.2L86.0 178.0L85.0 177.9L84.0 177.7L83.0 177.6L82.0 177.8L81.0 178.0L80.0 178.2L79.0 178.2L78.0 178.1L77.0 177.9L76.0 177.7L75.0 177.5L74.0 178.6L73.0 180.1L72.0 181.4L71.0 182.4L70.0 181.2L69.0 179.9L68.0 178.1L67.0 176.6L66.0 176.1Z"/><path d="M66.0 240.0L66.0 236.5L67.0 235.1L68.0 234.1L69.0 233.9L70.0 233.5L71.0 233.7L72.0 234.0L73.0 234.4L74.0 235.0L75.0 235.9L76.0 236.9L77.0 237.5L78.0 237.4L79.0 237.3L80.0 237.4L81.0 237.4L82.0 237.3L83.0 237.0L84.0 236.9L85.0 236.7L86.0 236.7L87.0 236.7L88.0 236.7L89.0 236.7L90.0 236.7L91.0 236.8L92.0 236.8L93.0 236.8L94.0 236.8L95.0 237.0L96.0 237.1L97.0 237.3L98.0 237.3L99.0 237.2L100.0 237.1L101.0 237.0L102.0 237.1L103.0 237.2L104.0 237.2L105.0 237.2L106.0 237.1L107.0 237.0L108.0 237.1L109.0 237.2L110.0 237.4L111.0 237.4L112.0 237.4L113.0 237.3L114.0 237.4L115.0 237.4L116.0 237.5L117.0 237.4L118.0 237.3L119.0 237.2L120.0 237.1L121.0 237.2L122.0 237.3L123.0 237.4L124.0 237.5L125.0 237.6L126.0 237.6L127.0 237.6L128.0 237.5L129.0 237.2L130.0 237.0L131.0 235.7L132.0 234.9L133.0 234.2L134.0 233.5L135.0 232.6L136.0 233.4L137.0 234.2L138.0 235.1L139.0 236.2L140.0 237.4L141.0 237.4L142.0 237.3L143.0 237.0L144.0 236.8L145.0 236.8L146.0 237.1L147.0 237.3L148.0 237.4L149.0 237.4L150.0 237.6L151.0 237.8L152.0 237.8L153.0 237.8L154.0 237.7L155.0 237.6L156.0 237.5L157.0 237.3L158.0 237.2L159.0 237.1L160.0 237.3L161.0 237.5L162.0 237.7L163.0 237.7L164.0 237.6L165.0 237.4L166.0 237.2L167.0 237.2L168.0 237.2L169.0 237.2L170.0 237.0L171.0 237.2L172.0 237.3L173.0 237.5L174.0 237.6L175.0 237.7L176.0 237.6L177.0 237.6L178.0 237.3L179.0 237.2L180.0 237.1L181.0 236.8L182.0 236.8L183.0 236.9L184.0 237.1L185.0 237.4L186.0 237.5L187.0 237.4L188.0 237.2L189.0 237.0L190.0 237.0L191.0 237.1L192.0 237.3L193.0 237.4L194.0 237.3L195.0 237.5L196.0 237.6L197.0 237.7L198.0 237.6L199.0 237.4L200.0 237.3L201.0 237.3L202.0 237.4L203.0 237.3L204.0 237.1L205.0 236.8L206.0 236.6L207.0 236.8L208.0 236.9L209.0 237.1L210.0 237.4L211.0 237.6L212.0 237.1L213.0 236.4L214.0 235.7L215.0 235.0L216.0 234.3L217.0 234.5L218.0 235.0L219.0 235.6L220.0 236.3L221.0 237.1L222.0 237.5L223.0 237.5L224.0 237.6L225.0 237.4L226.0 237.3L227.0 237.1L228.0 237.0L229.0 236.9L230.0 237.0L231.0 237.2L232.0 237.4L233.0 237.6L234.0 237.7L235.0 237.8L236.0 237.9L237.0 237.9L238.0 237.9L239.0 237.5L240.0 237.1L241.0 237.0L242.0 237.0L243.0 236.9L244.0 237.1L245.0 237.1L246.0 237.1L247.0 237.3L248.0 237.7L249.0 237.7L250.0 237.0L251.0 236.4L252.0 235.6L253.0 235.3L254.0 235.8L255.0 236.4L256.0 237.0L257.0 237.7L258.0 237.7L259.0 237.7L260.0 237.6L261.0 237.3L262.0 237.0L263.0 236.8L264.0 236.6L265.0 237.0L266.0 237.3L267.0 237.6L268.0 237.9L269.0 238.0L270.0 238.1L271.0 237.9L272.0 237.6L273.0 237.3L274.0 237.1L275.0 237.2L276.0 237.5L277.0 237.7L278.0 237.7L279.0 237.7L280.0 237.7L281.0 237.7L282.0 237.6L283.0 237.5L284.0 237.4L285.0 237.3L286.0 237.3L287.0 237.4L288.0 237.6L289.0 237.6L290.0 237.6L291.0 237.5L292.0 237.4L293.0 237.3L294.0 237.3L295.0 237.3L296.0 237.3L297.0 237.3L298.0 237.5L299.0 237.8L300.0 237.8L301.0 237.7L302.0 237.7L303.0 237.7L304.0 237.6L305.0 237.7L306.0 237.8L307.0 237.9L308.0 238.0L309.0 238.1L310.0 238.0L311.0 238.0L312.0 237.9L313.0 237.8L314.0 237.8L315.0 237.8L316.0 237.9L317.0 237.8L318.0 237.7L319.0 237.6L320.0 237.6L321.0 237.8L322.0 238.0L323.0 238.1L324.0 238.0L325.0 237.9L326.0 238.0L327.0 238.2L328.0 238.4L329.0 238.3L330.0 238.2L331.0 238.0L332.0 238.0L332.0 241.9L331.0 242.1L330.0 242.1L329.0 242.1L328.0 242.0L327.0 242.0L326.0 241.9L325.0 242.0L324.0 242.0L323.0 242.0L322.0 242.1L321.0 242.1L320.0 242.1L319.0 242.0L318.0 241.8L317.0 241.8L316.0 241.9L315.0 242.0L314.0 242.1L313.0 242.1L312.0 242.1L311.0 242.1L310.0 242.2L309.0 242.1L308.0 242.3L307.0 242.4L306.0 242.7L305.0 242.9L304.0 243.0L303.0 242.8L302.0 242.5L301.0 242.3L300.0 242.4L299.0 242.5L298.0 242.8L297.0 242.8L296.0 242.7L295.0 242.6L294.0 242.7L293.0 242.8L292.0 242.8L291.0 242.5L290.0 242.2L289.0 242.0L288.0 241.8L287.0 241.8L286.0 241.9L285.0 242.0L284.0 242.0L283.0 242.0L282.0 242.0L281.0 242.0L280.0 242.2L279.0 242.4L278.0 242.5L277.0 242.6L276.0 242.6L275.0 242.7L274.0 242.6L273.0 242.4L272.0 242.2L271.0 242.0L270.0 242.1L269.0 242.2L268.0 242.4L267.0 242.6L266.0 242.6L265.0 242.8L264.0 243.1L263.0 243.1L262.0 242.9L261.0 242.6L260.0 242.4L259.0 242.3L258.0 242.3L257.0 242.2L256.0 243.0L255.0 243.6L254.0 244.2L253.0 244.7L252.0 244.4L251.0 244.1L250.0 243.5L249.0 242.6L248.0 242.1L247.0 242.2L246.0 242.4L245.0 242.7L244.0 243.0L243.0 243.2L242.0 243.1L241.0 243.0L240.0 242.7L239.0 242.4L238.0 242.2L237.0 242.4L236.0 242.5L235.0 242.6L234.0 242.7L233.0 242.8L232.0 242.9L231.0 242.8L230.0 242.8L229.0 242.8L228.0 242.8L227.0 242.8L226.0 242.8L225.0 242.7L224.0 242.6L223.0 242.6L222.0 242.6L221.0 243.0L220.0 243.6L219.0 244.2L218.0 244.7L217.0 245.1L216.0 245.3L215.0 244.8L214.0 244.3L213.0 243.8L212.0 243.2L211.0 242.5L210.0 242.5L209.0 242.8L208.0 242.9L207.0 243.0L206.0 243.3L205.0 243.2L204.0 242.9L203.0 242.5L202.0 242.6L201.0 242.8L200.0 243.0L199.0 242.9L198.0 242.7L197.0 242.5L196.0 242.4L195.0 242.4L194.0 242.4L193.0 242.5L192.0 242.4L191.0 242.4L190.0 242.3L189.0 242.3L188.0 242.4L187.0 242.5L186.0 242.5L185.0 242.5L184.0 242.9L183.0 243.1L182.0 243.2L181.0 243.3L180.0 243.1L179.0 243.0L178.0 242.9L177.0 242.7L176.0 242.6L175.0 242.6L174.0 242.7L173.0 243.0L172.0 243.2L171.0 243.3L170.0 243.3L169.0 243.1L168.0 243.0L167.0 242.9L166.0 242.7L165.0 242.4L164.0 242.4L163.0 242.4L162.0 242.5L161.0 242.5L160.0 242.4L159.0 242.3L158.0 242.5L157.0 242.7L156.0 242.9L155.0 242.8L154.0 242.6L153.0 242.6L152.0 242.6L151.0 242.6L150.0 242.5L149.0 242.5L148.0 242.4L147.0 242.5L146.0 242.7L145.0 242.8L144.0 242.9L143.0 243.0L142.0 243.2L141.0 243.2L140.0 243.1L139.0 244.2L138.0 245.1L137.0 246.0L136.0 246.7L135.0 247.4L134.0 246.4L133.0 245.5L132.0 244.6L131.0 243.7L130.0 242.5L129.0 242.5L128.0 242.5L127.0 242.4L126.0 242.4L125.0 242.5L124.0 242.6L123.0 242.9L122.0 243.1L121.0 243.1L120.0 243.1L119.0 242.9L118.0 242.7L117.0 242.5L116.0 242.4L115.0 242.6L114.0 242.7L113.0 242.9L112.0 242.8L111.0 242.8L110.0 242.7L109.0 242.7L108.0 242.7L107.0 242.8L106.0 242.8L105.0 242.8L104.0 242.9L103.0 242.8L102.0 242.8L101.0 242.9L100.0 243.0L99.0 242.9L98.0 242.7L97.0 242.6L96.0 242.6L95.0 242.8L94.0 242.9L93.0 243.7L92.0 244.7L91.0 245.4L90.0 246.1L89.0 245.9L88.0 245.2L87.0 244.5L86.0 243.6L85.0 243.0L84.0 242.9L83.0 242.9L82.0 242.7L81.0 242.7L80.0 242.6L79.0 242.7L78.0 242.8L77.0 243.0L76.0 243.6L75.0 244.2L74.0 244.5L73.0 244.8L72.0 245.2L71.0 245.8L70.0 246.3L69.0 246.0L68.0 245.7L67.0 244.7L66.0 243.5Z"/><path d="M66.0 304.7L66.0 304.2L67.0 304.0L68.0 303.7L69.0 303.3L70.0 302.6L71.0 302.1L72.0 301.7L73.0 301.5L74.0 301.5L75.0 301.5L76.0 301.6L77.0 301.7L78.0 301.7L79.0 301.4L80.0 301.2L81.0 301.0L82.0 301.1L83.0 301.4L84.0 301.6L85.0 301.9L86.0 301.6L87.0 301.4L88.0 301.1L89.0 300.8L90.0 300.3L91.0 299.9L92.0 300.1L93.0 300.3L94.0 300.6L95.0 300.9L96.0 301.4L97.0 301.9L98.0 302.0L99.0 302.0L100.0 301.5L101.0 300.9L102.0 300.4L103.0 299.9L104.0 299.9L105.0 300.3L106.0 300.8L107.0 301.3L108.0 301.0L109.0 300.6L110.0 300.3L111.0 299.8L112.0 299.2L113.0 299.1L114.0 299.5L115.0 299.9L116.0 300.4L117.0 301.0L118.0 301.6L119.0 302.0L120.0 302.0L121.0 301.9L122.0 301.9L123.0 301.8L124.0 301.7L125.0 301.6L126.0 301.6L127.0 301.7L128.0 301.9L129.0 302.1L130.0 302.3L131.0 302.3L132.0 302.3L133.0 302.2L134.0 302.1L135.0 302.0L136.0 301.8L137.0 301.7L138.0 301.8L139.0 302.0L140.0 302.2L141.0 302.3L142.0 302.4L143.0 302.3L144.0 302.2L145.0 302.1L146.0 302.1L147.0 302.1L148.0 302.0L149.0 302.0L150.0 302.0L151.0 302.1L152.0 302.2L153.0 302.5L154.0 302.5L155.0 302.5L156.0 302.5L157.0 302.4L158.0 302.3L159.0 302.0L160.0 302.0L161.0 302.0L162.0 302.1L163.0 302.3L164.0 302.6L165.0 302.7L166.0 302.7L167.0 302.5L168.0 302.2L169.0 302.1L170.0 302.2L171.0 302.5L172.0 302.6L173.0 302.6L174.0 302.5L175.0 302.5L176.0 302.5L177.0 302.3L178.0 302.3L179.0 302.0L180.0 301.8L181.0 301.6L182.0 301.8L183.0 302.1L184.0 302.4L185.0 302.6L186.0 302.8L187.0 302.9L188.0 302.8L189.0 302.6L190.0 302.2L191.0 302.1L192.0 302.2L193.0 302.4L194.0 302.6L195.0 302.6L196.0 302.4L197.0 302.3L198.0 302.2L199.0 302.2L200.0 302.2L201.0 302.3L202.0 302.5L203.0 302.6L204.0 302.6L205.0 302.5L206.0 302.5L207.0 302.4L208.0 302.1L209.0 302.0L210.0 302.0L211.0 302.2L212.0 302.3L213.0 302.3L214.0 302.3L215.0 302.5L216.0 302.7L217.0 303.0L218.0 303.0L219.0 302.9L220.0 302.6L221.0 302.4L222.0 302.1L223.0 301.9L224.0 301.9L225.0 302.1L226.0 302.3L227.0 302.5L228.0 302.6L229.0 302.6L230.0 302.6L231.0 302.5L232.0 302.4L233.0 302.3L234.0 302.4L235.0 302.5L236.0 302.5L237.0 302.4L238.0 302.4L239.0 301.9L240.0 301.1L241.0 300.4L242.0 299.8L243.0 299.9L244.0 300.5L245.0 301.3L246.0 302.2L247.0 302.9L248.0 302.8L249.0 302.6L250.0 302.5L251.0 302.6L252.0 302.7L253.0 302.9L254.0 303.0L255.0 303.0L256.0 302.8L257.0 302.4L258.0 302.1L259.0 301.9L260.0 301.7L261.0 301.6L262.0 301.7L263.0 301.9L264.0 302.1L265.0 302.3L266.0 302.5L267.0 302.6L268.0 302.7L269.0 302.4L270.0 302.1L271.0 301.9L272.0 301.9L273.0 302.2L274.0 302.4L275.0 302.6L276.0 302.8L277.0 302.9L278.0 302.7L279.0 302.5L280.0 302.2L281.0 302.1L282.0 302.0L283.0 302.1L284.0 302.1L285.0 302.3L286.0 302.4L287.0 302.5L288.0 302.4L289.0 302.4L290.0 302.2L291.0 302.2L292.0 302.1L293.0 302.0L294.0 301.9L295.0 302.0L296.0 302.1L297.0 302.3L298.0 302.4L299.0 302.6L300.0 302.4L301.0 302.3L302.0 302.3L303.0 302.1L304.0 301.9L305.0 302.0L306.0 302.2L307.0 302.4L308.0 302.7L309.0 302.8L310.0 302.8L311.0 302.7L312.0 302.8L313.0 302.9L314.0 303.0L315.0 302.9L316.0 302.8L317.0 302.7L318.0 302.6L319.0 302.7L320.0 302.8L321.0 302.9L322.0 302.9L323.0 302.7L324.0 302.5L325.0 302.4L326.0 302.4L327.0 302.4L328.0 302.4L329.0 302.5L330.0 302.6L331.0 302.6L332.0 302.7L332.0 306.6L331.0 306.7L330.0 306.7L329.0 306.7L328.0 306.7L327.0 306.8L326.0 306.9L325.0 306.8L324.0 306.8L323.0 306.8L322.0 306.8L321.0 306.7L320.0 306.8L319.0 306.9L318.0 307.0L317.0 306.9L316.0 306.9L315.0 306.7L314.0 306.7L313.0 306.7L312.0 306.9L311.0 307.0L310.0 307.1L309.0 306.9L308.0 306.9L307.0 306.9L306.0 307.0L305.0 307.2L304.0 307.5L303.0 307.6L302.0 307.5L301.0 307.3L300.0 307.0L299.0 306.7L298.0 306.8L297.0 307.0L296.0 307.3L295.0 307.5L294.0 307.7L293.0 307.5L292.0 307.4L291.0 307.2L290.0 307.0L289.0 306.7L288.0 306.7L287.0 306.7L286.0 306.9L285.0 307.1L284.0 307.4L283.0 307.3L282.0 307.3L281.0 307.1L280.0 306.9L279.0 306.9L278.0 306.7L277.0 306.8L276.0 306.8L275.0 307.0L274.0 307.0L273.0 307.2L272.0 307.5L271.0 307.5L270.0 307.3L269.0 307.0L268.0 306.5L267.0 306.5L266.0 306.5L265.0 306.8L264.0 307.1L263.0 307.3L262.0 307.4L261.0 307.4L260.0 307.1L259.0 307.0L258.0 306.9L257.0 306.9L256.0 306.8L255.0 306.8L254.0 306.8L253.0 306.8L252.0 306.9L251.0 307.0L250.0 306.9L249.0 306.9L248.0 306.8L247.0 306.8L246.0 307.0L245.0 307.3L244.0 307.7L243.0 307.9L242.0 307.8L241.0 307.5L240.0 307.3L239.0 307.0L238.0 306.9L237.0 307.0L236.0 307.0L235.0 307.1L234.0 307.3L233.0 307.5L232.0 307.4L231.0 307.2L230.0 306.9L229.0 306.8L228.0 306.8L227.0 307.0L226.0 307.1L225.0 307.2L224.0 307.2L223.0 307.2L222.0 307.1L221.0 307.0L220.0 306.8L219.0 306.6L218.0 306.4L217.0 306.5L216.0 306.7L215.0 306.9L214.0 306.9L213.0 306.8L212.0 306.7L211.0 306.7L210.0 306.9L209.0 307.1L208.0 307.2L207.0 307.2L206.0 307.1L205.0 306.9L204.0 306.8L203.0 306.8L202.0 307.0L201.0 307.2L200.0 307.2L199.0 307.1L198.0 307.2L197.0 307.2L196.0 307.2L195.0 307.0L194.0 306.9L193.0 307.0L192.0 307.2L191.0 307.4L190.0 307.5L189.0 307.5L188.0 307.4L187.0 307.2L186.0 307.2L185.0 307.4L184.0 307.6L183.0 307.7L182.0 307.6L181.0 307.5L180.0 307.2L179.0 307.1L178.0 307.1L177.0 307.0L176.0 306.8L175.0 306.7L174.0 306.7L173.0 306.7L172.0 306.8L171.0 306.9L170.0 306.9L169.0 306.9L168.0 307.0L167.0 307.1L166.0 307.1L165.0 307.0L164.0 306.9L163.0 306.9L162.0 306.8L161.0 306.7L160.0 306.7L159.0 306.8L158.0 307.0L157.0 307.1L156.0 307.1L155.0 307.0L154.0 306.8L153.0 306.8L152.0 306.8L151.0 306.9L150.0 307.0L149.0 307.2L148.0 307.3L147.0 307.4L146.0 307.5L145.0 307.6L144.0 307.5L143.0 307.3L142.0 307.1L141.0 307.2L140.0 307.3L139.0 307.5L138.0 307.6L137.0 307.8L136.0 307.6L135.0 307.5L134.0 307.4L133.0 307.4L132.0 307.4L131.0 307.4L130.0 307.3L129.0 307.4L128.0 307.5L127.0 307.6L126.0 307.7L125.0 308.0L124.0 308.0L123.0 308.0L122.0 307.9L121.0 307.6L120.0 307.2L119.0 306.8L118.0 307.0L117.0 307.7L116.0 308.4L115.0 308.9L114.0 309.4L113.0 309.7L112.0 309.9L111.0 309.5L110.0 309.1L109.0 308.5L108.0 308.0L107.0 307.5L106.0 307.6L105.0 307.9L104.0 308.1L103.0 308.2L102.0 307.9L101.0 307.5L100.0 307.1L99.0 306.8L98.0 306.8L97.0 306.9L96.0 307.4L95.0 307.7L94.0 308.0L93.0 308.3L92.0 308.7L91.0 309.0L90.0 308.8L89.0 308.6L88.0 308.3L87.0 308.1L86.0 307.8L85.0 307.3L84.0 307.3L83.0 307.4L82.0 307.7L81.0 308.1L80.0 308.3L79.0 308.2L78.0 308.1L77.0 308.0L76.0 307.9L75.0 307.9L74.0 307.8L73.0 307.6L72.0 307.3L71.0 307.2L70.0 306.9L69.0 306.4L68.0 305.8L67.0 305.5L66.0 305.2Z"/><path d="M66.0 453.1L66.0 452.5L67.0 452.2L68.0 451.9L69.0 451.4L70.0 451.1L71.0 450.9L72.0 450.6L73.0 450.4L74.0 450.2L75.0 450.0L76.0 450.0L77.0 449.9L78.0 449.9L79.0 450.0L80.0 450.2L81.0 450.3L82.0 450.2L83.0 450.2L84.0 450.2L85.0 450.3L86.0 450.3L87.0 450.4L88.0 450.4L89.0 450.4L90.0 450.3L91.0 450.2L92.0 450.1L93.0 450.1L94.0 450.3L95.0 450.3L96.0 450.4L97.0 450.5L98.0 450.6L99.0 450.6L100.0 450.6L101.0 450.7L102.0 450.6L103.0 450.5L104.0 450.3L105.0 450.1L106.0 450.2L107.0 450.1L108.0 450.1L109.0 450.2L110.0 450.4L111.0 450.5L112.0 450.6L113.0 450.7L114.0 450.8L115.0 450.7L116.0 450.7L117.0 450.7L118.0 450.7L119.0 450.6L120.0 450.5L121.0 450.3L122.0 450.0L123.0 449.8L124.0 449.8L125.0 449.9L126.0 450.2L127.0 450.3L128.0 450.4L129.0 450.5L130.0 450.7L131.0 450.9L132.0 450.9L133.0 450.9L134.0 450.8L135.0 450.8L136.0 450.8L137.0 451.0L138.0 451.1L139.0 451.1L140.0 450.9L141.0 450.9L142.0 450.8L143.0 450.9L144.0 450.6L145.0 450.3L146.0 450.1L147.0 450.3L148.0 450.6L149.0 450.9L150.0 451.0L151.0 451.0L152.0 450.9L153.0 450.9L154.0 450.9L155.0 450.9L156.0 450.8L157.0 450.7L158.0 450.6L159.0 450.6L160.0 450.6L161.0 450.7L162.0 450.8L163.0 450.9L164.0 450.9L165.0 450.8L166.0 450.8L167.0 450.8L168.0 450.8L169.0 450.8L170.0 450.8L171.0 450.8L172.0 450.9L173.0 450.8L174.0 450.6L175.0 450.4L176.0 450.3L177.0 450.2L178.0 450.4L179.0 450.5L180.0 450.6L181.0 450.8L182.0 450.7L183.0 450.3L184.0 450.0L185.0 449.7L186.0 449.5L187.0 449.4L188.0 449.7L189.0 449.9L190.0 450.0L191.0 450.2L192.0 450.1L193.0 450.0L194.0 449.9L195.0 449.8L196.0 450.0L197.0 450.2L198.0 450.4L199.0 450.7L200.0 450.9L201.0 450.8L202.0 450.7L203.0 450.6L204.0 450.7L205.0 450.7L206.0 450.8L207.0 450.8L208.0 450.8L209.0 450.6L210.0 450.5L211.0 450.4L212.0 449.7L213.0 448.9L214.0 448.2L215.0 447.6L216.0 447.0L217.0 447.2L218.0 447.8L219.0 448.5L220.0 449.2L221.0 448.8L222.0 448.4L223.0 448.3L224.0 448.8L225.0 449.3L226.0 449.9L227.0 450.4L228.0 450.3L229.0 450.0L230.0 449.6L231.0 449.4L232.0 449.1L233.0 449.5L234.0 449.8L235.0 450.0L236.0 450.2L237.0 450.6L238.0 450.6L239.0 450.6L240.0 450.5L241.0 450.6L242.0 450.8L243.0 451.0L244.0 451.0L245.0 450.8L246.0 450.5L247.0 450.3L248.0 450.2L249.0 450.2L250.0 450.3L251.0 450.4L252.0 450.6L253.0 450.7L254.0 450.7L255.0 450.7L256.0 450.6L257.0 450.6L258.0 450.7L259.0 450.7L260.0 450.7L261.0 450.7L262.0 450.6L263.0 450.6L264.0 450.5L265.0 450.4L266.0 450.3L267.0 450.2L268.0 450.3L269.0 450.4L270.0 450.5L271.0 450.5L272.0 450.5L273.0 450.5L274.0 450.6L275.0 450.5L276.0 450.5L277.0 450.4L278.0 450.3L279.0 450.3L280.0 450.3L281.0 450.4L282.0 450.5L283.0 450.6L284.0 450.7L285.0 450.7L286.0 450.7L287.0 450.6L288.0 450.5L289.0 450.5L290.0 450.6L291.0 450.6L292.0 450.7L293.0 450.8L294.0 450.8L295.0 450.7L296.0 450.6L297.0 450.6L298.0 450.6L299.0 450.6L300.0 450.5L301.0 450.5L302.0 450.5L303.0 450.6L304.0 450.7L305.0 450.6L306.0 450.6L307.0 450.6L308.0 450.7L309.0 450.8L310.0 450.9L311.0 450.8L312.0 450.8L313.0 450.1L314.0 449.5L315.0 448.9L316.0 448.3L317.0 447.8L318.0 447.4L319.0 447.7L320.0 448.2L321.0 448.6L322.0 449.1L323.0 449.7L324.0 450.2L325.0 450.1L326.0 450.1L327.0 450.0L328.0 450.2L329.0 450.2L330.0 450.2L331.0 450.3L332.0 450.0L332.0 455.7L331.0 455.6L330.0 456.0L329.0 456.4L328.0 456.7L327.0 456.8L326.0 456.5L325.0 456.2L324.0 455.9L323.0 456.5L322.0 457.1L321.0 457.7L320.0 458.1L319.0 458.5L318.0 458.8L317.0 458.3L316.0 457.9L315.0 457.3L314.0 456.9L313.0 456.4L312.0 455.8L311.0 455.8L310.0 455.5L309.0 455.4L308.0 455.3L307.0 455.4L306.0 455.4L305.0 455.4L304.0 455.4L303.0 455.4L302.0 455.4L301.0 455.4L300.0 455.4L299.0 455.4L298.0 455.4L297.0 455.4L296.0 455.3L295.0 455.3L294.0 455.3L293.0 455.3L292.0 455.4L291.0 455.5L290.0 455.6L289.0 455.8L288.0 455.8L287.0 455.8L286.0 455.7L285.0 455.7L284.0 455.8L283.0 455.8L282.0 455.7L281.0 455.5L280.0 455.4L279.0 455.3L278.0 455.3L277.0 455.4L276.0 455.5L275.0 455.7L274.0 455.7L273.0 455.7L272.0 455.5L271.0 455.5L270.0 455.5L269.0 455.6L268.0 455.7L267.0 455.7L266.0 455.5L265.0 455.3L264.0 455.2L263.0 455.3L262.0 455.5L261.0 455.6L260.0 455.8L259.0 455.9L258.0 456.0L257.0 455.9L256.0 455.9L255.0 455.7L254.0 455.5L253.0 455.4L252.0 455.5L251.0 455.6L250.0 455.6L249.0 455.6L248.0 455.5L247.0 455.7L246.0 455.8L245.0 456.0L244.0 456.0L243.0 455.9L242.0 455.6L241.0 455.4L240.0 455.5L239.0 455.6L238.0 455.5L237.0 455.5L236.0 455.8L235.0 456.2L234.0 456.5L233.0 456.7L232.0 456.7L231.0 456.4L230.0 456.1L229.0 455.9L228.0 455.7L227.0 455.8L226.0 456.3L225.0 456.7L224.0 457.2L223.0 457.7L222.0 457.8L221.0 457.4L220.0 456.9L219.0 457.5L218.0 458.0L217.0 458.7L216.0 459.1L215.0 458.7L214.0 458.1L213.0 457.4L212.0 456.7L211.0 456.1L210.0 456.0L209.0 455.9L208.0 455.6L207.0 455.4L206.0 455.4L205.0 455.5L204.0 455.6L203.0 455.6L202.0 455.6L201.0 455.5L200.0 455.5L199.0 455.6L198.0 455.8L197.0 455.9L196.0 456.1L195.0 456.3L194.0 456.3L193.0 456.3L192.0 456.3L191.0 456.3L190.0 456.5L189.0 456.7L188.0 456.9L187.0 457.1L186.0 456.9L185.0 456.4L184.0 455.9L183.0 455.5L182.0 455.3L181.0 455.4L180.0 455.7L179.0 455.8L178.0 455.8L177.0 455.9L176.0 455.9L175.0 455.8L174.0 455.6L173.0 455.2L172.0 455.1L171.0 455.1L170.0 455.3L169.0 455.3L168.0 455.4L167.0 455.3L166.0 455.3L165.0 455.2L164.0 455.2L163.0 455.3L162.0 455.4L161.0 455.5L160.0 455.5L159.0 455.3L158.0 455.1L157.0 455.0L156.0 455.1L155.0 455.3L154.0 455.5L153.0 455.5L152.0 455.5L151.0 455.3L150.0 455.2L149.0 455.2L148.0 455.3L147.0 455.6L146.0 455.9L145.0 455.6L144.0 455.3L143.0 455.1L142.0 454.9L141.0 454.9L140.0 454.8L139.0 454.8L138.0 454.7L137.0 454.8L136.0 455.1L135.0 455.2L134.0 455.3L133.0 455.2L132.0 455.3L131.0 455.5L130.0 455.9L129.0 456.1L128.0 456.3L127.0 456.2L126.0 456.2L125.0 456.1L124.0 456.3L123.0 456.3L122.0 456.3L121.0 456.3L120.0 456.2L119.0 456.0L118.0 455.7L117.0 455.6L116.0 455.7L115.0 455.8L114.0 455.9L113.0 455.9L112.0 455.9L111.0 455.9L110.0 456.0L109.0 455.9L108.0 455.9L107.0 455.8L106.0 455.9L105.0 455.9L104.0 456.0L103.0 455.8L102.0 455.6L101.0 455.4L100.0 455.3L99.0 455.3L98.0 455.5L97.0 455.7L96.0 455.9L95.0 456.0L94.0 456.2L93.0 456.2L92.0 456.3L91.0 456.1L90.0 456.0L89.0 455.8L88.0 455.7L87.0 455.6L86.0 455.5L85.0 455.5L84.0 455.6L83.0 455.9L82.0 455.9L81.0 455.9L80.0 456.0L79.0 456.1L78.0 456.2L77.0 456.1L76.0 455.9L75.0 455.7L74.0 455.7L73.0 455.8L72.0 455.8L71.0 455.4L70.0 455.0L69.0 454.7L68.0 454.4L67.0 454.0L66.0 453.7Z"/><path d="M66.0 545.6L66.0 545.0L67.0 544.5L68.0 544.0L69.0 543.6L70.0 543.0L71.0 542.6L72.0 542.4L73.0 542.4L74.0 542.3L75.0 542.1L76.0 541.9L77.0 541.9L78.0 542.2L79.0 542.3L80.0 542.3L81.0 542.2L82.0 542.3L83.0 542.4L84.0 542.5L85.0 542.5L86.0 542.7L87.0 543.0L88.0 543.2L89.0 543.2L90.0 543.1L91.0 542.9L92.0 542.9L93.0 542.9L94.0 542.8L95.0 542.9L96.0 542.8L97.0 542.9L98.0 543.0L99.0 543.2L100.0 543.0L101.0 542.8L102.0 542.6L103.0 542.7L104.0 542.7L105.0 542.8L106.0 542.8L107.0 542.8L108.0 542.9L109.0 542.8L110.0 542.8L111.0 542.9L112.0 542.9L113.0 542.8L114.0 542.4L115.0 542.1L116.0 541.9L117.0 541.9L118.0 542.1L119.0 542.4L120.0 542.6L121.0 542.9L122.0 542.9L123.0 542.8L124.0 542.8L125.0 542.9L126.0 542.8L127.0 542.5L128.0 542.1L129.0 541.9L130.0 541.9L131.0 542.2L132.0 542.4L133.0 542.5L134.0 542.6L135.0 542.8L136.0 543.0L137.0 542.9L138.0 542.8L139.0 542.6L140.0 542.7L141.0 542.8L142.0 542.9L143.0 542.8L144.0 542.8L145.0 542.8L146.0 542.9L147.0 542.8L148.0 542.7L149.0 542.6L150.0 542.6L151.0 542.6L152.0 542.6L153.0 542.5L154.0 542.6L155.0 542.7L156.0 542.4L157.0 541.9L158.0 541.5L159.0 541.1L160.0 540.8L161.0 540.8L162.0 541.2L163.0 541.7L164.0 542.3L165.0 542.8L166.0 543.2L167.0 543.3L168.0 543.4L169.0 543.6L170.0 543.6L171.0 543.5L172.0 543.4L173.0 543.2L174.0 543.2L175.0 543.3L176.0 543.3L177.0 543.3L178.0 543.3L179.0 543.3L180.0 543.2L181.0 543.0L182.0 542.9L183.0 542.9L184.0 543.0L185.0 543.0L186.0 542.9L187.0 542.9L188.0 543.1L189.0 543.3L190.0 543.2L191.0 543.2L192.0 543.1L193.0 543.1L194.0 543.0L195.0 542.8L196.0 542.9L197.0 542.9L198.0 543.0L199.0 543.1L200.0 543.2L201.0 543.2L202.0 543.2L203.0 543.2L204.0 543.2L205.0 543.2L206.0 543.2L207.0 543.2L208.0 543.2L209.0 543.1L210.0 543.1L211.0 543.1L212.0 543.2L213.0 543.3L214.0 543.3L215.0 543.3L216.0 543.3L217.0 543.3L218.0 543.1L219.0 543.1L220.0 543.0L221.0 543.0L222.0 543.0L223.0 543.0L224.0 543.1L225.0 543.2L226.0 543.2L227.0 543.2L228.0 543.1L229.0 543.1L230.0 543.1L231.0 543.3L232.0 543.3L233.0 543.4L234.0 543.3L235.0 543.3L236.0 543.1L237.0 543.1L238.0 542.9L239.0 543.0L240.0 543.0L241.0 543.1L242.0 543.2L243.0 543.3L244.0 543.4L245.0 543.5L246.0 543.6L247.0 543.7L248.0 543.6L249.0 543.5L250.0 543.3L251.0 543.2L252.0 542.9L253.0 542.8L254.0 542.6L255.0 542.4L256.0 542.3L257.0 542.4L258.0 542.7L259.0 543.0L260.0 543.3L261.0 543.5L262.0 543.4L263.0 543.4L264.0 543.2L265.0 543.1L266.0 542.8L267.0 542.5L268.0 542.4L269.0 542.6L270.0 542.8L271.0 542.9L272.0 543.0L273.0 542.9L274.0 542.5L275.0 542.1L276.0 541.9L277.0 541.5L278.0 541.3L279.0 541.5L280.0 541.8L281.0 542.2L282.0 542.8L283.0 543.5L284.0 543.7L285.0 543.7L286.0 543.6L287.0 543.4L288.0 543.4L289.0 543.4L290.0 543.6L291.0 543.7L292.0 543.7L293.0 543.7L294.0 543.7L295.0 543.8L296.0 543.7L297.0 543.3L298.0 543.0L299.0 542.8L300.0 542.7L301.0 542.7L302.0 542.9L303.0 543.2L304.0 543.5L305.0 543.6L306.0 543.7L307.0 543.5L308.0 543.5L309.0 543.5L310.0 543.4L311.0 543.1L312.0 543.0L313.0 543.0L314.0 543.0L315.0 542.9L316.0 543.0L317.0 543.1L318.0 543.3L319.0 543.4L320.0 543.6L321.0 543.8L322.0 543.9L323.0 543.6L324.0 543.3L325.0 543.0L326.0 542.7L327.0 542.5L328.0 542.7L329.0 542.8L330.0 542.9L331.0 542.9L332.0 542.6L332.0 548.7L331.0 548.3L330.0 548.4L329.0 548.5L328.0 548.6L327.0 548.8L326.0 548.8L325.0 548.7L324.0 548.5L323.0 548.2L322.0 547.7L321.0 547.8L320.0 547.7L319.0 547.8L318.0 547.8L317.0 547.9L316.0 548.0L315.0 548.0L314.0 548.0L313.0 548.0L312.0 548.0L311.0 547.9L310.0 547.7L309.0 547.6L308.0 547.7L307.0 547.8L306.0 547.9L305.0 547.9L304.0 547.9L303.0 547.9L302.0 548.1L301.0 548.3L300.0 548.3L299.0 548.2L298.0 548.0L297.0 547.9L296.0 547.6L295.0 547.5L294.0 547.5L293.0 547.6L292.0 547.7L291.0 547.8L290.0 547.9L289.0 547.9L288.0 547.9L287.0 547.9L286.0 547.7L285.0 547.6L284.0 547.4L283.0 547.5L282.0 548.0L281.0 548.6L280.0 549.2L279.0 549.6L278.0 550.0L277.0 549.9L276.0 549.5L275.0 549.2L274.0 549.0L273.0 548.6L272.0 548.5L271.0 548.5L270.0 548.4L269.0 548.4L268.0 548.5L267.0 548.4L266.0 548.5L265.0 548.3L264.0 548.1L263.0 547.8L262.0 547.8L261.0 547.8L260.0 548.1L259.0 548.4L258.0 548.5L257.0 548.6L256.0 548.7L255.0 548.8L254.0 548.7L253.0 548.5L252.0 548.2L251.0 547.9L250.0 547.8L249.0 547.9L248.0 547.9L247.0 548.1L246.0 548.0L245.0 548.0L244.0 547.8L243.0 547.7L242.0 547.6L241.0 547.7L240.0 547.8L239.0 548.0L238.0 548.2L237.0 548.3L236.0 548.4L235.0 548.4L234.0 548.4L233.0 548.2L232.0 548.0L231.0 547.9L230.0 548.1L229.0 548.1L228.0 548.1L227.0 548.0L226.0 548.0L225.0 547.9L224.0 547.9L223.0 547.9L222.0 547.8L221.0 547.8L220.0 547.7L219.0 547.8L218.0 547.8L217.0 547.9L216.0 548.1L215.0 548.0L214.0 547.9L213.0 547.7L212.0 547.7L211.0 547.7L210.0 547.9L209.0 548.0L208.0 548.1L207.0 548.2L206.0 548.1L205.0 548.1L204.0 548.0L203.0 548.0L202.0 548.1L201.0 548.2L200.0 548.3L199.0 548.2L198.0 548.0L197.0 547.9L196.0 547.9L195.0 547.9L194.0 547.8L193.0 547.7L192.0 547.8L191.0 548.2L190.0 548.5L189.0 548.6L188.0 548.5L187.0 548.2L186.0 547.9L185.0 547.6L184.0 547.7L183.0 547.9L182.0 548.2L181.0 548.4L180.0 548.4L179.0 548.4L178.0 548.3L177.0 548.2L176.0 548.1L175.0 548.0L174.0 547.9L173.0 547.8L172.0 547.9L171.0 548.1L170.0 548.2L169.0 548.3L168.0 548.3L167.0 548.3L166.0 548.2L165.0 548.5L164.0 549.0L163.0 549.4L162.0 549.8L161.0 550.2L160.0 550.2L159.0 549.9L158.0 549.5L157.0 549.2L156.0 548.6L155.0 548.1L154.0 548.1L153.0 548.1L152.0 548.3L151.0 548.5L150.0 548.6L149.0 548.8L148.0 548.9L147.0 548.7L146.0 548.5L145.0 548.4L144.0 548.4L143.0 548.2L142.0 548.0L141.0 548.0L140.0 548.1L139.0 548.3L138.0 548.5L137.0 548.6L136.0 548.7L135.0 548.7L134.0 548.6L133.0 548.5L132.0 548.5L131.0 548.6L130.0 548.8L129.0 548.8L128.0 548.9L127.0 548.8L126.0 548.7L125.0 548.3L124.0 548.2L123.0 548.0L122.0 548.1L121.0 548.4L120.0 548.9L119.0 549.1L118.0 549.2L117.0 549.2L116.0 549.1L115.0 548.9L114.0 548.8L113.0 548.7L112.0 548.4L111.0 548.2L110.0 548.3L109.0 548.4L108.0 548.6L107.0 548.6L106.0 548.5L105.0 548.4L104.0 548.4L103.0 548.4L102.0 548.4L101.0 548.3L100.0 548.3L99.0 548.3L98.0 548.1L97.0 548.2L96.0 548.3L95.0 548.4L94.0 548.2L93.0 548.1L92.0 548.1L91.0 548.1L90.0 548.1L89.0 548.0L88.0 548.1L87.0 548.3L86.0 548.6L85.0 548.7L84.0 548.8L83.0 548.9L82.0 549.0L81.0 549.0L80.0 548.9L79.0 548.8L78.0 548.8L77.0 548.9L76.0 548.9L75.0 548.8L74.0 548.6L73.0 548.6L72.0 548.5L71.0 548.2L70.0 547.7L69.0 547.3L68.0 547.0L67.0 546.6L66.0 546.2Z"/><path d="M66.0 610.5L66.0 609.9L67.0 609.5L68.0 609.2L69.0 608.6L70.0 608.0L71.0 607.6L72.0 607.4L73.0 607.4L74.0 607.4L75.0 607.4L76.0 607.4L77.0 607.4L78.0 607.6L79.0 607.7L80.0 607.5L81.0 607.3L82.0 607.1L83.0 606.9L84.0 606.6L85.0 606.4L86.0 606.6L87.0 606.8L88.0 607.2L89.0 607.4L90.0 607.6L91.0 607.6L92.0 607.6L93.0 607.6L94.0 607.5L95.0 607.3L96.0 607.2L97.0 607.3L98.0 607.3L99.0 607.4L100.0 607.6L101.0 607.8L102.0 608.0L103.0 607.9L104.0 607.7L105.0 607.7L106.0 607.7L107.0 607.8L108.0 608.0L109.0 608.3L110.0 608.5L111.0 608.6L112.0 608.6L113.0 608.7L114.0 608.8L115.0 608.7L116.0 608.5L117.0 608.4L118.0 608.4L119.0 608.5L120.0 608.6L121.0 608.6L122.0 608.4L123.0 608.2L124.0 608.2L125.0 608.3L126.0 608.3L127.0 608.4L128.0 608.6L129.0 608.7L130.0 608.7L131.0 608.5L132.0 608.4L133.0 608.3L134.0 608.3L135.0 608.2L136.0 608.3L137.0 608.4L138.0 608.6L139.0 608.6L140.0 608.6L141.0 608.6L142.0 608.5L143.0 608.4L144.0 608.3L145.0 608.3L146.0 608.2L147.0 608.0L148.0 608.0L149.0 608.0L150.0 608.1L151.0 608.1L152.0 608.2L153.0 608.3L154.0 608.3L155.0 608.2L156.0 608.2L157.0 608.2L158.0 608.2L159.0 608.3L160.0 608.4L161.0 608.5L162.0 608.6L163.0 608.4L164.0 608.3L165.0 608.1L166.0 608.3L167.0 608.4L168.0 608.6L169.0 608.6L170.0 608.7L171.0 608.8L172.0 608.5L173.0 608.3L174.0 608.1L175.0 607.9L176.0 607.7L177.0 607.6L178.0 607.7L179.0 607.8L180.0 607.9L181.0 608.0L182.0 608.0L183.0 608.0L184.0 608.0L185.0 608.0L186.0 608.0L187.0 608.1L188.0 608.2L189.0 608.2L190.0 608.1L191.0 608.1L192.0 608.0L193.0 608.0L194.0 607.9L195.0 607.9L196.0 608.1L197.0 608.3L198.0 608.3L199.0 608.2L200.0 608.1L201.0 608.0L202.0 608.1L203.0 608.2L204.0 608.1L205.0 608.1L206.0 608.0L207.0 607.9L208.0 607.9L209.0 608.0L210.0 608.2L211.0 608.4L212.0 608.3L213.0 608.2L214.0 608.1L215.0 608.3L216.0 608.6L217.0 608.7L218.0 608.6L219.0 608.5L220.0 608.4L221.0 608.3L222.0 608.2L223.0 608.1L224.0 608.2L225.0 608.2L226.0 608.1L227.0 608.0L228.0 607.9L229.0 607.9L230.0 608.0L231.0 607.9L232.0 607.8L233.0 607.8L234.0 607.7L235.0 607.8L236.0 607.9L237.0 608.2L238.0 608.3L239.0 608.4L240.0 608.3L241.0 608.2L242.0 608.1L243.0 608.0L244.0 607.9L245.0 607.8L246.0 607.7L247.0 607.7L248.0 607.7L249.0 607.7L250.0 607.9L251.0 608.2L252.0 608.3L253.0 608.3L254.0 608.2L255.0 608.1L256.0 608.1L257.0 608.0L258.0 607.9L259.0 607.7L260.0 607.6L261.0 607.4L262.0 607.2L263.0 607.1L264.0 606.9L265.0 606.8L266.0 606.9L267.0 607.1L268.0 607.4L269.0 607.7L270.0 607.8L271.0 607.9L272.0 608.1L273.0 608.2L274.0 608.1L275.0 608.2L276.0 608.2L277.0 608.3L278.0 608.2L279.0 608.1L280.0 607.9L281.0 607.8L282.0 607.8L283.0 607.6L284.0 607.6L285.0 607.7L286.0 607.8L287.0 607.9L288.0 607.9L289.0 607.9L290.0 608.0L291.0 608.0L292.0 608.0L293.0 608.0L294.0 608.1L295.0 608.1L296.0 607.9L297.0 607.7L298.0 607.7L299.0 607.8L300.0 608.1L301.0 608.3L302.0 608.3L303.0 608.3L304.0 608.3L305.0 608.3L306.0 608.3L307.0 608.1L308.0 608.1L309.0 608.0L310.0 608.0L311.0 608.1L312.0 608.1L313.0 608.1L314.0 608.1L315.0 608.1L316.0 608.2L317.0 608.4L318.0 608.5L319.0 608.4L320.0 608.4L321.0 608.4L322.0 608.2L323.0 607.9L324.0 607.7L325.0 607.7L326.0 607.9L327.0 608.1L328.0 608.4L329.0 608.3L330.0 608.2L331.0 607.7L332.0 607.6L332.0 613.5L331.0 613.3L330.0 613.0L329.0 613.0L328.0 612.9L327.0 613.0L326.0 613.1L325.0 613.4L324.0 613.5L323.0 613.5L322.0 613.3L321.0 613.1L320.0 613.1L319.0 613.0L318.0 612.8L317.0 612.7L316.0 612.7L315.0 612.6L314.0 612.7L313.0 612.8L312.0 613.0L311.0 613.1L310.0 613.3L309.0 613.2L308.0 613.3L307.0 613.2L306.0 613.1L305.0 613.0L304.0 613.1L303.0 613.2L302.0 613.3L301.0 613.2L300.0 613.2L299.0 613.1L298.0 613.0L297.0 613.0L296.0 613.2L295.0 613.4L294.0 613.4L293.0 613.3L292.0 613.2L291.0 612.9L290.0 612.9L289.0 613.0L288.0 613.1L287.0 613.2L286.0 613.2L285.0 613.1L284.0 613.1L283.0 613.1L282.0 613.2L281.0 613.3L280.0 613.3L279.0 613.2L278.0 613.1L277.0 612.9L276.0 612.9L275.0 612.9L274.0 613.0L273.0 612.9L272.0 613.1L271.0 613.1L270.0 613.2L269.0 613.3L268.0 613.5L267.0 613.7L266.0 613.8L265.0 613.9L264.0 613.8L263.0 613.7L262.0 613.6L261.0 613.6L260.0 613.6L259.0 613.4L258.0 613.2L257.0 613.0L256.0 612.8L255.0 612.8L254.0 612.7L253.0 612.7L252.0 612.9L251.0 613.1L250.0 613.4L249.0 613.5L248.0 613.5L247.0 613.3L246.0 613.2L245.0 613.2L244.0 613.3L243.0 613.4L242.0 613.3L241.0 613.0L240.0 612.9L239.0 612.8L238.0 612.9L237.0 612.9L236.0 613.0L235.0 612.9L234.0 612.8L233.0 612.6L232.0 612.6L231.0 612.9L230.0 613.1L229.0 613.2L228.0 613.1L227.0 613.0L226.0 613.0L225.0 613.0L224.0 613.0L223.0 612.9L222.0 612.9L221.0 612.8L220.0 612.7L219.0 612.7L218.0 612.7L217.0 612.8L216.0 612.9L215.0 613.0L214.0 613.0L213.0 613.0L212.0 612.9L211.0 612.9L210.0 612.8L209.0 612.8L208.0 612.9L207.0 612.9L206.0 612.9L205.0 612.8L204.0 612.8L203.0 612.9L202.0 612.9L201.0 612.8L200.0 612.7L199.0 612.7L198.0 612.7L197.0 612.8L196.0 612.9L195.0 613.1L194.0 613.1L193.0 613.2L192.0 613.3L191.0 613.3L190.0 613.2L189.0 613.1L188.0 613.0L187.0 612.9L186.0 612.8L185.0 612.6L184.0 612.5L183.0 612.6L182.0 612.9L181.0 613.2L180.0 613.4L179.0 613.5L178.0 613.6L177.0 613.6L176.0 613.4L175.0 613.2L174.0 613.2L173.0 613.2L172.0 613.2L171.0 612.9L170.0 612.8L169.0 612.8L168.0 612.8L167.0 612.8L166.0 612.7L165.0 612.7L164.0 612.7L163.0 612.6L162.0 612.5L161.0 612.5L160.0 612.5L159.0 612.7L158.0 612.8L157.0 612.8L156.0 612.7L155.0 612.7L154.0 612.7L153.0 612.7L152.0 612.6L151.0 612.5L150.0 612.4L149.0 612.5L148.0 612.7L147.0 613.0L146.0 613.1L145.0 613.1L144.0 612.9L143.0 612.8L142.0 612.6L141.0 612.4L140.0 612.4L139.0 612.4L138.0 612.5L137.0 612.6L136.0 612.7L135.0 612.7L134.0 612.7L133.0 612.7L132.0 612.6L131.0 612.6L130.0 612.6L129.0 612.8L128.0 612.8L127.0 612.9L126.0 612.9L125.0 612.8L124.0 612.7L123.0 612.6L122.0 612.7L121.0 612.6L120.0 612.6L119.0 612.5L118.0 612.5L117.0 612.6L116.0 612.7L115.0 612.6L114.0 612.4L113.0 612.3L112.0 612.4L111.0 612.6L110.0 612.7L109.0 612.9L108.0 613.0L107.0 613.2L106.0 613.2L105.0 613.2L104.0 613.1L103.0 613.0L102.0 613.1L101.0 613.4L100.0 613.7L99.0 614.0L98.0 614.1L97.0 614.2L96.0 614.2L95.0 614.1L94.0 613.9L93.0 613.8L92.0 613.6L91.0 613.5L90.0 613.5L89.0 613.8L88.0 614.0L87.0 614.1L86.0 614.2L85.0 614.3L84.0 614.3L83.0 614.1L82.0 614.0L81.0 613.9L80.0 613.8L79.0 613.6L78.0 613.5L77.0 613.4L76.0 613.3L75.0 613.3L74.0 613.4L73.0 613.5L72.0 613.5L71.0 613.2L70.0 612.7L69.0 612.1L68.0 611.7L67.0 611.5L66.0 611.1Z"/><path d="M66.0 702.3L66.0 701.5L67.0 701.4L68.0 701.3L69.0 701.2L70.0 701.1L71.0 701.0L72.0 700.8L73.0 700.5L74.0 700.3L75.0 700.1L76.0 700.1L77.0 700.2L78.0 700.3L79.0 700.3L80.0 700.2L81.0 700.2L82.0 700.3L83.0 700.3L84.0 700.3L85.0 700.1L86.0 700.0L87.0 700.0L88.0 699.9L89.0 699.8L90.0 699.8L91.0 699.9L92.0 700.0L93.0 700.0L94.0 700.0L95.0 699.8L96.0 699.7L97.0 699.7L98.0 699.6L99.0 699.6L100.0 699.6L101.0 699.6L102.0 699.6L103.0 699.6L104.0 699.8L105.0 700.0L106.0 700.1L107.0 700.0L108.0 699.9L109.0 699.8L110.0 699.7L111.0 699.5L112.0 699.5L113.0 699.5L114.0 699.5L115.0 699.6L116.0 699.8L117.0 699.9L118.0 699.9L119.0 699.8L120.0 699.7L121.0 699.6L122.0 699.5L123.0 699.5L124.0 699.5L125.0 699.5L126.0 699.7L127.0 700.0L128.0 700.2L129.0 700.3L130.0 700.3L131.0 700.3L132.0 700.0L133.0 699.7L134.0 699.4L135.0 699.3L136.0 699.1L137.0 699.2L138.0 699.3L139.0 699.5L140.0 699.5L141.0 699.3L142.0 699.2L143.0 699.1L144.0 699.1L145.0 699.1L146.0 699.0L147.0 698.9L148.0 698.9L149.0 698.8L150.0 698.6L151.0 698.1L152.0 697.6L153.0 697.4L154.0 697.4L155.0 697.5L156.0 697.3L157.0 697.1L158.0 696.8L159.0 696.4L160.0 696.1L161.0 695.3L162.0 694.4L163.0 693.7L164.0 693.0L165.0 692.4L166.0 692.0L167.0 691.5L168.0 691.6L169.0 692.1L170.0 692.6L171.0 693.1L172.0 693.7L173.0 693.2L174.0 692.7L175.0 692.0L176.0 691.4L177.0 690.8L178.0 691.5L179.0 692.1L180.0 692.6L181.0 693.0L182.0 693.7L183.0 694.5L184.0 694.4L185.0 694.2L186.0 693.9L187.0 693.7L188.0 693.8L189.0 694.0L190.0 694.3L191.0 694.9L192.0 695.0L193.0 694.9L194.0 694.6L195.0 694.1L196.0 694.4L197.0 694.9L198.0 695.6L199.0 696.4L200.0 697.3L201.0 698.2L202.0 698.1L203.0 698.0L204.0 698.1L205.0 698.1L206.0 697.6L207.0 696.8L208.0 696.1L209.0 695.5L210.0 695.1L211.0 694.7L212.0 695.0L213.0 695.5L214.0 696.0L215.0 696.4L216.0 696.9L217.0 697.6L218.0 698.1L219.0 697.9L220.0 697.7L221.0 697.6L222.0 697.6L223.0 697.1L224.0 696.5L225.0 696.0L226.0 695.4L227.0 694.9L228.0 694.9L229.0 695.3L230.0 695.8L231.0 696.5L232.0 697.3L233.0 698.0L234.0 698.4L235.0 698.2L236.0 698.2L237.0 698.1L238.0 698.2L239.0 698.1L240.0 698.1L241.0 698.1L242.0 698.2L243.0 698.2L244.0 698.4L245.0 698.4L246.0 698.5L247.0 698.7L248.0 698.3L249.0 697.9L250.0 697.5L251.0 697.0L252.0 696.7L253.0 696.5L254.0 696.2L255.0 696.2L256.0 696.4L257.0 696.6L258.0 697.0L259.0 697.3L260.0 697.6L261.0 698.0L262.0 697.9L263.0 698.0L264.0 698.1L265.0 698.3L266.0 698.5L267.0 698.5L268.0 698.2L269.0 697.6L270.0 697.2L271.0 696.9L272.0 696.5L273.0 696.0L274.0 695.8L275.0 696.3L276.0 696.8L277.0 697.4L278.0 697.8L279.0 698.4L280.0 698.6L281.0 698.6L282.0 698.5L283.0 698.3L284.0 698.2L285.0 698.1L286.0 698.1L287.0 698.2L288.0 698.1L289.0 697.9L290.0 697.6L291.0 697.3L292.0 697.5L293.0 697.8L294.0 698.0L295.0 697.4L296.0 696.6L297.0 696.0L298.0 695.6L299.0 695.0L300.0 694.3L301.0 694.4L302.0 695.0L303.0 695.7L304.0 696.4L305.0 697.2L306.0 698.0L307.0 697.9L308.0 697.7L309.0 697.8L310.0 697.9L311.0 697.7L312.0 697.1L313.0 696.6L314.0 696.2L315.0 695.8L316.0 695.4L317.0 695.9L318.0 696.4L319.0 696.8L320.0 697.3L321.0 697.9L322.0 698.4L323.0 698.2L324.0 697.9L325.0 698.0L326.0 698.1L327.0 698.3L328.0 698.6L329.0 698.7L330.0 698.7L331.0 698.3L332.0 698.1L332.0 706.1L331.0 705.8L330.0 705.6L329.0 705.8L328.0 706.1L327.0 706.3L326.0 706.3L325.0 706.5L324.0 706.6L323.0 706.6L322.0 706.5L321.0 707.0L320.0 707.7L319.0 708.2L318.0 708.7L317.0 709.0L316.0 709.5L315.0 709.0L314.0 708.5L313.0 707.9L312.0 707.1L311.0 706.4L310.0 706.3L309.0 706.8L308.0 707.1L307.0 706.9L306.0 706.6L305.0 707.4L304.0 708.3L303.0 709.1L302.0 709.9L301.0 710.6L300.0 710.9L299.0 710.2L298.0 709.4L297.0 708.5L296.0 707.6L295.0 706.8L294.0 706.2L293.0 706.4L292.0 706.5L291.0 706.6L290.0 706.5L289.0 706.4L288.0 706.3L287.0 706.1L286.0 706.2L285.0 706.3L284.0 706.4L283.0 706.6L282.0 706.5L281.0 706.4L280.0 706.3L279.0 706.5L278.0 707.2L277.0 707.8L276.0 708.2L275.0 708.6L274.0 709.1L273.0 709.3L272.0 708.9L271.0 708.4L270.0 708.0L269.0 707.5L268.0 706.9L267.0 706.5L266.0 706.7L265.0 706.7L264.0 706.8L263.0 706.6L262.0 706.5L261.0 706.2L260.0 706.7L259.0 707.1L258.0 707.5L257.0 707.8L256.0 708.1L255.0 708.6L254.0 708.8L253.0 708.4L252.0 708.0L251.0 707.8L250.0 707.6L249.0 707.2L248.0 706.7L247.0 706.2L246.0 706.1L245.0 706.0L244.0 705.9L243.0 706.1L242.0 706.1L241.0 706.2L240.0 706.2L239.0 706.3L238.0 706.2L237.0 706.1L236.0 706.1L235.0 706.0L234.0 705.9L233.0 706.5L232.0 707.3L231.0 708.0L230.0 708.6L229.0 709.1L228.0 709.5L227.0 709.4L226.0 708.9L225.0 708.5L224.0 708.2L223.0 707.7L222.0 707.3L221.0 707.0L220.0 706.9L219.0 706.5L218.0 706.3L217.0 706.7L216.0 707.5L215.0 708.3L214.0 709.1L213.0 709.9L212.0 710.6L211.0 710.5L210.0 709.8L209.0 709.0L208.0 708.3L207.0 707.7L206.0 707.1L205.0 706.5L204.0 706.3L203.0 706.0L202.0 706.0L201.0 706.1L200.0 707.3L199.0 708.3L198.0 709.3L197.0 710.0L196.0 710.4L195.0 710.7L194.0 710.3L193.0 710.1L192.0 709.8L191.0 709.8L190.0 710.3L189.0 710.5L188.0 710.7L187.0 711.0L186.0 711.0L185.0 710.8L184.0 710.5L183.0 710.0L182.0 710.6L181.0 711.1L180.0 711.8L179.0 712.5L178.0 713.0L177.0 713.5L176.0 713.0L175.0 712.5L174.0 712.0L173.0 711.4L172.0 710.7L171.0 711.1L170.0 711.5L169.0 711.9L168.0 712.6L167.0 712.8L166.0 712.6L165.0 712.3L164.0 711.9L163.0 711.2L162.0 710.4L161.0 709.0L160.0 708.1L159.0 707.8L158.0 707.5L157.0 707.5L156.0 707.5L155.0 707.3L154.0 707.2L153.0 706.9L152.0 706.7L151.0 706.3L150.0 706.0L149.0 705.8L148.0 705.6L147.0 705.4L146.0 705.4L145.0 705.4L144.0 705.5L143.0 705.4L142.0 705.5L141.0 705.5L140.0 705.5L139.0 705.4L138.0 705.4L137.0 705.3L136.0 705.3L135.0 705.2L134.0 705.1L133.0 704.9L132.0 704.7L131.0 704.7L130.0 704.8L129.0 704.8L128.0 704.9L127.0 705.1L126.0 705.1L125.0 705.0L124.0 704.9L123.0 705.0L122.0 705.1L121.0 705.2L120.0 705.0L119.0 704.9L118.0 705.0L117.0 705.1L116.0 705.1L115.0 705.0L114.0 704.9L113.0 704.9L112.0 704.9L111.0 704.8L110.0 704.7L109.0 704.7L108.0 704.8L107.0 704.9L106.0 704.9L105.0 704.6L104.0 704.4L103.0 704.3L102.0 704.5L101.0 704.9L100.0 704.9L99.0 704.8L98.0 704.5L97.0 704.5L96.0 704.6L95.0 704.8L94.0 704.8L93.0 704.6L92.0 704.5L91.0 704.5L90.0 704.6L89.0 704.7L88.0 704.8L87.0 705.0L86.0 705.1L85.0 705.1L84.0 704.9L83.0 704.5L82.0 704.4L81.0 704.3L80.0 704.3L79.0 704.2L78.0 704.2L77.0 704.4L76.0 704.5L75.0 704.6L74.0 704.5L73.0 704.4L72.0 704.2L71.0 703.8L70.0 703.6L69.0 703.3L68.0 703.3L67.0 703.2L66.0 703.1Z"/><path d="M66.0 794.3L66.0 793.5L67.0 793.4L68.0 793.3L69.0 793.2L70.0 793.1L71.0 793.0L72.0 792.8L73.0 792.5L74.0 792.3L75.0 792.1L76.0 792.1L77.0 792.2L78.0 792.3L79.0 792.3L80.0 792.2L81.0 792.2L82.0 792.3L83.0 792.3L84.0 792.3L85.0 792.1L86.0 792.0L87.0 792.0L88.0 791.9L89.0 791.8L90.0 791.8L91.0 791.9L92.0 792.0L93.0 792.0L94.0 792.0L95.0 791.8L96.0 791.7L97.0 791.7L98.0 791.6L99.0 791.6L100.0 791.6L101.0 791.6L102.0 791.6L103.0 791.6L104.0 791.8L105.0 792.0L106.0 792.1L107.0 792.0L108.0 791.9L109.0 791.8L110.0 791.7L111.0 791.5L112.0 791.5L113.0 791.5L114.0 791.5L115.0 791.6L116.0 791.8L117.0 791.9L118.0 791.9L119.0 791.8L120.0 791.7L121.0 791.6L122.0 791.5L123.0 791.5L124.0 791.5L125.0 791.5L126.0 791.7L127.0 792.0L128.0 792.2L129.0 792.3L130.0 792.3L131.0 792.3L132.0 792.0L133.0 791.7L134.0 791.4L135.0 791.3L136.0 791.1L137.0 791.2L138.0 791.3L139.0 791.5L140.0 791.5L141.0 791.3L142.0 791.2L143.0 791.1L144.0 791.1L145.0 791.1L146.0 791.0L147.0 790.9L148.0 790.9L149.0 790.8L150.0 790.6L151.0 790.1L152.0 789.6L153.0 789.4L154.0 789.4L155.0 789.5L156.0 789.3L157.0 789.1L158.0 788.8L159.0 788.4L160.0 788.1L161.0 787.3L162.0 786.4L163.0 785.7L164.0 785.0L165.0 784.4L166.0 784.0L167.0 783.5L168.0 783.6L169.0 784.1L170.0 784.6L171.0 785.1L172.0 785.7L173.0 785.2L174.0 784.7L175.0 784.0L176.0 783.4L177.0 782.8L178.0 783.5L179.0 784.1L180.0 784.6L181.0 785.0L182.0 785.7L183.0 786.5L184.0 786.4L185.0 786.2L186.0 785.9L187.0 785.7L188.0 785.8L189.0 786.0L190.0 786.3L191.0 786.9L192.0 787.0L193.0 786.9L194.0 786.6L195.0 786.1L196.0 786.4L197.0 786.9L198.0 787.6L199.0 788.4L200.0 789.3L201.0 790.2L202.0 790.1L203.0 790.0L204.0 790.1L205.0 790.1L206.0 789.6L207.0 788.8L208.0 788.1L209.0 787.5L210.0 787.1L211.0 786.7L212.0 787.0L213.0 787.5L214.0 788.0L215.0 788.4L216.0 788.9L217.0 789.6L218.0 790.1L219.0 789.9L220.0 789.7L221.0 789.6L222.0 789.6L223.0 789.1L224.0 788.5L225.0 788.0L226.0 787.4L227.0 786.9L228.0 786.9L229.0 787.3L230.0 787.8L231.0 788.5L232.0 789.3L233.0 790.0L234.0 790.4L235.0 790.2L236.0 790.2L237.0 790.1L238.0 790.2L239.0 790.1L240.0 790.1L241.0 790.1L242.0 790.2L243.0 790.2L244.0 790.4L245.0 790.4L246.0 790.5L247.0 790.7L248.0 790.3L249.0 789.9L250.0 789.5L251.0 789.0L252.0 788.7L253.0 788.5L254.0 788.2L255.0 788.2L256.0 788.4L257.0 788.6L258.0 789.0L259.0 789.3L260.0 789.6L261.0 790.0L262.0 789.9L263.0 790.0L264.0 790.1L265.0 790.3L266.0 790.5L267.0 790.5L268.0 790.2L269.0 789.6L270.0 789.2L271.0 788.9L272.0 788.5L273.0 788.0L274.0 787.8L275.0 788.3L276.0 788.8L277.0 789.4L278.0 789.8L279.0 790.4L280.0 790.6L281.0 790.6L282.0 790.5L283.0 790.3L284.0 790.2L285.0 790.1L286.0 790.1L287.0 790.2L288.0 790.1L289.0 789.9L290.0 789.6L291.0 789.3L292.0 789.5L293.0 789.8L294.0 790.0L295.0 789.4L296.0 788.6L297.0 788.0L298.0 787.6L299.0 787.0L300.0 786.3L301.0 786.4L302.0 787.0L303.0 787.7L304.0 788.4L305.0 789.2L306.0 790.0L307.0 789.9L308.0 789.7L309.0 789.8L310.0 789.9L311.0 789.7L312.0 789.1L313.0 788.6L314.0 788.2L315.0 787.8L316.0 787.4L317.0 787.9L318.0 788.4L319.0 788.8L320.0 789.3L321.0 789.9L322.0 790.4L323.0 790.2L324.0 789.9L325.0 790.0L326.0 790.1L327.0 790.3L328.0 790.6L329.0 790.7L330.0 790.7L331.0 790.3L332.0 790.1L332.0 798.1L331.0 797.8L330.0 797.6L329.0 797.8L328.0 798.1L327.0 798.3L326.0 798.3L325.0 798.5L324.0 798.6L323.0 798.6L322.0 798.5L321.0 799.0L320.0 799.7L319.0 800.2L318.0 800.7L317.0 801.0L316.0 801.5L315.0 801.0L314.0 800.5L313.0 799.9L312.0 799.1L311.0 798.4L310.0 798.3L309.0 798.8L308.0 799.1L307.0 798.9L306.0 798.6L305.0 799.4L304.0 800.3L303.0 801.1L302.0 801.9L301.0 802.6L300.0 802.9L299.0 802.2L298.0 801.4L297.0 800.5L296.0 799.6L295.0 798.8L294.0 798.2L293.0 798.4L292.0 798.5L291.0 798.6L290.0 798.5L289.0 798.4L288.0 798.3L287.0 798.1L286.0 798.2L285.0 798.3L284.0 798.4L283.0 798.6L282.0 798.5L281.0 798.4L280.0 798.3L279.0 798.5L278.0 799.2L277.0 799.8L276.0 800.2L275.0 800.6L274.0 801.1L273.0 801.3L272.0 800.9L271.0 800.4L270.0 800.0L269.0 799.5L268.0 798.9L267.0 798.5L266.0 798.7L265.0 798.7L264.0 798.8L263.0 798.6L262.0 798.5L261.0 798.2L260.0 798.7L259.0 799.1L258.0 799.5L257.0 799.8L256.0 800.1L255.0 800.6L254.0 800.8L253.0 800.4L252.0 800.0L251.0 799.8L250.0 799.6L249.0 799.2L248.0 798.7L247.0 798.2L246.0 798.1L245.0 798.0L244.0 797.9L243.0 798.1L242.0 798.1L241.0 798.2L240.0 798.2L239.0 798.3L238.0 798.2L237.0 798.1L236.0 798.1L235.0 798.0L234.0 797.9L233.0 798.5L232.0 799.3L231.0 800.0L230.0 800.6L229.0 801.1L228.0 801.5L227.0 801.4L226.0 800.9L225.0 800.5L224.0 800.2L223.0 799.7L222.0 799.3L221.0 799.0L220.0 798.9L219.0 798.5L218.0 798.3L217.0 798.7L216.0 799.5L215.0 800.3L214.0 801.1L213.0 801.9L212.0 802.6L211.0 802.5L210.0 801.8L209.0 801.0L208.0 800.3L207.0 799.7L206.0 799.1L205.0 798.5L204.0 798.3L203.0 798.0L202.0 798.0L201.0 798.1L200.0 799.3L199.0 800.3L198.0 801.3L197.0 802.0L196.0 802.4L195.0 802.7L194.0 802.3L193.0 802.1L192.0 801.8L191.0 801.8L190.0 802.3L189.0 802.5L188.0 802.7L187.0 803.0L186.0 803.0L185.0 802.8L184.0 802.5L183.0 802.0L182.0 802.6L181.0 803.1L180.0 803.8L179.0 804.5L178.0 805.0L177.0 805.5L176.0 805.0L175.0 804.5L174.0 804.0L173.0 803.4L172.0 802.7L171.0 803.1L170.0 803.5L169.0 803.9L168.0 804.6L167.0 804.8L166.0 804.6L165.0 804.3L164.0 803.9L163.0 803.2L162.0 802.4L161.0 801.0L160.0 800.1L159.0 799.8L158.0 799.5L157.0 799.5L156.0 799.5L155.0 799.3L154.0 799.2L153.0 798.9L152.0 798.7L151.0 798.3L150.0 798.0L149.0 797.8L148.0 797.6L147.0 797.4L146.0 797.4L145.0 797.4L144.0 797.5L143.0 797.4L142.0 797.5L141.0 797.5L140.0 797.5L139.0 797.4L138.0 797.4L137.0 797.3L136.0 797.3L135.0 797.2L134.0 797.1L133.0 796.9L132.0 796.7L131.0 796.7L130.0 796.8L129.0 796.8L128.0 796.9L127.0 797.1L126.0 797.1L125.0 797.0L124.0 796.9L123.0 797.0L122.0 797.1L121.0 797.2L120.0 797.0L119.0 796.9L118.0 797.0L117.0 797.1L116.0 797.1L115.0 797.0L114.0 796.9L113.0 796.9L112.0 796.9L111.0 796.8L110.0 796.7L109.0 796.7L108.0 796.8L107.0 796.9L106.0 796.9L105.0 796.6L104.0 796.4L103.0 796.3L102.0 796.5L101.0 796.9L100.0 796.9L99.0 796.8L98.0 796.5L97.0 796.5L96.0 796.6L95.0 796.8L94.0 796.8L93.0 796.6L92.0 796.5L91.0 796.5L90.0 796.6L89.0 796.7L88.0 796.8L87.0 797.0L86.0 797.1L85.0 797.1L84.0 796.9L83.0 796.5L82.0 796.4L81.0 796.3L80.0 796.3L79.0 796.2L78.0 796.2L77.0 796.4L76.0 796.5L75.0 796.6L74.0 796.5L73.0 796.4L72.0 796.2L71.0 795.8L70.0 795.6L69.0 795.3L68.0 795.3L67.0 795.2L66.0 795.1Z"/><path d="M66.0 887.3L66.0 886.7L67.0 886.4L68.0 886.1L69.0 885.6L70.0 885.3L71.0 885.1L72.0 884.8L73.0 884.6L74.0 884.4L75.0 884.2L76.0 884.2L77.0 884.1L78.0 884.1L79.0 884.2L80.0 884.4L81.0 884.5L82.0 884.4L83.0 884.4L84.0 884.4L85.0 884.5L86.0 884.5L87.0 884.6L88.0 884.6L89.0 884.6L90.0 884.5L91.0 884.4L92.0 884.3L93.0 884.3L94.0 884.5L95.0 884.5L96.0 884.6L97.0 884.7L98.0 884.8L99.0 884.8L100.0 884.8L101.0 884.9L102.0 884.8L103.0 884.7L104.0 884.5L105.0 884.3L106.0 884.4L107.0 884.3L108.0 884.3L109.0 884.4L110.0 884.6L111.0 884.7L112.0 884.8L113.0 884.9L114.0 885.0L115.0 884.9L116.0 884.9L117.0 884.9L118.0 884.9L119.0 884.8L120.0 884.7L121.0 884.5L122.0 884.2L123.0 884.0L124.0 884.0L125.0 884.1L126.0 884.4L127.0 884.5L128.0 884.6L129.0 884.7L130.0 884.9L131.0 885.1L132.0 885.1L133.0 885.1L134.0 885.0L135.0 885.0L136.0 885.0L137.0 885.2L138.0 885.3L139.0 885.3L140.0 885.1L141.0 885.1L142.0 885.0L143.0 885.1L144.0 884.8L145.0 884.5L146.0 884.3L147.0 884.5L148.0 884.8L149.0 885.1L150.0 885.2L151.0 885.2L152.0 885.1L153.0 885.1L154.0 885.1L155.0 885.1L156.0 885.0L157.0 884.9L158.0 884.8L159.0 884.8L160.0 884.8L161.0 884.9L162.0 885.0L163.0 885.1L164.0 885.1L165.0 885.0L166.0 885.0L167.0 885.0L168.0 885.0L169.0 885.0L170.0 885.0L171.0 885.0L172.0 885.1L173.0 885.0L174.0 884.8L175.0 884.6L176.0 884.5L177.0 884.4L178.0 884.6L179.0 884.7L180.0 884.8L181.0 885.0L182.0 884.9L183.0 884.5L184.0 884.2L185.0 883.9L186.0 883.7L187.0 883.6L188.0 883.9L189.0 884.1L190.0 884.2L191.0 884.4L192.0 884.3L193.0 884.2L194.0 884.1L195.0 884.0L196.0 884.2L197.0 884.4L198.0 884.6L199.0 884.9L200.0 885.1L201.0 885.0L202.0 884.9L203.0 884.8L204.0 884.9L205.0 884.9L206.0 885.0L207.0 885.0L208.0 885.0L209.0 884.8L210.0 884.7L211.0 884.6L212.0 883.9L213.0 883.1L214.0 882.4L215.0 881.8L216.0 881.2L217.0 881.4L218.0 882.0L219.0 882.7L220.0 883.4L221.0 883.0L222.0 882.6L223.0 882.5L224.0 883.0L225.0 883.5L226.0 884.1L227.0 884.6L228.0 884.5L229.0 884.2L230.0 883.8L231.0 883.6L232.0 883.3L233.0 883.7L234.0 884.0L235.0 884.2L236.0 884.4L237.0 884.8L238.0 884.8L239.0 884.8L240.0 884.7L241.0 884.8L242.0 885.0L243.0 885.2L244.0 885.2L245.0 885.0L246.0 884.7L247.0 884.5L248.0 884.4L249.0 884.4L250.0 884.5L251.0 884.6L252.0 884.8L253.0 884.9L254.0 884.9L255.0 884.9L256.0 884.8L257.0 884.8L258.0 884.9L259.0 884.9L260.0 884.9L261.0 884.9L262.0 884.8L263.0 884.8L264.0 884.7L265.0 884.6L266.0 884.5L267.0 884.4L268.0 884.5L269.0 884.6L270.0 884.7L271.0 884.7L272.0 884.7L273.0 884.7L274.0 884.8L275.0 884.7L276.0 884.7L277.0 884.6L278.0 884.5L279.0 884.5L280.0 884.5L281.0 884.6L282.0 884.7L283.0 884.8L284.0 884.9L285.0 884.9L286.0 884.9L287.0 884.8L288.0 884.7L289.0 884.7L290.0 884.8L291.0 884.8L292.0 884.9L293.0 885.0L294.0 885.0L295.0 884.9L296.0 884.8L297.0 884.8L298.0 884.8L299.0 884.8L300.0 884.7L301.0 884.7L302.0 884.7L303.0 884.8L304.0 884.9L305.0 884.8L306.0 884.8L307.0 884.8L308.0 884.9L309.0 885.0L310.0 885.1L311.0 885.0L312.0 885.0L313.0 884.3L314.0 883.7L315.0 883.1L316.0 882.5L317.0 882.0L318.0 881.6L319.0 881.9L320.0 882.4L321.0 882.8L322.0 883.3L323.0 883.9L324.0 884.4L325.0 884.3L326.0 884.3L327.0 884.2L328.0 884.4L329.0 884.4L330.0 884.4L331.0 884.5L332.0 884.2L332.0 889.9L331.0 889.8L330.0 890.2L329.0 890.6L328.0 890.9L327.0 891.0L326.0 890.7L325.0 890.4L324.0 890.1L323.0 890.7L322.0 891.3L321.0 891.9L320.0 892.3L319.0 892.7L318.0 893.0L317.0 892.5L316.0 892.1L315.0 891.5L314.0 891.1L313.0 890.6L312.0 890.0L311.0 890.0L310.0 889.7L309.0 889.6L308.0 889.5L307.0 889.6L306.0 889.6L305.0 889.6L304.0 889.6L303.0 889.6L302.0 889.6L301.0 889.6L300.0 889.6L299.0 889.6L298.0 889.6L297.0 889.6L296.0 889.5L295.0 889.5L294.0 889.5L293.0 889.5L292.0 889.6L291.0 889.7L290.0 889.8L289.0 890.0L288.0 890.0L287.0 890.0L286.0 889.9L285.0 889.9L284.0 890.0L283.0 890.0L282.0 889.9L281.0 889.7L280.0 889.6L279.0 889.5L278.0 889.5L277.0 889.6L276.0 889.7L275.0 889.9L274.0 889.9L273.0 889.9L272.0 889.7L271.0 889.7L270.0 889.7L269.0 889.8L268.0 889.9L267.0 889.9L266.0 889.7L265.0 889.5L264.0 889.4L263.0 889.5L262.0 889.7L261.0 889.8L260.0 890.0L259.0 890.1L258.0 890.2L257.0 890.1L256.0 890.1L255.0 889.9L254.0 889.7L253.0 889.6L252.0 889.7L251.0 889.8L250.0 889.8L249.0 889.8L248.0 889.7L247.0 889.9L246.0 890.0L245.0 890.2L244.0 890.2L243.0 890.1L242.0 889.8L241.0 889.6L240.0 889.7L239.0 889.8L238.0 889.7L237.0 889.7L236.0 890.0L235.0 890.4L234.0 890.7L233.0 890.9L232.0 890.9L231.0 890.6L230.0 890.3L229.0 890.1L228.0 889.9L227.0 890.0L226.0 890.5L225.0 890.9L224.0 891.4L223.0 891.9L222.0 892.0L221.0 891.6L220.0 891.1L219.0 891.7L218.0 892.2L217.0 892.9L216.0 893.3L215.0 892.9L214.0 892.3L213.0 891.6L212.0 890.9L211.0 890.3L210.0 890.2L209.0 890.1L208.0 889.8L207.0 889.6L206.0 889.6L205.0 889.7L204.0 889.8L203.0 889.8L202.0 889.8L201.0 889.7L200.0 889.7L199.0 889.8L198.0 890.0L197.0 890.1L196.0 890.3L195.0 890.5L194.0 890.5L193.0 890.5L192.0 890.5L191.0 890.5L190.0 890.7L189.0 890.9L188.0 891.1L187.0 891.3L186.0 891.1L185.0 890.6L184.0 890.1L183.0 889.7L182.0 889.5L181.0 889.6L180.0 889.9L179.0 890.0L178.0 890.0L177.0 890.1L176.0 890.1L175.0 890.0L174.0 889.8L173.0 889.4L172.0 889.3L171.0 889.3L170.0 889.5L169.0 889.5L168.0 889.6L167.0 889.5L166.0 889.5L165.0 889.4L164.0 889.4L163.0 889.5L162.0 889.6L161.0 889.7L160.0 889.7L159.0 889.5L158.0 889.3L157.0 889.2L156.0 889.3L155.0 889.5L154.0 889.7L153.0 889.7L152.0 889.7L151.0 889.5L150.0 889.4L149.0 889.4L148.0 889.5L147.0 889.8L146.0 890.1L145.0 889.8L144.0 889.5L143.0 889.3L142.0 889.1L141.0 889.1L140.0 889.0L139.0 889.0L138.0 888.9L137.0 889.0L136.0 889.3L135.0 889.4L134.0 889.5L133.0 889.4L132.0 889.5L131.0 889.7L130.0 890.1L129.0 890.3L128.0 890.5L127.0 890.4L126.0 890.4L125.0 890.3L124.0 890.5L123.0 890.5L122.0 890.5L121.0 890.5L120.0 890.4L119.0 890.2L118.0 889.9L117.0 889.8L116.0 889.9L115.0 890.0L114.0 890.1L113.0 890.1L112.0 890.1L111.0 890.1L110.0 890.2L109.0 890.1L108.0 890.1L107.0 890.0L106.0 890.1L105.0 890.1L104.0 890.2L103.0 890.0L102.0 889.8L101.0 889.6L100.0 889.5L99.0 889.5L98.0 889.7L97.0 889.9L96.0 890.1L95.0 890.2L94.0 890.4L93.0 890.4L92.0 890.5L91.0 890.3L90.0 890.2L89.0 890.0L88.0 889.9L87.0 889.8L86.0 889.7L85.0 889.7L84.0 889.8L83.0 890.1L82.0 890.1L81.0 890.1L80.0 890.2L79.0 890.3L78.0 890.4L77.0 890.3L76.0 890.1L75.0 889.9L74.0 889.9L73.0 890.0L72.0 890.0L71.0 889.6L70.0 889.2L69.0 888.9L68.0 888.6L67.0 888.2L66.0 887.9Z"/><path d="M66.0 979.3L66.0 973.7L67.0 972.4L68.0 970.9L69.0 969.2L70.0 968.6L71.0 970.3L72.0 972.1L73.0 973.8L74.0 975.2L75.0 974.7L76.0 973.7L77.0 972.4L78.0 971.1L79.0 969.5L80.0 968.0L81.0 969.5L82.0 971.1L83.0 972.6L84.0 973.9L85.0 975.1L86.0 974.1L87.0 972.3L88.0 970.4L89.0 968.3L90.0 967.8L91.0 969.9L92.0 969.9L93.0 968.1L94.0 970.0L95.0 971.9L96.0 973.7L97.0 975.4L98.0 975.2L99.0 973.3L100.0 971.0L101.0 968.7L102.0 969.6L103.0 971.8L104.0 971.9L105.0 970.0L106.0 970.4L107.0 972.4L108.0 974.1L109.0 975.5L110.0 974.7L111.0 973.8L112.0 972.7L113.0 972.8L114.0 973.7L115.0 974.7L116.0 975.8L117.0 976.4L118.0 976.2L119.0 975.0L120.0 973.7L121.0 972.3L122.0 970.7L123.0 970.2L124.0 971.9L125.0 973.4L126.0 974.9L127.0 976.1L128.0 976.8L129.0 976.1L130.0 974.3L131.0 972.4L132.0 970.4L133.0 968.4L134.0 970.6L135.0 972.6L136.0 974.5L137.0 974.2L138.0 972.7L139.0 971.2L140.0 972.2L141.0 973.6L142.0 971.8L143.0 969.8L144.0 967.7L145.0 969.7L146.0 971.6L147.0 973.4L148.0 974.8L149.0 975.9L150.0 976.1L151.0 976.2L152.0 976.3L153.0 976.0L154.0 975.0L155.0 973.7L156.0 972.2L157.0 970.7L158.0 970.0L159.0 971.7L160.0 973.3L161.0 974.7L162.0 975.9L163.0 975.8L164.0 975.4L165.0 975.2L166.0 975.5L167.0 975.7L168.0 975.4L169.0 974.7L170.0 973.9L171.0 973.1L172.0 973.1L173.0 973.9L174.0 974.5L175.0 975.2L176.0 975.8L177.0 976.3L178.0 976.3L179.0 976.2L180.0 975.0L181.0 973.8L182.0 972.3L183.0 970.9L184.0 969.0L185.0 967.2L186.0 968.0L187.0 969.8L188.0 969.2L189.0 968.7L190.0 970.3L191.0 972.0L192.0 973.7L193.0 975.1L194.0 976.4L195.0 977.4L196.0 977.6L197.0 977.5L198.0 977.3L199.0 977.0L200.0 976.9L201.0 976.8L202.0 976.8L203.0 976.8L204.0 976.8L205.0 976.0L206.0 974.9L207.0 973.3L208.0 971.7L209.0 970.9L210.0 972.0L211.0 972.4L212.0 970.7L213.0 969.0L214.0 968.8L215.0 970.7L216.0 972.4L217.0 974.0L218.0 974.1L219.0 972.8L220.0 971.3L221.0 969.8L222.0 968.1L223.0 968.0L224.0 969.6L225.0 971.3L226.0 973.0L227.0 974.5L228.0 975.6L229.0 974.7L230.0 973.0L231.0 971.1L232.0 969.1L233.0 970.4L234.0 972.4L235.0 974.3L236.0 973.2L237.0 971.1L238.0 968.7L239.0 966.3L240.0 968.5L241.0 970.9L242.0 973.1L243.0 975.0L244.0 977.0L245.0 977.1L246.0 976.9L247.0 977.0L248.0 977.0L249.0 977.0L250.0 977.1L251.0 976.8L252.0 975.9L253.0 974.7L254.0 973.4L255.0 972.4L256.0 971.3L257.0 970.2L258.0 971.4L259.0 972.4L260.0 973.6L261.0 974.7L262.0 975.8L263.0 976.5L264.0 975.5L265.0 974.1L266.0 972.9L267.0 971.5L268.0 970.0L269.0 968.5L270.0 969.0L271.0 970.5L272.0 971.8L273.0 973.1L274.0 974.4L275.0 975.7L276.0 976.4L277.0 976.4L278.0 976.4L279.0 975.4L280.0 974.1L281.0 972.4L282.0 970.4L283.0 968.4L284.0 969.9L285.0 971.7L286.0 973.4L287.0 974.5L288.0 973.2L289.0 971.9L290.0 970.8L291.0 972.2L292.0 973.4L293.0 974.2L294.0 974.7L295.0 974.8L296.0 974.6L297.0 974.5L298.0 974.4L299.0 974.3L300.0 974.2L301.0 974.4L302.0 974.4L303.0 974.6L304.0 974.7L305.0 974.7L306.0 974.7L307.0 974.7L308.0 974.8L309.0 974.7L310.0 974.7L311.0 974.6L312.0 974.5L313.0 973.8L314.0 972.6L315.0 971.2L316.0 969.6L317.0 968.0L318.0 967.9L319.0 969.8L320.0 971.5L321.0 973.1L322.0 973.7L323.0 972.8L324.0 971.7L325.0 970.7L326.0 971.3L327.0 972.1L328.0 973.0L329.0 973.5L330.0 973.2L331.0 973.2L332.0 973.7L332.0 983.8L331.0 984.6L330.0 985.8L329.0 986.9L328.0 987.9L327.0 988.7L326.0 987.7L325.0 986.7L324.0 985.8L323.0 985.2L322.0 986.3L321.0 987.5L320.0 988.9L319.0 990.4L318.0 989.1L317.0 987.5L316.0 986.0L315.0 984.6L314.0 983.8L313.0 985.1L312.0 986.6L311.0 988.3L310.0 990.0L309.0 991.0L308.0 989.3L307.0 987.7L306.0 986.0L305.0 985.4L304.0 986.2L303.0 987.1L302.0 987.2L301.0 986.3L300.0 985.3L299.0 984.4L298.0 983.7L297.0 983.2L296.0 983.0L295.0 982.6L294.0 982.3L293.0 982.1L292.0 982.1L291.0 982.2L290.0 982.5L289.0 984.0L288.0 985.8L287.0 987.7L286.0 989.7L285.0 991.1L284.0 988.9L283.0 986.9L282.0 984.9L281.0 983.1L280.0 981.7L279.0 981.7L278.0 981.7L277.0 981.8L276.0 981.9L275.0 982.0L274.0 982.0L273.0 982.6L272.0 983.5L271.0 984.8L270.0 986.3L269.0 987.8L268.0 989.2L267.0 990.0L266.0 988.5L265.0 987.1L264.0 985.7L263.0 984.4L262.0 984.5L261.0 985.6L260.0 986.7L259.0 987.9L258.0 988.2L257.0 986.8L256.0 985.5L255.0 984.4L254.0 983.5L253.0 982.3L252.0 981.3L251.0 981.4L250.0 981.4L249.0 981.3L248.0 981.1L247.0 981.0L246.0 981.0L245.0 981.1L244.0 981.3L243.0 983.1L242.0 984.5L241.0 986.0L240.0 987.6L239.0 989.2L238.0 987.6L237.0 986.0L236.0 984.5L235.0 984.6L234.0 986.6L233.0 988.7L232.0 990.1L231.0 987.7L230.0 985.6L229.0 983.8L228.0 982.7L227.0 983.6L226.0 984.7L225.0 986.0L224.0 987.4L223.0 986.4L222.0 985.1L221.0 984.0L220.0 982.9L219.0 982.2L218.0 982.1L217.0 983.1L216.0 984.3L215.0 985.7L214.0 987.1L213.0 988.8L212.0 990.6L211.0 990.7L210.0 989.0L209.0 987.3L208.0 985.6L207.0 983.9L206.0 982.5L205.0 981.7L204.0 981.6L203.0 981.4L202.0 981.2L201.0 981.3L200.0 981.4L199.0 981.5L198.0 981.4L197.0 981.3L196.0 981.2L195.0 981.9L194.0 983.1L193.0 984.4L192.0 985.7L191.0 987.1L190.0 986.6L189.0 985.4L188.0 984.3L187.0 983.1L186.0 982.3L185.0 983.6L184.0 985.4L183.0 987.4L182.0 989.7L181.0 991.6L180.0 989.5L179.0 987.5L178.0 985.3L177.0 983.5L176.0 982.1L175.0 982.5L174.0 983.9L173.0 985.4L172.0 987.0L171.0 988.7L170.0 990.1L169.0 988.2L168.0 986.3L167.0 984.7L166.0 983.3L165.0 982.5L164.0 982.8L163.0 984.0L162.0 985.3L161.0 986.8L160.0 988.7L159.0 990.5L158.0 988.7L157.0 987.0L156.0 985.3L155.0 983.7L154.0 982.4L153.0 982.3L152.0 982.3L151.0 982.2L150.0 982.1L149.0 982.3L148.0 983.6L147.0 985.3L146.0 987.2L145.0 989.4L144.0 991.5L143.0 989.4L142.0 987.4L141.0 985.7L140.0 984.1L139.0 982.7L138.0 982.5L137.0 982.7L136.0 983.5L135.0 984.4L134.0 985.7L133.0 987.4L132.0 988.3L131.0 987.0L130.0 985.5L129.0 984.2L128.0 983.0L127.0 983.0L126.0 984.5L125.0 986.3L124.0 988.5L123.0 990.9L122.0 990.3L121.0 988.3L120.0 986.2L119.0 984.4L118.0 982.8L117.0 982.3L116.0 983.1L115.0 984.4L114.0 985.9L113.0 987.6L112.0 989.6L111.0 989.2L110.0 987.3L109.0 985.7L108.0 984.2L107.0 982.9L106.0 982.9L105.0 984.2L104.0 985.9L103.0 987.6L102.0 989.4L101.0 990.2L100.0 988.1L99.0 986.0L98.0 984.1L97.0 982.7L96.0 982.0L95.0 982.8L94.0 984.4L93.0 986.1L92.0 988.2L91.0 990.5L90.0 991.5L89.0 989.1L88.0 986.9L87.0 984.9L86.0 984.1L85.0 985.6L84.0 987.3L83.0 989.2L82.0 991.1L81.0 991.6L80.0 989.5L79.0 987.8L78.0 986.4L77.0 985.1L76.0 984.0L75.0 983.2L74.0 984.1L73.0 985.7L72.0 987.4L71.0 989.1L70.0 990.9L69.0 990.4L68.0 988.6L67.0 986.8L66.0 985.1Z"/></g></svg>
<div class="ab" style="left:339px;top:197px;width:678px;height:818px;background:#444"></div>
<div class="ab" style="left:339px;top:78px;width:678px;height:38.4px;background:#333"></div><div class="ab" style="left:339px;top:116.4px;width:678px;height:80.6px;background:#333"></div><div class="ab" style="left:339.0px;top:117px;width:79.4px;height:80px;background:#465f80"></div><div class="ab" style="left:424.8px;top:117px;width:79.4px;height:80px;background:#3d716c"></div><div class="ab" style="left:510.5px;top:117px;width:79.4px;height:80px;background:#5b6e3b"></div><div class="ab" style="left:596.2px;top:117px;width:79.4px;height:80px;background:#d4913f"></div><div class="ab" style="left:682.0px;top:117px;width:79.4px;height:80px;background:#845155"></div><div class="ab" style="left:767.8px;top:117px;width:79.4px;height:80px;background:#765a69"></div><div class="ab" style="left:853.5px;top:117px;width:79.4px;height:80px;background:#6a5a7f"></div><div class="ab" style="left:939.2px;top:117px;width:79.4px;height:80px;background:#53557a"></div><svg class="ab" style="left:354px;top:90px" width="15" height="15" viewBox="0 0 15 15"><rect x="0.9" y="0.9" width="13.3" height="13.3" rx="0.9" fill="none" stroke="#c9c9c9" stroke-width="1.6"/><g fill="#c9c9c9"><rect x="3.3" y="3.6" width="1.6" height="1.5"/><rect x="6" y="3.6" width="5.6" height="1.5"/><rect x="3.3" y="6.8" width="1.6" height="1.5"/><rect x="6" y="6.8" width="5.6" height="1.5"/><rect x="3.3" y="10" width="1.6" height="1.5"/><rect x="6" y="10" width="5.6" height="1.5"/></g></svg><div class="ab nav" style="left:376.8px;top:90px;color:#cfcfcf">Info</div><svg class="ab" style="left:426px;top:91px" width="19" height="14" viewBox="0 0 19 14"><path d="M0.5 7 L3.5 7 L4.6 6 L5.5 8.2 L6.5 3.2 L7.5 11.2 L8.5 0.8 L9.5 13 L10.5 2.5 L11.5 10.5 L12.4 5.2 L13.3 8.6 L14.2 6.3 L15 7.8 L16 6.6 L17 7.2 L18.5 7" fill="none" stroke="#6fc52a" stroke-width="1.3" stroke-linejoin="round"/></svg><div class="ab nav" style="left:451.9px;top:90px;color:#72c72c">Sonidos</div><svg class="ab" style="left:527px;top:89px" width="18" height="17" viewBox="0 0 18 17"><path d="M0.5 2.5 L5.5 0.8 L11.5 2.8 L17.3 1 L17.3 14.5 L11.5 16.3 L5.5 14.3 L0.5 16 Z" fill="#c9c9c9"/><path d="M6.6 2.6 L6.6 13.6 L10.4 14.8 L10.4 4 Z" fill="#333"/></svg><div class="ab nav" style="left:551.6px;top:90px;color:#cfcfcf">Mapa</div><svg class="ab" style="left:611px;top:89px" width="18" height="18" viewBox="0 0 18 18"><circle cx="8.8" cy="8.6" r="7.6" fill="none" stroke="#c9c9c9" stroke-width="1.5"/><path d="M6.8 5.4 L12 8.6 L6.8 11.8Z" fill="#c9c9c9"/></svg><div class="ab nav" style="left:636.5px;top:90px;color:#cfcfcf">Tocar</div><div class="ab nav" style="left:909.4px;top:90.2px;color:#f2f2f2;font-weight:bold;font-size:12.2px">ES</div><div class="ab nav" style="left:938.5px;top:90.2px;color:#6a6a6a;font-size:12.7px">EN</div><svg class="ab" style="left:968px;top:88px" width="19" height="19" viewBox="0 0 19 19"><circle cx="9.5" cy="9.5" r="7.4" fill="none" stroke="#6fc52a" stroke-width="1.4"/><path d="M6.5 9.8 L8.6 11.8 L12.6 7.6" fill="none" stroke="#6fc52a" stroke-width="1.4"/></svg><svg class="ab" style="left:993px;top:88px" width="20" height="20" viewBox="0 0 20 20"><circle cx="10" cy="9.5" r="8" fill="none" stroke="#8a8a8a" stroke-width="1.3"/><circle cx="10" cy="7.2" r="2.6" fill="none" stroke="#8a8a8a" stroke-width="1.3"/><path d="M4.3 15 Q10 10.5 15.7 15" fill="none" stroke="#8a8a8a" stroke-width="1.3"/></svg><div class="ab" style="left:352px;top:210px;font-size:20.8px;color:#dc963e;-webkit-text-stroke:0.25px #dc963e">Pista-4</div><div class="ab pill" style="left:352.2px;top:248px;width:158px;height:25.8px;background:#565656"></div><div class="ab" style="left:352.4px;top:248px;width:26px;height:26px;border-radius:13px;background:#535353"></div><svg class="ab" style="left:357px;top:253px" width="16" height="16" viewBox="0 0 16 16"><rect x="1" y="1" width="13.5" height="13.5" rx="1.3" fill="none" stroke="#c8c8c8" stroke-width="1.3"/><g fill="#c8c8c8"><rect x="3.5" y="3.8" width="1.4" height="1.3"/><rect x="6" y="3.8" width="6" height="1.3"/><rect x="3.5" y="7" width="1.4" height="1.3"/><rect x="6" y="7" width="6" height="1.3"/><rect x="3.5" y="10.2" width="1.4" height="1.3"/><rect x="6" y="10.2" width="6" height="1.3"/></g></svg><div class="ab btxt" style="left:383.5px;top:253px">Editar info de pista</div><div class="ab" style="left:352px;top:301.2px;font-size:15px;color:#dc963e">Sonidos</div><div class="ab pill" style="left:352.4px;top:334px;width:85.5px;height:26.2px;background:#c98a3d"></div><div class="ab" style="left:352.4px;top:334px;width:26px;height:26.2px;border-radius:13px;background:#c2853b"></div><svg class="ab" style="left:357px;top:338px" width="16" height="18" viewBox="0 0 16 18"><rect x="5.5" y="1" width="5" height="10" rx="2.5" fill="#e8d2b0"/><path d="M3 8 Q3 13.5 8 13.5 Q13 13.5 13 8" fill="none" stroke="#e8d2b0" stroke-width="1.3"/><rect x="7.4" y="13.5" width="1.3" height="3" fill="#e8d2b0"/></svg><div class="ab btxt" style="left:383.5px;top:340px;color:#f2e6d6">Grabar</div><div class="ab pill" style="left:444.3px;top:334px;width:76.3px;height:26.2px;background:#565656"></div><svg class="ab" style="left:447px;top:338px" width="22" height="18" viewBox="0 0 22 18"><path d="M5.5 14.5 Q1.2 14.5 1.2 10.6 Q1.2 7 5 6.8 Q6 2.2 10.8 2.2 Q15.8 2.2 16.6 7 Q20.6 7.2 20.6 10.8 Q20.6 14.5 16.5 14.5" fill="none" stroke="#cfcfcf" stroke-width="1.3"/><path d="M11 15.5 L11 8.5 M8.2 11 L11 8.2 L13.8 11" fill="none" stroke="#cfcfcf" stroke-width="1.4"/></svg><div class="ab btxt" style="left:476.5px;top:340px">Subir</div><div class="ab pill" style="left:533.3px;top:334px;width:96.3px;height:26.2px;background:#565656"></div><div class="ab" style="left:533.3px;top:334px;width:26px;height:26.2px;border-radius:13px;background:#535353"></div><svg class="ab" style="left:538px;top:339px" width="17" height="17" viewBox="0 0 17 17"><rect x="0.8" y="0.8" width="15" height="15" rx="1.5" fill="none" stroke="#cfcfcf" stroke-width="1.5"/><path d="M1 10 L5 10 Q5.5 12.5 8.3 12.5 Q11 12.5 11.5 10 L16 10 L16 15.8 L1 15.8Z" fill="#cfcfcf"/></svg><div class="ab btxt" style="left:565.1px;top:340px">Importar</div><div class="ab" style="left:352px;top:372.9px;width:654.4px;height:51px;background:#d4913f"></div><div class="ab" style="left:352px;top:372.9px;width:45px;height:51px;background:#8a6a3e"></div><svg class="ab" style="left:366px;top:391.9px" width="17" height="13" viewBox="0 0 17 13"><g fill="#d9c7ae"><rect x="1" y="1" width="15" height="1.3"/><rect x="1" y="4.1" width="15" height="1.3"/><rect x="1" y="7.2" width="15" height="1.3"/><rect x="1" y="10.3" width="15" height="1.3"/></g></svg><svg class="ab" style="left:397px;top:372.9px" width="51" height="51"><use href="#t-dark" width="51" height="51"/></svg><svg class="ab" style="left:402.4px;top:378.6px" width="40" height="40" viewBox="0 0 40 40"><circle cx="20" cy="20" r="13.9" fill="none" stroke="#d4913f" stroke-width="2.9"/><path d="M16.50 13.00 L26.10 20 L16.50 27.00Z" fill="#d4913f"/></svg><div class="ab it2" style="left:461px;top:374.4px">R.AMAYA Y EL BOBOTE CHICO (128 kbps).mp3</div><svg class="ab" style="left:973px;top:384.80px" width="28" height="28" viewBox="0 0 28 28"><circle cx="14.1" cy="13.5" r="12.8" fill="#3c3c3c"/><path d="M15.3 19.2 L15.3 8.3 L14.6 8.3 Q13.6 10 11.3 10.6 L11.3 12.3 Q12.9 12 13.3 11.4 L13.3 19.2Z" fill="#f0f0f0"/></svg><div class="ab" style="left:352px;top:427.3px;width:654.4px;height:51px;background:#d4913f"></div><div class="ab" style="left:352px;top:427.3px;width:45px;height:51px;background:#8a6a3e"></div><svg class="ab" style="left:366px;top:446.3px" width="17" height="13" viewBox="0 0 17 13"><g fill="#d9c7ae"><rect x="1" y="1" width="15" height="1.3"/><rect x="1" y="4.1" width="15" height="1.3"/><rect x="1" y="7.2" width="15" height="1.3"/><rect x="1" y="10.3" width="15" height="1.3"/></g></svg><svg class="ab" style="left:397px;top:427.3px" width="51" height="51"><use href="#t-ban" width="51" height="51"/></svg><svg class="ab" style="left:402.4px;top:433.0px" width="40" height="40" viewBox="0 0 40 40"><circle cx="20" cy="20" r="13.9" fill="none" stroke="#d4913f" stroke-width="2.9"/><path d="M16.50 13.00 L26.10 20 L16.50 27.00Z" fill="#d4913f"/></svg><div class="ab it2" style="left:461px;top:428.8px">.</div><svg class="ab" style="left:973px;top:439.20px" width="28" height="28" viewBox="0 0 28 28"><circle cx="14.1" cy="13.5" r="12.8" fill="#3c3c3c"/><path d="M15.3 19.2 L15.3 8.3 L14.6 8.3 Q13.6 10 11.3 10.6 L11.3 12.3 Q12.9 12 13.3 11.4 L13.3 19.2Z" fill="#f0f0f0"/></svg><svg class="ab" style="left:0;top:0" width="1017" height="1015" viewBox="0 0 1017 1015"><g fill="#efefef"><path d="M461.0 407.0L461.0 406.2L462.1 405.8L463.2 405.5L464.3 405.1L465.4 404.7L466.5 404.4L467.6 404.0L468.7 403.5L469.8 403.2L470.9 402.9L472.0 402.9L473.1 402.9L474.2 402.8L475.3 402.8L476.4 402.7L477.5 402.4L478.6 402.2L479.7 402.2L480.8 402.2L481.9 402.3L483.0 402.5L484.1 402.7L485.2 402.8L486.3 402.8L487.4 402.8L488.5 402.6L489.6 402.7L490.7 402.8L491.8 402.9L492.9 403.0L494.0 403.0L495.1 403.0L496.2 403.0L497.3 403.1L498.4 403.2L499.5 403.6L500.6 403.8L501.7 403.9L502.8 403.9L503.9 403.9L505.0 403.7L506.1 403.6L507.2 403.6L508.3 403.5L509.4 403.5L510.5 403.4L511.6 403.5L512.7 403.4L513.8 403.5L514.9 403.4L516.0 403.4L517.1 403.4L518.2 403.5L519.3 403.6L520.5 403.7L521.6 403.8L522.7 403.8L523.8 403.6L524.9 403.5L526.0 403.4L527.1 403.2L528.2 403.2L529.3 403.2L530.4 403.3L531.5 403.3L532.6 403.3L533.7 403.3L534.8 403.3L535.9 403.3L537.0 403.4L538.1 403.4L539.2 403.4L540.3 403.4L541.4 403.3L542.5 403.4L543.6 403.5L544.7 403.6L545.8 403.4L546.9 403.3L548.0 403.2L549.1 402.9L550.2 402.6L551.3 402.5L552.4 402.3L553.5 402.0L554.6 402.2L555.7 402.4L556.8 402.5L557.9 402.6L559.0 402.9L560.1 403.1L561.2 403.3L562.3 403.5L563.4 403.6L564.5 403.4L565.6 403.3L566.7 403.3L567.8 403.3L568.9 403.4L570.0 403.5L571.1 403.3L572.2 403.1L573.3 402.9L574.4 402.6L575.5 402.4L576.6 402.2L577.7 402.2L578.8 402.2L579.9 402.4L581.0 402.7L582.1 402.8L583.2 402.9L584.3 403.0L585.4 403.0L586.5 403.2L587.6 403.4L588.7 403.6L589.8 403.6L590.9 403.6L592.0 403.5L593.1 403.3L594.2 403.2L595.3 403.2L596.4 403.2L597.5 403.3L598.6 403.4L599.7 403.4L600.8 403.5L601.9 403.4L603.0 403.4L604.1 403.4L605.2 403.3L606.3 403.4L607.4 403.4L608.5 403.5L609.6 403.4L610.7 403.3L611.8 403.2L612.9 403.2L614.0 403.1L615.1 403.1L616.2 403.1L617.3 403.1L618.4 403.1L619.5 403.1L620.6 403.0L621.7 403.0L622.8 403.1L623.9 403.1L625.0 403.2L626.1 402.9L627.2 402.4L628.3 402.1L629.4 401.8L630.5 401.5L631.6 401.2L632.7 401.0L633.8 400.7L634.9 400.7L636.0 400.9L637.2 401.3L638.3 401.6L639.4 402.0L640.5 402.5L641.6 403.0L642.7 403.4L643.8 403.9L644.9 403.9L646.0 403.9L647.1 404.0L648.2 404.2L649.3 404.3L650.4 404.4L651.5 404.4L652.6 404.4L653.7 404.3L654.8 404.2L655.9 404.1L657.0 404.0L658.1 403.9L659.2 403.9L660.3 403.9L661.4 404.0L662.5 404.0L663.6 404.0L664.7 404.1L665.8 404.0L666.9 404.0L668.0 404.1L669.1 404.0L670.2 403.8L671.3 403.7L672.4 403.6L673.5 403.4L674.6 403.4L675.7 403.5L676.8 403.6L677.9 403.6L679.0 403.6L680.1 403.6L681.2 403.4L682.3 403.5L683.4 403.5L684.5 403.6L685.6 403.7L686.7 404.0L687.8 403.9L688.9 403.9L690.0 403.9L691.1 403.9L692.2 403.8L693.3 403.8L694.4 403.8L695.5 403.7L696.6 403.6L697.7 403.4L698.8 403.4L699.9 403.4L701.0 403.5L702.1 403.5L703.2 403.7L704.3 403.7L705.4 403.8L706.5 403.8L707.6 403.9L708.7 403.9L709.8 403.9L710.9 403.9L712.0 403.9L713.1 403.8L714.2 403.8L715.3 403.8L716.4 403.8L717.5 403.8L718.6 403.8L719.7 403.9L720.8 403.9L721.9 403.8L723.0 403.8L724.1 403.8L725.2 403.7L726.3 403.7L727.4 403.8L728.5 403.9L729.6 403.9L730.7 404.0L731.8 404.0L732.9 404.0L734.0 404.0L735.1 404.0L736.2 404.0L737.3 404.0L738.4 403.9L739.5 403.9L740.6 403.8L741.7 403.7L742.8 403.7L743.9 403.7L745.0 403.6L746.1 403.6L747.2 403.6L748.3 403.6L749.4 403.6L750.5 403.6L751.6 403.7L752.7 403.9L753.8 403.9L755.0 403.9L756.1 403.9L757.2 403.9L758.3 403.8L759.4 403.8L760.5 403.8L761.6 403.8L762.7 403.8L763.8 404.0L764.9 404.0L766.0 404.0L767.1 404.1L768.2 404.1L769.3 404.0L770.4 404.0L771.5 404.0L772.6 403.9L773.7 403.7L774.8 403.7L775.9 403.6L777.0 403.5L778.1 403.6L779.2 403.6L780.3 403.7L781.4 403.8L782.5 403.8L783.6 403.8L784.7 403.9L785.8 404.0L786.9 404.0L788.0 404.1L789.1 404.2L790.2 404.3L791.3 404.4L792.4 404.5L793.5 404.6L794.6 404.5L795.7 404.5L796.8 404.2L797.9 404.1L799.0 404.1L800.1 403.9L801.2 403.7L802.3 403.5L803.4 403.4L804.5 403.3L805.6 403.2L806.7 403.0L807.8 402.9L808.9 402.7L810.0 402.8L811.1 402.8L812.2 403.0L813.3 403.2L814.4 403.4L815.5 403.7L816.6 403.9L817.7 404.1L818.8 404.2L819.9 404.2L821.0 404.2L822.1 404.2L823.2 404.0L824.3 403.9L825.4 403.7L826.5 403.6L827.6 403.5L828.7 403.3L829.8 403.0L830.9 402.9L832.0 402.9L833.1 403.0L834.2 403.2L835.3 403.4L836.4 403.5L837.5 403.5L838.6 403.6L839.7 403.8L840.8 403.5L841.9 403.1L843.0 402.8L844.1 402.6L845.2 402.3L846.3 402.2L847.4 401.9L848.5 401.6L849.6 401.4L850.7 401.6L851.8 401.7L852.9 401.9L854.0 402.2L855.1 402.5L856.2 402.8L857.3 403.4L858.4 404.1L859.5 404.2L860.6 404.4L861.7 404.5L862.8 404.5L863.9 404.5L865.0 404.4L866.1 404.3L867.2 404.2L868.3 404.1L869.4 404.1L870.5 404.2L871.6 404.3L872.8 404.4L873.9 404.5L875.0 404.6L876.1 404.5L877.2 404.5L878.3 404.5L879.4 404.6L880.5 404.6L881.6 404.6L882.7 404.6L883.8 404.5L884.9 404.1L886.0 403.8L887.1 403.6L888.2 403.4L889.3 403.3L890.4 403.2L891.5 403.2L892.6 403.3L893.7 403.4L894.8 403.6L895.9 403.9L897.0 404.1L898.1 404.3L899.2 404.4L900.3 404.5L901.4 404.5L902.5 404.4L903.6 404.3L904.7 404.3L905.8 404.3L906.9 404.2L908.0 404.2L909.1 404.1L910.2 403.9L911.3 403.7L912.4 403.6L913.5 403.6L914.6 403.6L915.7 403.6L916.8 403.6L917.9 403.5L919.0 403.6L920.1 403.7L921.2 403.7L922.3 403.8L923.4 404.0L924.5 404.1L925.6 404.2L926.7 404.4L927.8 404.5L928.9 404.7L930.0 404.7L931.1 404.7L932.2 404.5L933.3 404.3L934.4 404.0L935.5 403.8L936.6 403.6L937.7 403.3L938.8 403.2L939.9 403.0L941.0 403.1L942.1 403.3L943.2 403.4L944.3 403.5L945.4 403.5L946.5 403.7L947.6 403.4L948.7 403.1L949.8 403.3L949.8 410.8L948.7 411.0L947.6 410.7L946.5 410.4L945.4 410.6L944.3 410.7L943.2 410.8L942.1 410.9L941.0 411.0L939.9 411.1L938.8 411.2L937.7 411.1L936.6 411.0L935.5 410.9L934.4 410.7L933.3 410.5L932.2 410.2L931.1 409.9L930.0 409.8L928.9 409.8L927.8 409.7L926.7 409.7L925.6 409.9L924.5 409.9L923.4 409.9L922.3 409.9L921.2 410.0L920.1 410.0L919.0 410.1L917.9 410.2L916.8 410.2L915.7 410.2L914.6 410.2L913.5 410.1L912.4 410.1L911.3 410.0L910.2 409.9L909.1 409.7L908.0 409.6L906.9 409.6L905.8 409.7L904.7 409.8L903.6 409.9L902.5 409.9L901.4 409.9L900.3 410.0L899.2 409.9L898.1 409.9L897.0 409.9L895.9 410.0L894.8 410.2L893.7 410.4L892.6 410.5L891.5 410.5L890.4 410.5L889.3 410.4L888.2 410.3L887.1 410.2L886.0 410.1L884.9 410.0L883.8 409.7L882.7 409.5L881.6 409.5L880.5 409.5L879.4 409.5L878.3 409.6L877.2 409.8L876.1 409.8L875.0 409.8L873.9 409.9L872.8 409.9L871.6 409.9L870.5 410.0L869.4 410.0L868.3 410.0L867.2 410.0L866.1 409.9L865.0 409.8L863.9 409.7L862.8 409.5L861.7 409.4L860.6 409.4L859.5 409.4L858.4 409.4L857.3 410.1L856.2 410.7L855.1 411.1L854.0 411.5L852.9 411.9L851.8 412.3L850.7 412.6L849.6 412.9L848.5 412.7L847.4 412.4L846.3 412.1L845.2 411.9L844.1 411.7L843.0 411.5L841.9 411.3L840.8 410.9L839.7 410.7L838.6 410.7L837.5 410.7L836.4 410.7L835.3 410.7L834.2 410.5L833.1 410.6L832.0 410.7L830.9 410.7L829.8 410.7L828.7 410.8L827.6 410.7L826.5 410.6L825.4 410.5L824.3 410.3L823.2 410.1L822.1 409.9L821.0 409.8L819.9 409.9L818.8 409.9L817.7 410.1L816.6 410.3L815.5 410.5L814.4 410.6L813.3 410.7L812.2 410.8L811.1 410.9L810.0 411.0L808.9 411.1L807.8 411.1L806.7 411.1L805.6 410.9L804.5 410.8L803.4 410.6L802.3 410.4L801.2 410.1L800.1 409.9L799.0 409.8L797.9 410.0L796.8 410.0L795.7 410.0L794.6 410.1L793.5 410.2L792.4 410.2L791.3 410.1L790.2 410.1L789.1 410.0L788.0 409.8L786.9 409.7L785.8 409.7L784.7 409.6L783.6 409.6L782.5 409.7L781.4 409.8L780.3 409.9L779.2 410.1L778.1 410.3L777.0 410.4L775.9 410.4L774.8 410.5L773.7 410.6L772.6 410.6L771.5 410.7L770.4 410.7L769.3 410.7L768.2 410.4L767.1 410.3L766.0 410.2L764.9 410.1L763.8 410.0L762.7 410.2L761.6 410.2L760.5 410.2L759.4 410.2L758.3 410.2L757.2 410.1L756.1 410.1L755.0 410.1L753.8 410.1L752.7 410.0L751.6 410.0L750.5 410.0L749.4 410.0L748.3 409.9L747.2 409.9L746.1 409.9L745.0 409.8L743.9 409.8L742.8 409.8L741.7 409.8L740.6 409.9L739.5 410.0L738.4 410.0L737.3 410.1L736.2 410.2L735.1 410.2L734.0 410.1L732.9 410.0L731.8 409.9L730.7 409.8L729.6 409.8L728.5 409.7L727.4 409.8L726.3 409.9L725.2 410.0L724.1 410.1L723.0 410.2L721.9 410.2L720.8 410.3L719.7 410.3L718.6 410.3L717.5 410.3L716.4 410.3L715.3 410.2L714.2 410.2L713.1 410.1L712.0 410.1L710.9 410.2L709.8 410.3L708.7 410.4L707.6 410.5L706.5 410.4L705.4 410.3L704.3 410.2L703.2 410.1L702.1 410.0L701.0 410.0L699.9 410.0L698.8 410.0L697.7 410.1L696.6 409.9L695.5 409.8L694.4 409.8L693.3 409.8L692.2 409.9L691.1 410.3L690.0 410.6L688.9 410.8L687.8 410.9L686.7 410.9L685.6 410.8L684.5 410.6L683.4 410.4L682.3 410.1L681.2 409.9L680.1 409.7L679.0 409.7L677.9 409.7L676.8 409.9L675.7 410.0L674.6 410.4L673.5 410.5L672.4 410.7L671.3 410.7L670.2 410.7L669.1 410.6L668.0 410.6L666.9 410.5L665.8 410.4L664.7 410.4L663.6 410.3L662.5 410.2L661.4 410.1L660.3 410.0L659.2 410.0L658.1 409.9L657.0 409.9L655.9 410.0L654.8 410.2L653.7 410.2L652.6 410.3L651.5 410.4L650.4 410.5L649.3 410.5L648.2 410.5L647.1 410.6L646.0 410.5L644.9 410.4L643.8 410.3L642.7 410.8L641.6 411.2L640.5 411.5L639.4 411.9L638.3 412.2L637.2 412.5L636.0 412.8L634.9 413.1L633.8 413.1L632.7 412.8L631.6 412.6L630.5 412.3L629.4 412.0L628.3 411.8L627.2 411.4L626.1 411.0L625.0 410.3L623.9 410.2L622.8 410.2L621.7 410.2L620.6 410.3L619.5 410.5L618.4 410.6L617.3 410.7L616.2 410.8L615.1 410.9L614.0 411.1L612.9 411.2L611.8 411.2L610.7 411.2L609.6 411.1L608.5 410.8L607.4 410.7L606.3 410.7L605.2 410.7L604.1 410.6L603.0 410.5L601.9 410.3L600.8 410.2L599.7 410.1L598.6 410.1L597.5 410.2L596.4 410.3L595.3 410.5L594.2 410.6L593.1 410.7L592.0 410.9L590.9 411.0L589.8 411.0L588.7 411.0L587.6 411.0L586.5 410.9L585.4 410.8L584.3 410.7L583.2 410.7L582.1 410.8L581.0 410.8L579.9 411.0L578.8 411.2L577.7 411.2L576.6 411.2L575.5 411.3L574.4 411.3L573.3 411.2L572.2 411.1L571.1 411.0L570.0 410.6L568.9 410.4L567.8 410.3L566.7 410.2L565.6 410.1L564.5 410.2L563.4 410.3L562.3 410.5L561.2 410.9L560.1 411.2L559.0 411.5L557.9 411.6L556.8 411.7L555.7 411.7L554.6 411.7L553.5 411.7L552.4 411.5L551.3 411.4L550.2 411.3L549.1 411.1L548.0 411.1L546.9 410.9L545.8 410.8L544.7 410.5L543.6 410.4L542.5 410.4L541.4 410.6L540.3 410.6L539.2 410.8L538.1 410.8L537.0 410.9L535.9 410.9L534.8 410.8L533.7 410.7L532.6 410.7L531.5 410.6L530.4 410.6L529.3 410.7L528.2 410.7L527.1 410.6L526.0 410.6L524.9 410.5L523.8 410.5L522.7 410.5L521.6 410.5L520.5 410.3L519.3 410.3L518.2 410.4L517.1 410.4L516.0 410.5L514.9 410.6L513.8 410.5L512.7 410.4L511.6 410.3L510.5 410.2L509.4 410.2L508.3 410.2L507.2 410.2L506.1 410.2L505.0 410.2L503.9 410.1L502.8 410.1L501.7 410.2L500.6 410.4L499.5 410.5L498.4 410.9L497.3 411.0L496.2 411.1L495.1 411.1L494.0 411.1L492.9 411.1L491.8 411.3L490.7 411.4L489.6 411.4L488.5 411.4L487.4 411.2L486.3 411.2L485.2 411.1L484.1 411.1L483.0 411.1L481.9 411.2L480.8 411.4L479.7 411.4L478.6 411.3L477.5 411.2L476.4 411.0L475.3 410.9L474.2 410.9L473.1 410.8L472.0 410.8L470.9 410.7L469.8 410.3L468.7 409.9L467.6 409.4L466.5 409.2L465.4 409.0L464.3 408.8L463.2 408.5L462.1 408.1L461.0 407.8Z"/><path d="M461.0 461.4L461.0 460.6L462.1 460.3L463.2 459.9L464.3 459.7L465.4 459.4L466.5 458.9L467.6 458.4L468.7 457.9L469.8 457.6L470.9 457.4L472.0 457.3L473.1 457.3L474.2 457.3L475.3 457.3L476.4 457.3L477.5 457.2L478.6 457.3L479.7 457.3L480.8 457.3L481.9 457.3L483.0 457.6L484.1 457.6L485.2 457.6L486.3 457.5L487.4 457.4L488.5 457.2L489.6 457.1L490.7 456.9L491.8 456.7L492.9 456.5L494.0 456.3L495.1 456.1L496.2 456.1L497.3 456.2L498.4 456.3L499.5 456.5L500.6 456.7L501.7 457.0L502.8 457.2L503.9 457.4L505.0 457.6L506.1 457.7L507.2 457.6L508.3 457.5L509.4 457.5L510.5 457.5L511.6 457.4L512.7 457.4L513.8 457.3L514.9 457.1L516.0 457.0L517.1 457.1L518.2 457.1L519.3 457.2L520.5 457.3L521.6 457.4L522.7 457.5L523.8 457.6L524.9 457.8L526.0 457.9L527.1 458.0L528.2 458.0L529.3 457.9L530.4 457.9L531.5 457.8L532.6 457.7L533.7 457.7L534.8 457.7L535.9 457.8L537.0 457.9L538.1 458.1L539.2 458.3L540.3 458.5L541.4 458.6L542.5 458.7L543.6 458.8L544.7 458.9L545.8 458.9L546.9 459.0L548.0 459.0L549.1 459.1L550.2 459.0L551.3 459.0L552.4 458.9L553.5 458.7L554.6 458.6L555.7 458.6L556.8 458.6L557.9 458.6L559.0 458.7L560.1 458.8L561.2 458.9L562.3 458.8L563.4 458.7L564.5 458.6L565.6 458.4L566.7 458.3L567.8 458.3L568.9 458.4L570.0 458.4L571.1 458.5L572.2 458.6L573.3 458.6L574.4 458.7L575.5 458.8L576.6 459.0L577.7 459.1L578.8 459.0L579.9 458.9L581.0 458.8L582.1 458.6L583.2 458.5L584.3 458.5L585.4 458.5L586.5 458.5L587.6 458.4L588.7 458.4L589.8 458.4L590.9 458.5L592.0 458.6L593.1 458.8L594.2 458.8L595.3 458.9L596.4 458.9L597.5 458.9L598.6 458.9L599.7 458.8L600.8 458.7L601.9 458.7L603.0 458.6L604.1 458.5L605.2 458.4L606.3 458.4L607.4 458.4L608.5 458.3L609.6 458.1L610.7 458.1L611.8 458.1L612.9 458.1L614.0 458.1L615.1 458.2L616.2 458.2L617.3 458.2L618.4 458.3L619.5 458.3L620.6 458.4L621.7 458.4L622.8 458.5L623.9 458.4L625.0 458.3L626.1 458.3L627.2 458.3L628.3 458.3L629.4 458.4L630.5 458.4L631.6 458.5L632.7 458.6L633.8 458.6L634.9 458.7L636.0 458.8L637.2 458.9L638.3 458.8L639.4 458.7L640.5 458.6L641.6 458.4L642.7 458.3L643.8 458.3L644.9 458.4L646.0 458.5L647.1 458.6L648.2 458.8L649.3 458.9L650.4 458.9L651.5 459.0L652.6 459.0L653.7 459.1L654.8 458.9L655.9 458.7L657.0 458.6L658.1 458.4L659.2 458.2L660.3 458.0L661.4 457.9L662.5 457.7L663.6 457.6L664.7 457.6L665.8 457.6L666.9 457.7L668.0 457.8L669.1 457.9L670.2 458.0L671.3 458.1L672.4 458.1L673.5 458.2L674.6 458.2L675.7 458.1L676.8 458.1L677.9 458.0L679.0 458.0L680.1 458.0L681.2 458.0L682.3 458.1L683.4 458.1L684.5 458.2L685.6 458.2L686.7 458.3L687.8 458.3L688.9 458.3L690.0 458.2L691.1 458.2L692.2 458.1L693.3 458.1L694.4 458.1L695.5 458.1L696.6 458.0L697.7 458.0L698.8 458.1L699.9 458.2L701.0 458.3L702.1 458.5L703.2 458.5L704.3 458.5L705.4 458.4L706.5 458.3L707.6 458.2L708.7 458.1L709.8 458.1L710.9 458.2L712.0 458.2L713.1 458.3L714.2 458.2L715.3 458.2L716.4 458.2L717.5 458.2L718.6 458.1L719.7 458.0L720.8 457.9L721.9 457.9L723.0 458.0L724.1 458.1L725.2 458.4L726.3 458.5L727.4 458.6L728.5 458.6L729.6 458.5L730.7 458.3L731.8 458.2L732.9 458.2L734.0 458.3L735.1 458.5L736.2 458.9L737.3 459.0L738.4 459.0L739.5 459.0L740.6 458.9L741.7 458.7L742.8 458.7L743.9 458.6L745.0 458.5L746.1 458.5L747.2 458.3L748.3 458.3L749.4 458.2L750.5 458.3L751.6 458.3L752.7 458.4L753.8 458.3L755.0 458.2L756.1 458.1L757.2 458.0L758.3 457.9L759.4 458.0L760.5 458.0L761.6 458.1L762.7 458.1L763.8 458.0L764.9 457.9L766.0 457.9L767.1 457.8L768.2 457.8L769.3 457.7L770.4 457.8L771.5 457.8L772.6 457.9L773.7 458.0L774.8 458.3L775.9 458.4L777.0 458.5L778.1 458.5L779.2 458.6L780.3 458.5L781.4 458.4L782.5 458.4L783.6 458.3L784.7 458.2L785.8 458.1L786.9 458.1L788.0 457.9L789.1 457.9L790.2 457.8L791.3 457.7L792.4 457.7L793.5 457.7L794.6 457.7L795.7 457.6L796.8 457.7L797.9 457.8L799.0 457.9L800.1 458.1L801.2 458.3L802.3 458.5L803.4 458.5L804.5 458.4L805.6 458.4L806.7 458.3L807.8 458.2L808.9 458.2L810.0 458.2L811.1 458.1L812.2 457.9L813.3 458.0L814.4 457.9L815.5 457.7L816.6 457.5L817.7 457.4L818.8 457.3L819.9 457.1L821.0 457.1L822.1 457.0L823.2 456.9L824.3 456.7L825.4 456.5L826.5 456.6L827.6 456.6L828.7 456.7L829.8 456.9L830.9 457.2L832.0 457.4L833.1 457.5L834.2 457.7L835.3 457.8L836.4 458.0L837.5 458.1L838.6 458.2L839.7 458.3L840.8 458.3L841.9 458.2L843.0 458.2L844.1 458.2L845.2 458.3L846.3 458.4L847.4 458.4L848.5 458.5L849.6 458.5L850.7 458.3L851.8 458.2L852.9 458.0L854.0 457.9L855.1 457.8L856.2 457.8L857.3 457.8L858.4 457.7L859.5 457.6L860.6 457.6L861.7 457.6L862.8 457.7L863.9 457.8L865.0 457.9L866.1 458.0L867.2 458.0L868.3 458.0L869.4 457.9L870.5 458.0L871.6 458.1L872.8 458.1L873.9 458.1L875.0 458.1L876.1 458.0L877.2 458.0L878.3 458.1L879.4 458.3L880.5 458.2L881.6 458.1L882.7 458.0L883.8 458.0L884.9 457.7L886.0 457.7L887.1 457.7L888.2 457.8L889.3 457.9L890.4 458.2L891.5 458.4L892.6 458.5L893.7 458.5L894.8 458.5L895.9 458.5L897.0 458.5L898.1 458.5L899.2 458.5L900.3 458.5L901.4 458.4L902.5 458.3L903.6 458.3L904.7 458.2L905.8 458.2L906.9 458.0L908.0 458.1L909.1 458.1L910.2 458.1L911.3 458.2L912.4 458.3L913.5 458.3L914.6 458.2L915.7 458.2L916.8 458.2L917.9 458.2L919.0 458.3L920.1 458.4L921.2 458.5L922.3 458.6L923.4 458.7L924.5 458.6L925.6 458.6L926.7 458.6L927.8 458.6L928.9 458.6L930.0 458.4L931.1 458.3L932.2 458.1L933.3 457.9L934.4 457.7L935.5 457.7L936.6 457.7L937.7 457.9L938.8 458.0L939.9 458.3L941.0 458.5L942.1 458.7L943.2 458.6L944.3 458.5L945.4 458.4L946.5 457.9L947.6 457.7L948.7 457.5L949.8 457.7L949.8 465.2L948.7 465.2L947.6 465.1L946.5 464.9L945.4 464.6L944.3 464.5L943.2 464.5L942.1 464.5L941.0 464.5L939.9 464.6L938.8 464.7L937.7 464.9L936.6 465.0L935.5 465.1L934.4 465.2L933.3 465.2L932.2 465.1L931.1 465.0L930.0 464.9L928.9 464.8L927.8 464.7L926.7 464.6L925.6 464.6L924.5 464.4L923.4 464.3L922.3 464.3L921.2 464.2L920.1 464.1L919.0 464.1L917.9 464.1L916.8 464.1L915.7 464.2L914.6 464.3L913.5 464.5L912.4 464.6L911.3 464.7L910.2 464.9L909.1 464.9L908.0 464.9L906.9 464.9L905.8 465.0L904.7 464.9L903.6 464.8L902.5 464.7L901.4 464.7L900.3 464.5L899.2 464.6L898.1 464.7L897.0 464.7L895.9 464.8L894.8 464.9L893.7 464.9L892.6 464.8L891.5 464.8L890.4 464.8L889.3 464.6L888.2 464.6L887.1 464.5L886.0 464.5L884.9 464.6L883.8 464.8L882.7 465.0L881.6 465.1L880.5 465.2L879.4 465.1L878.3 465.1L877.2 465.0L876.1 464.8L875.0 464.7L873.9 464.5L872.8 464.4L871.6 464.5L870.5 464.6L869.4 464.6L868.3 464.7L867.2 464.8L866.1 464.9L865.0 464.8L863.9 464.8L862.8 464.7L861.7 464.6L860.6 464.6L859.5 464.7L858.4 464.8L857.3 464.8L856.2 465.0L855.1 465.0L854.0 465.0L852.9 465.0L851.8 464.9L850.7 464.7L849.6 464.5L848.5 464.5L847.4 464.5L846.3 464.5L845.2 464.5L844.1 464.5L843.0 464.6L841.9 464.6L840.8 464.5L839.7 464.5L838.6 464.6L837.5 464.7L836.4 464.7L835.3 464.8L834.2 464.9L833.1 465.0L832.0 465.2L830.9 465.3L829.8 465.4L828.7 465.6L827.6 465.7L826.5 465.7L825.4 465.7L824.3 465.6L823.2 465.5L822.1 465.4L821.0 465.4L819.9 465.4L818.8 465.4L817.7 465.4L816.6 465.3L815.5 465.1L814.4 465.0L813.3 464.8L812.2 464.6L811.1 464.5L810.0 464.4L808.9 464.3L807.8 464.3L806.7 464.2L805.6 464.2L804.5 464.2L803.4 464.3L802.3 464.4L801.2 464.7L800.1 465.0L799.0 465.1L797.9 465.2L796.8 465.2L795.7 465.2L794.6 465.1L793.5 465.0L792.4 465.0L791.3 464.9L790.2 464.8L789.1 464.9L788.0 465.0L786.9 465.1L785.8 465.1L784.7 465.0L783.6 464.8L782.5 464.6L781.4 464.5L780.3 464.4L779.2 464.4L778.1 464.4L777.0 464.5L775.9 464.5L774.8 464.5L773.7 464.6L772.6 464.6L771.5 464.5L770.4 464.5L769.3 464.3L768.2 464.1L767.1 464.1L766.0 464.1L764.9 464.2L763.8 464.4L762.7 464.7L761.6 464.8L760.5 464.8L759.4 464.8L758.3 464.7L757.2 464.6L756.1 464.6L755.0 464.6L753.8 464.6L752.7 464.6L751.6 464.6L750.5 464.5L749.4 464.5L748.3 464.5L747.2 464.5L746.1 464.4L745.0 464.3L743.9 464.2L742.8 464.2L741.7 464.2L740.6 464.2L739.5 464.3L738.4 464.4L737.3 464.4L736.2 464.5L735.1 464.6L734.0 464.7L732.9 464.6L731.8 464.6L730.7 464.6L729.6 464.5L728.5 464.4L727.4 464.4L726.3 464.4L725.2 464.3L724.1 464.3L723.0 464.4L721.9 464.4L720.8 464.5L719.7 464.5L718.6 464.5L717.5 464.4L716.4 464.4L715.3 464.4L714.2 464.4L713.1 464.5L712.0 464.5L710.9 464.4L709.8 464.4L708.7 464.3L707.6 464.2L706.5 464.2L705.4 464.2L704.3 464.2L703.2 464.2L702.1 464.3L701.0 464.3L699.9 464.5L698.8 464.5L697.7 464.7L696.6 464.7L695.5 464.8L694.4 464.8L693.3 464.9L692.2 465.0L691.1 465.0L690.0 465.0L688.9 464.9L687.8 464.8L686.7 464.7L685.6 464.6L684.5 464.5L683.4 464.5L682.3 464.4L681.2 464.3L680.1 464.2L679.0 464.0L677.9 464.0L676.8 464.0L675.7 464.1L674.6 464.4L673.5 464.6L672.4 464.8L671.3 465.0L670.2 465.1L669.1 465.2L668.0 465.3L666.9 465.3L665.8 465.4L664.7 465.3L663.6 465.1L662.5 465.0L661.4 464.9L660.3 464.8L659.2 464.8L658.1 464.9L657.0 464.9L655.9 464.8L654.8 464.7L653.7 464.5L652.6 464.3L651.5 464.3L650.4 464.3L649.3 464.3L648.2 464.3L647.1 464.3L646.0 464.2L644.9 464.2L643.8 464.2L642.7 464.1L641.6 464.1L640.5 464.2L639.4 464.1L638.3 464.0L637.2 463.9L636.0 463.9L634.9 463.9L633.8 464.0L632.7 464.1L631.6 464.2L630.5 464.3L629.4 464.4L628.3 464.3L627.2 464.2L626.1 464.2L625.0 464.2L623.9 464.2L622.8 464.2L621.7 464.2L620.6 464.2L619.5 464.1L618.4 464.0L617.3 463.9L616.2 463.9L615.1 463.8L614.0 463.9L612.9 464.1L611.8 464.2L610.7 464.4L609.6 464.5L608.5 464.7L607.4 464.7L606.3 464.7L605.2 464.6L604.1 464.5L603.0 464.3L601.9 464.2L600.8 464.0L599.7 463.9L598.6 463.9L597.5 463.8L596.4 463.8L595.3 463.8L594.2 463.9L593.1 464.0L592.0 464.1L590.9 464.2L589.8 464.2L588.7 464.2L587.6 464.2L586.5 464.2L585.4 464.2L584.3 464.2L583.2 464.2L582.1 464.1L581.0 464.1L579.9 464.1L578.8 464.1L577.7 464.2L576.6 464.3L575.5 464.4L574.4 464.5L573.3 464.5L572.2 464.5L571.1 464.4L570.0 464.3L568.9 464.3L567.8 464.2L566.7 464.1L565.6 464.1L564.5 464.2L563.4 464.1L562.3 464.1L561.2 464.0L560.1 464.0L559.0 463.9L557.9 463.9L556.8 464.0L555.7 464.1L554.6 464.1L553.5 464.2L552.4 464.1L551.3 464.1L550.2 463.9L549.1 463.8L548.0 463.7L546.9 463.7L545.8 463.8L544.7 463.9L543.6 464.0L542.5 464.2L541.4 464.3L540.3 464.4L539.2 464.5L538.1 464.6L537.0 464.8L535.9 464.9L534.8 464.9L533.7 464.9L532.6 464.8L531.5 464.7L530.4 464.6L529.3 464.6L528.2 464.6L527.1 464.7L526.0 465.0L524.9 465.3L523.8 465.5L522.7 465.7L521.6 465.9L520.5 466.0L519.3 466.0L518.2 466.1L517.1 466.1L516.0 466.1L514.9 466.0L513.8 465.9L512.7 465.8L511.6 465.7L510.5 465.6L509.4 465.4L508.3 465.4L507.2 465.3L506.1 465.2L505.0 465.3L503.9 465.5L502.8 465.7L501.7 465.9L500.6 465.9L499.5 466.1L498.4 466.1L497.3 466.3L496.2 466.3L495.1 466.3L494.0 466.2L492.9 466.1L491.8 466.0L490.7 465.9L489.6 465.8L488.5 465.7L487.4 465.7L486.3 465.5L485.2 465.4L484.1 465.2L483.0 465.2L481.9 465.0L480.8 465.0L479.7 465.0L478.6 465.0L477.5 464.9L476.4 465.1L475.3 465.2L474.2 465.2L473.1 465.3L472.0 465.3L470.9 465.0L469.8 464.6L468.7 464.3L467.6 463.8L466.5 463.4L465.4 463.0L464.3 462.9L463.2 462.7L462.1 462.4L461.0 462.2Z"/></g></svg>
</body></html>
